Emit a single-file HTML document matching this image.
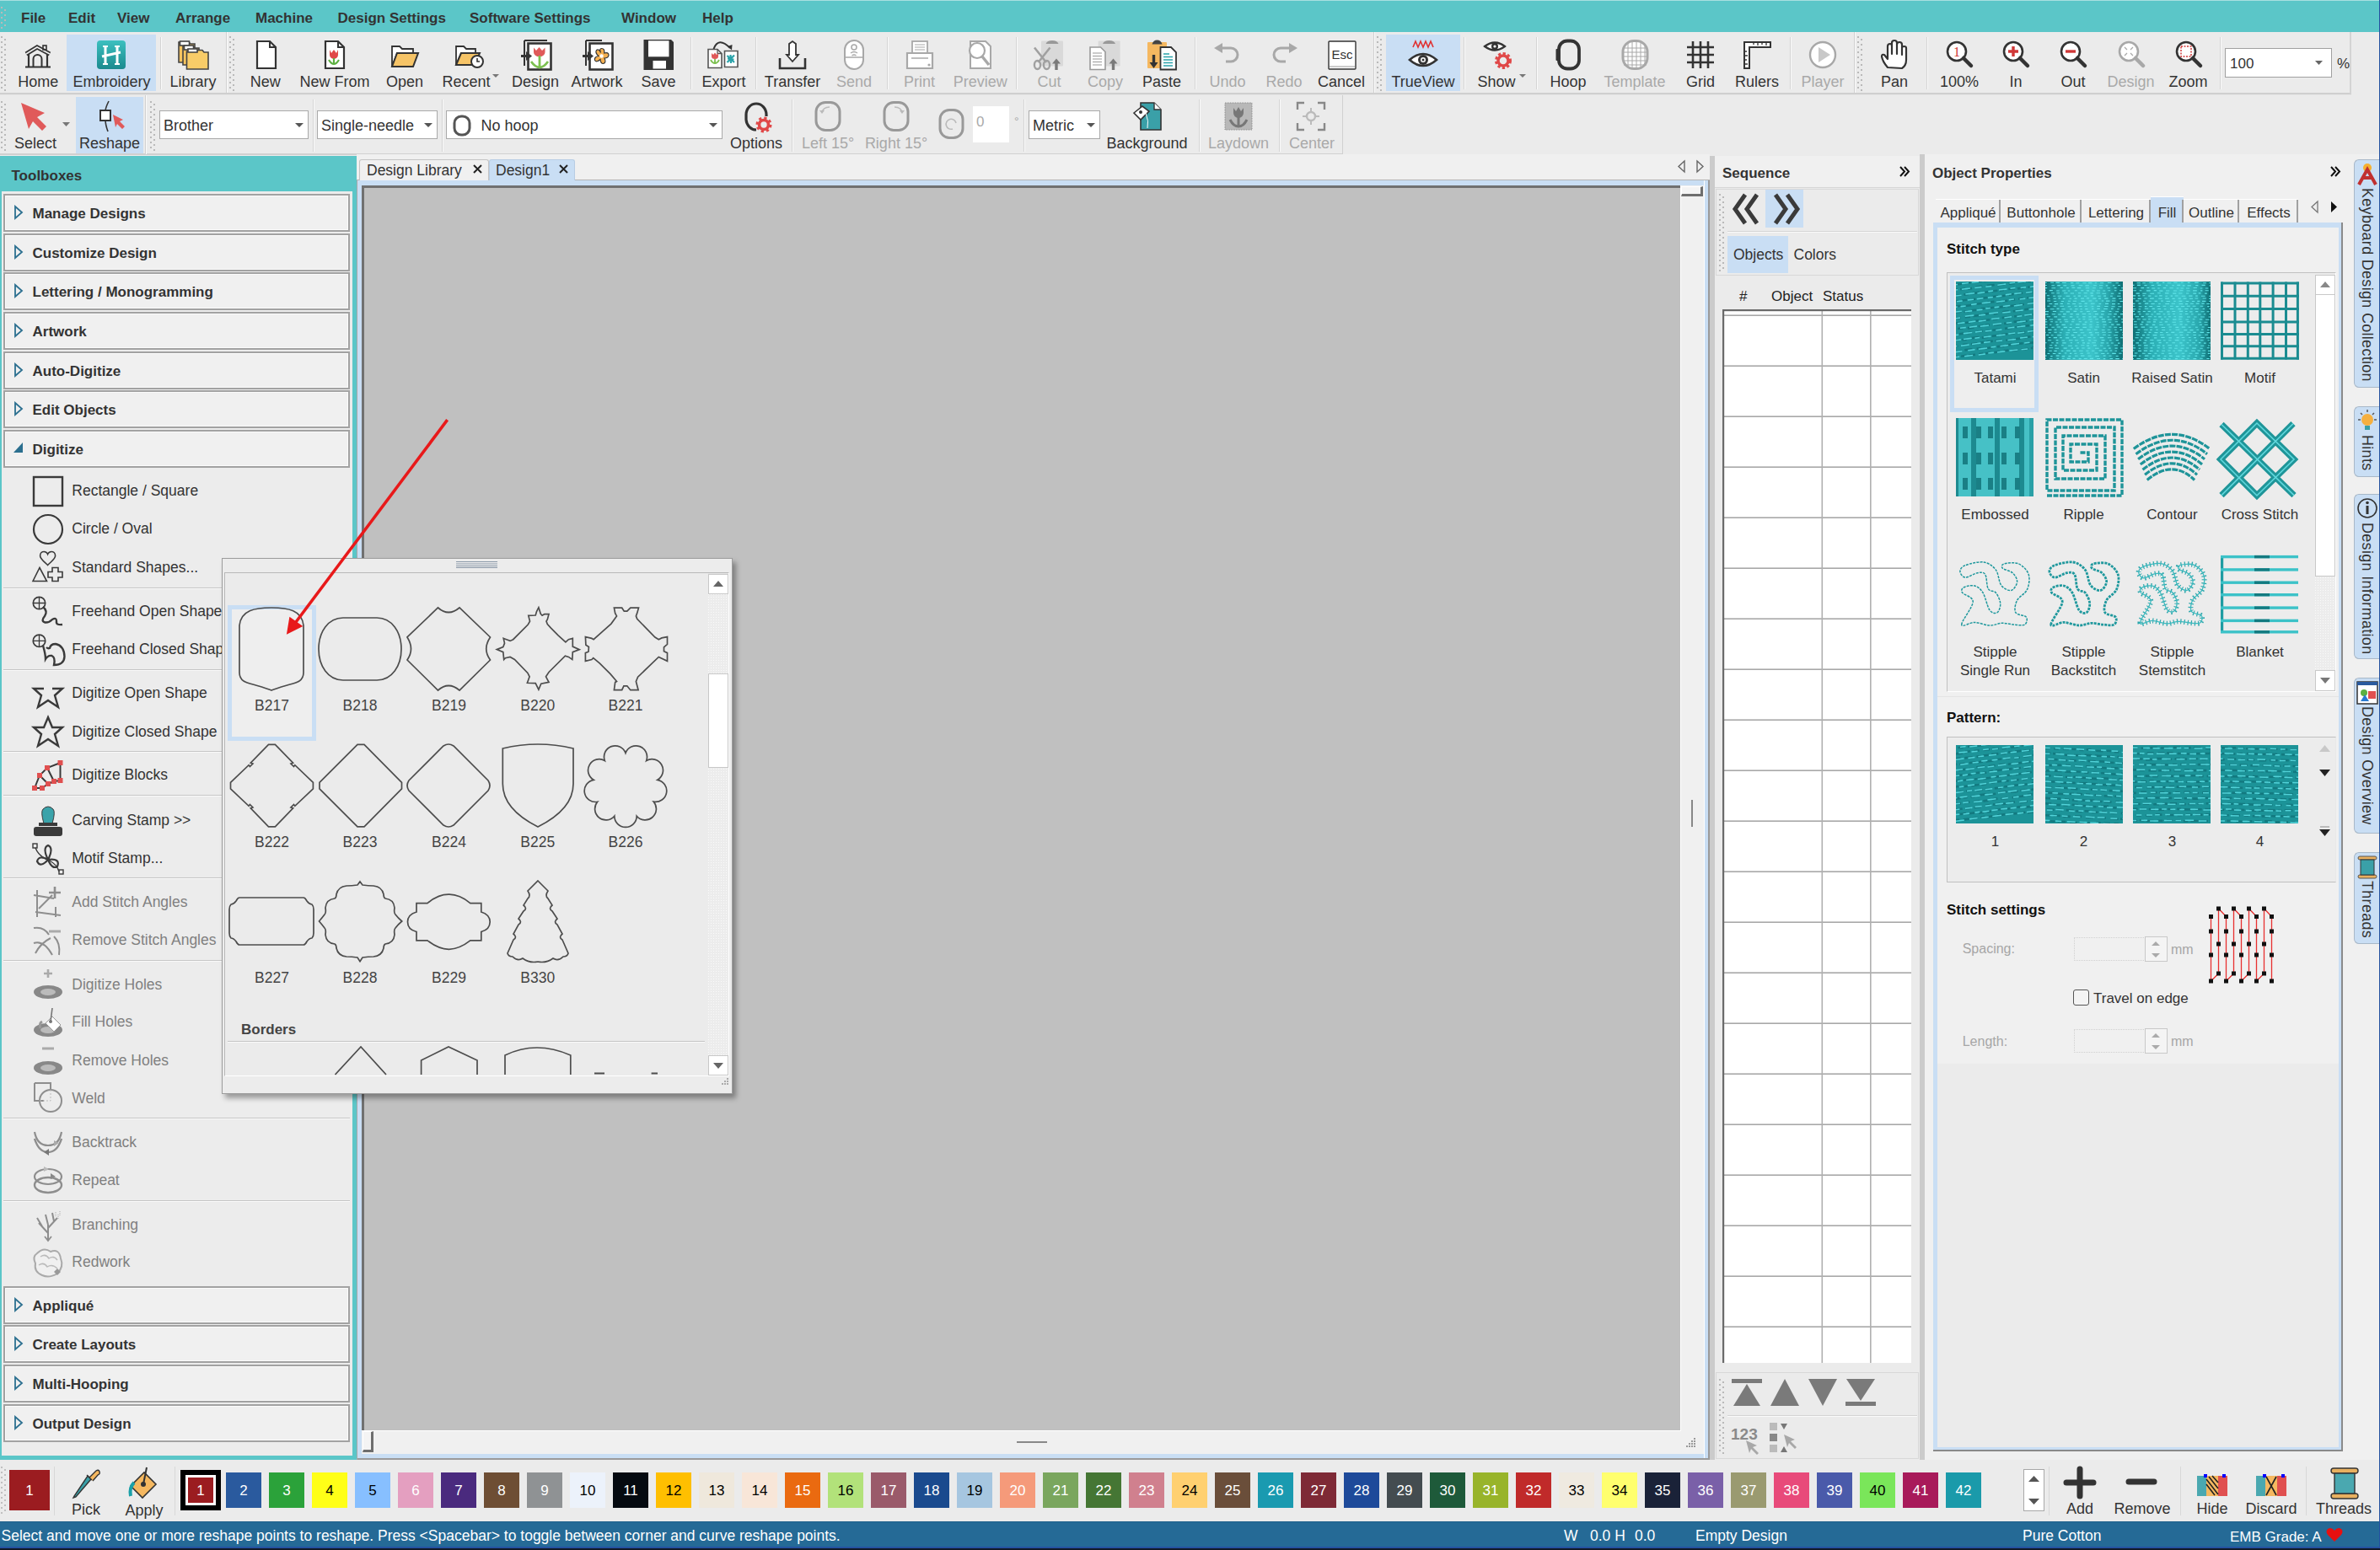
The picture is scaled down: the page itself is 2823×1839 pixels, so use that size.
<!DOCTYPE html>
<html><head><meta charset="utf-8"><style>
html,body{margin:0;padding:0;}
body{width:2823px;height:1839px;overflow:hidden;position:relative;background:#ebebeb;font-family:"Liberation Sans", sans-serif;}
body div{position:absolute;box-sizing:border-box;}
svg{overflow:visible}
</style></head><body>
<div style="left:0px;top:0px;width:2823px;height:38px;background:#5bc6c8;"></div><div style="left:0px;top:0px;width:2823px;height:1px;background:#a8e0e0;"></div><svg style="position:absolute;left:0px;top:8px;" width="8" height="26" viewBox="0 0 8 26"><rect x="1" y="0" width="2" height="2" fill="#b9b9b9"/><rect x="5" y="3" width="2" height="2" fill="#b9b9b9"/><rect x="1" y="6" width="2" height="2" fill="#b9b9b9"/><rect x="5" y="9" width="2" height="2" fill="#b9b9b9"/><rect x="1" y="12" width="2" height="2" fill="#b9b9b9"/><rect x="5" y="15" width="2" height="2" fill="#b9b9b9"/><rect x="1" y="18" width="2" height="2" fill="#b9b9b9"/><rect x="5" y="21" width="2" height="2" fill="#b9b9b9"/><rect x="1" y="24" width="2" height="2" fill="#b9b9b9"/></svg><div style="left:25px;top:12.5px;font-size:17px;line-height:17px;color:#333;font-weight:700;white-space:nowrap;">File</div><div style="left:81px;top:12.5px;font-size:17px;line-height:17px;color:#333;font-weight:700;white-space:nowrap;">Edit</div><div style="left:139px;top:12.5px;font-size:17px;line-height:17px;color:#333;font-weight:700;white-space:nowrap;">View</div><div style="left:208px;top:12.5px;font-size:17px;line-height:17px;color:#333;font-weight:700;white-space:nowrap;">Arrange</div><div style="left:303px;top:12.5px;font-size:17px;line-height:17px;color:#333;font-weight:700;white-space:nowrap;">Machine</div><div style="left:400.5px;top:12.5px;font-size:17px;line-height:17px;color:#333;font-weight:700;white-space:nowrap;">Design Settings</div><div style="left:557px;top:12.5px;font-size:17px;line-height:17px;color:#333;font-weight:700;white-space:nowrap;">Software Settings</div><div style="left:737px;top:12.5px;font-size:17px;line-height:17px;color:#333;font-weight:700;white-space:nowrap;">Window</div><div style="left:833px;top:12.5px;font-size:17px;line-height:17px;color:#333;font-weight:700;white-space:nowrap;">Help</div><div style="left:0px;top:38px;width:2823px;height:72px;background:#ebebeb;"></div><div style="left:0px;top:110px;width:2789px;height:3px;background:#cfcfcf;border-bottom:1px solid #e4e4e4;"></div><div style="left:2787px;top:38px;width:2px;height:73px;background:#d4d4d4;"></div><svg style="position:absolute;left:0px;top:43px;" width="8" height="64" viewBox="0 0 8 64"><rect x="1" y="0" width="2" height="2" fill="#b9b9b9"/><rect x="5" y="3" width="2" height="2" fill="#b9b9b9"/><rect x="1" y="6" width="2" height="2" fill="#b9b9b9"/><rect x="5" y="9" width="2" height="2" fill="#b9b9b9"/><rect x="1" y="12" width="2" height="2" fill="#b9b9b9"/><rect x="5" y="15" width="2" height="2" fill="#b9b9b9"/><rect x="1" y="18" width="2" height="2" fill="#b9b9b9"/><rect x="5" y="21" width="2" height="2" fill="#b9b9b9"/><rect x="1" y="24" width="2" height="2" fill="#b9b9b9"/><rect x="5" y="27" width="2" height="2" fill="#b9b9b9"/><rect x="1" y="30" width="2" height="2" fill="#b9b9b9"/><rect x="5" y="33" width="2" height="2" fill="#b9b9b9"/><rect x="1" y="36" width="2" height="2" fill="#b9b9b9"/><rect x="5" y="39" width="2" height="2" fill="#b9b9b9"/><rect x="1" y="42" width="2" height="2" fill="#b9b9b9"/><rect x="5" y="45" width="2" height="2" fill="#b9b9b9"/><rect x="1" y="48" width="2" height="2" fill="#b9b9b9"/><rect x="5" y="51" width="2" height="2" fill="#b9b9b9"/><rect x="1" y="54" width="2" height="2" fill="#b9b9b9"/><rect x="5" y="57" width="2" height="2" fill="#b9b9b9"/><rect x="1" y="60" width="2" height="2" fill="#b9b9b9"/><rect x="5" y="63" width="2" height="2" fill="#b9b9b9"/></svg><div style="left:79px;top:41px;width:106px;height:67px;background:#c9def4;"></div><div style="left:1644px;top:41px;width:88px;height:67px;background:#c9def4;"></div><svg style="position:absolute;left:27px;top:47px;" width="36" height="36" viewBox="0 0 36 36"><path d="M4 17 L17 9 L32 17" fill="none" stroke="#333" stroke-width="5"/><path d="M4 17 L17 9 L32 17" fill="none" stroke="#eee" stroke-width="1.6"/><rect x="24" y="7" width="4" height="5" fill="none" stroke="#333" stroke-width="1.6"/><path d="M7 17 V32 M29 17 V32 M3 32.5 H33" stroke="#333" stroke-width="2.2"/><path d="M12.5 32 V23 A5 5 0 0 1 22.5 23 V32" fill="none" stroke="#333" stroke-width="2"/></svg><div style="left:-14.7px;top:88.1px;width:120px;text-align:center;font-size:18px;line-height:18px;color:#333;font-weight:400;white-space:nowrap;">Home</div><svg style="position:absolute;left:114px;top:47px;" width="36" height="36" viewBox="0 0 36 36"><defs><linearGradient id="eg" x1="0" y1="0" x2="0" y2="1"><stop offset="0" stop-color="#3cc0bf"/><stop offset="1" stop-color="#1b8a8e"/></linearGradient></defs><rect x="1" y="1" width="34" height="34" rx="4" fill="url(#eg)"/><path d="M11 7 V30 M25 7 V30 M7 20 L29 15" stroke="#fff" stroke-width="3"/><path d="M8 8 H14 M22 8 H28 M8 29 H14 M22 29 H28" stroke="#fff" stroke-width="2"/></svg><div style="left:72.5px;top:88.1px;width:120px;text-align:center;font-size:18px;line-height:18px;color:#333;font-weight:400;white-space:nowrap;">Embroidery</div><svg style="position:absolute;left:211px;top:47px;" width="36" height="36" viewBox="0 0 36 36"><g stroke="#444" stroke-width="1.6"><path d="M1 3 H13 L15 5 H20 V27 H1 Z" fill="#f5c460"/><rect x="2.5" y="2" width="11" height="5" fill="#fff"/><path d="M6 8 H18 L20 10 H25 V30 H6 Z" fill="#f5c460"/><rect x="7.5" y="7" width="11" height="5" fill="#fff"/><path d="M10.5 14 H22 L24 12.5 H29 L31 15 H36 V35 H10.5 Z" fill="#f8cc68"/><rect x="12" y="11" width="11" height="4" fill="#fff"/></g></svg><div style="left:169.0px;top:88.1px;width:120px;text-align:center;font-size:18px;line-height:18px;color:#333;font-weight:400;white-space:nowrap;">Library</div><svg style="position:absolute;left:297px;top:47px;" width="36" height="36" viewBox="0 0 36 36"><path d="M8 2 H23 L30 9 V34 H8 Z" fill="#fff" stroke="#333" stroke-width="2.2"/><path d="M23 2 V9 H30" fill="none" stroke="#333" stroke-width="2"/></svg><div style="left:254.7px;top:88.1px;width:120px;text-align:center;font-size:18px;line-height:18px;color:#333;font-weight:400;white-space:nowrap;">New</div><svg style="position:absolute;left:379px;top:47px;" width="36" height="36" viewBox="0 0 36 36"><path d="M7 2 H22 L29 9 V34 H7 Z" fill="#fff" stroke="#333" stroke-width="2.2"/><path d="M22 2 V9 H29" fill="none" stroke="#333" stroke-width="2"/><path d="M12 12 L14 16 L17 12 L20 16 L22 12 V18 A5 5 0 0 1 12 18 Z" fill="#e04848"/><path d="M17 22 V30 M11 24 Q14 29 17 29 M23 24 Q20 29 17 29" stroke="#5cb040" stroke-width="2.2" fill="none"/></svg><div style="left:337.0px;top:88.1px;width:120px;text-align:center;font-size:18px;line-height:18px;color:#333;font-weight:400;white-space:nowrap;">New From</div><svg style="position:absolute;left:462px;top:47px;" width="36" height="36" viewBox="0 0 36 36"><path d="M3 8 H12 L15 11 H28 V16 H9 L3 32 Z" fill="#fff" stroke="#333" stroke-width="1.8"/><path d="M3 32 L9 16 H34 L28 32 Z" fill="#f6c467" stroke="#333" stroke-width="2"/></svg><div style="left:420.0px;top:88.1px;width:120px;text-align:center;font-size:18px;line-height:18px;color:#333;font-weight:400;white-space:nowrap;">Open</div><svg style="position:absolute;left:539px;top:47px;" width="36" height="36" viewBox="0 0 36 36"><path d="M2 8 H11 L14 11 H25 V16 H8 L2 30 Z" fill="#fff" stroke="#333" stroke-width="1.8"/><path d="M2 30 L8 16 H30 L24 30 Z" fill="#f6c467" stroke="#333" stroke-width="2"/><circle cx="27" cy="26" r="7" fill="#fff" stroke="#333" stroke-width="2"/><path d="M27 22 V26 H30" stroke="#333" stroke-width="1.6" fill="none"/></svg><div style="left:493.0px;top:88.1px;width:120px;text-align:center;font-size:18px;line-height:18px;color:#333;font-weight:400;white-space:nowrap;">Recent</div><svg style="position:absolute;left:617px;top:47px;" width="36" height="36" viewBox="0 0 36 36"><path d="M5 1 H32 M5 1 V31" stroke="#333" stroke-width="2" fill="none"/><rect x="9.5" y="4.5" width="27" height="31" fill="#fff" stroke="#333" stroke-width="2.6"/><path d="M16 9.5 L19 13 L22.5 9 L26 13 L29.5 9.5 V15 A6.5 5 0 0 1 16 15 Z" fill="#e05a5a"/><path d="M23 19 V33 M13 26 Q18 33 23 33 M33 26 Q28 33 23 33" stroke="#7cc050" stroke-width="2.8" fill="none"/><path d="M1 19.5 H9" stroke="#333" stroke-width="3"/><path d="M7 14 L14 19.5 L7 25 Z" fill="#333"/></svg><div style="left:575.0px;top:88.1px;width:120px;text-align:center;font-size:18px;line-height:18px;color:#333;font-weight:400;white-space:nowrap;">Design</div><svg style="position:absolute;left:690px;top:47px;" width="36" height="36" viewBox="0 0 36 36"><path d="M5 1 H24 M5 1 V31" stroke="#333" stroke-width="2" fill="none"/><rect x="9.5" y="4.5" width="27" height="31" fill="#fff" stroke="#333" stroke-width="2.6"/><g transform="translate(23.5 19.5)"><path d="M0 -9 Q4 -9 3.2 -3.5 Q8.5 -5 8.5 -1 Q8 2.5 3.5 2.5 Q6 8 2 9 Q-1 9 -1.5 4 Q-6 8 -8 5 Q-9 1 -3.5 0 Q-8 -4 -6 -7 Q-3 -9 -1 -4 Q-3 -9 0 -9 Z" fill="#f5b050" stroke="#333" stroke-width="1.2"/><circle r="2.2" fill="#fff"/></g><path d="M1 19.5 H9" stroke="#333" stroke-width="3"/><path d="M7 14 L14 19.5 L7 25 Z" fill="#333"/></svg><div style="left:648.0px;top:88.1px;width:120px;text-align:center;font-size:18px;line-height:18px;color:#333;font-weight:400;white-space:nowrap;">Artwork</div><svg style="position:absolute;left:763px;top:47px;" width="36" height="36" viewBox="0 0 36 36"><path d="M0.5 0 H33 L36 3 V36 H0.5 Z" fill="#333"/><rect x="6" y="1.3" width="24.5" height="19" fill="#fff"/><rect x="11.5" y="25" width="15.5" height="9.5" fill="#fff"/></svg><div style="left:721.0px;top:88.1px;width:120px;text-align:center;font-size:18px;line-height:18px;color:#333;font-weight:400;white-space:nowrap;">Save</div><svg style="position:absolute;left:840px;top:47px;" width="36" height="36" viewBox="0 0 36 36"><path d="M0 11.5 H11 L16 16.5 V33.5 H0 Z" fill="#fff" stroke="#555" stroke-width="1.6"/><path d="M11 11.5 V16.5 H16" fill="none" stroke="#555" stroke-width="1.3"/><path d="M19.5 13.5 H35 V32.5 H19.5 Z" fill="#fff" stroke="#555" stroke-width="1.6"/><path d="M4 16 L6 18 L8 15.5 L10 18 L12 16 V20 A4 3 0 0 1 4 20 Z" fill="#e05a5a"/><path d="M8 23 V28 M3 24 Q5 28 8 28 M13 24 Q11 28 8 28" stroke="#7cc050" stroke-width="1.8" fill="none"/><path d="M22.5 19 L31 27 M31 18.5 L22.5 27 M23 22.5 L30.5 23.5 M26.5 18 L27 28" stroke="#2aa3aa" stroke-width="2.2"/><path d="M6.5 11 Q12 -4 26 10" fill="none" stroke="#333" stroke-width="2"/><path d="M23 8 L28 12.5 L28.5 6 Z" fill="#333"/></svg><div style="left:798.5px;top:88.1px;width:120px;text-align:center;font-size:18px;line-height:18px;color:#333;font-weight:400;white-space:nowrap;">Export</div><svg style="position:absolute;left:922px;top:47px;" width="36" height="36" viewBox="0 0 36 36"><path d="M18 2 V22" stroke="#333" stroke-width="2" fill="none"/><path d="M14 5 L18 2 L22 5 V18 H25 L18 26 L11 18 H14 Z" fill="#fff" stroke="#333" stroke-width="1.8"/><path d="M3 22 V34 H33 V22" fill="none" stroke="#333" stroke-width="2.6"/></svg><div style="left:880.0px;top:88.1px;width:120px;text-align:center;font-size:18px;line-height:18px;color:#333;font-weight:400;white-space:nowrap;">Transfer</div><svg style="position:absolute;left:995px;top:47px;" width="36" height="36" viewBox="0 0 36 36"><path d="M7 12 A11 11 0 0 1 29 12 V24 A11 11 0 0 1 7 24 Z" fill="#fff" stroke="#a8a8a8" stroke-width="2"/><circle cx="18" cy="9" r="3" fill="none" stroke="#a8a8a8" stroke-width="1.5"/><path d="M8 21 H28" stroke="#a8a8a8" stroke-width="1.5"/><path d="M14 16 Q18 13 22 16 M15.5 19 Q18 17 20.5 19" fill="none" stroke="#a8a8a8" stroke-width="1.3"/></svg><div style="left:953.0px;top:88.1px;width:120px;text-align:center;font-size:18px;line-height:18px;color:#a9a9a9;font-weight:400;white-space:nowrap;">Send</div><svg style="position:absolute;left:1073px;top:47px;" width="36" height="36" viewBox="0 0 36 36"><rect x="9" y="2" width="18" height="14" fill="#fff" stroke="#a8a8a8" stroke-width="1.8"/><path d="M12 6 H24 M12 9 H24 M12 12 H24" stroke="#a8a8a8" stroke-width="1.2"/><path d="M3 16 H33 V34 H3 Z" fill="#fff" stroke="#a8a8a8" stroke-width="2.2"/><path d="M8 22 H28" stroke="#a8a8a8" stroke-width="1.5"/><circle cx="29" cy="30" r="1.6" fill="#a8a8a8"/></svg><div style="left:1030.6px;top:88.1px;width:120px;text-align:center;font-size:18px;line-height:18px;color:#a9a9a9;font-weight:400;white-space:nowrap;">Print</div><svg style="position:absolute;left:1145px;top:47px;" width="36" height="36" viewBox="0 0 36 36"><path d="M6 2 H24 L30 8 V34 H6 Z" fill="#fff" stroke="#a8a8a8" stroke-width="2"/><circle cx="14" cy="13" r="9" fill="#fff" stroke="#a8a8a8" stroke-width="2.2"/><path d="M20 20 L28 30" stroke="#a8a8a8" stroke-width="3.5"/></svg><div style="left:1102.7px;top:88.1px;width:120px;text-align:center;font-size:18px;line-height:18px;color:#a9a9a9;font-weight:400;white-space:nowrap;">Preview</div><svg style="position:absolute;left:1226px;top:47px;" width="36" height="36" viewBox="0 0 36 36"><rect x="9" y="1.5" width="26" height="30" rx="1" fill="#d9d9d9"/><path d="M14.5 5 Q16 1 22 1 Q28 1 29.5 5 Z" fill="#999"/><path d="M1 9.5 L15 27 M19.5 9.5 L5.5 27" stroke="#a0a0a0" stroke-width="2.6"/><ellipse cx="4.5" cy="30" rx="3.6" ry="5" fill="none" stroke="#a0a0a0" stroke-width="2.4"/><ellipse cx="15.5" cy="30" rx="3.6" ry="5" fill="none" stroke="#a0a0a0" stroke-width="2.4"/><path d="M27 36 V27" stroke="#7a7a7a" stroke-width="3.4"/><path d="M22 28.5 L27 22.5 L32 28.5 Z" fill="#7a7a7a"/></svg><div style="left:1184.5px;top:88.1px;width:120px;text-align:center;font-size:18px;line-height:18px;color:#a9a9a9;font-weight:400;white-space:nowrap;">Cut</div><svg style="position:absolute;left:1293px;top:47px;" width="36" height="36" viewBox="0 0 36 36"><rect x="9.6" y="1.5" width="26" height="30" rx="1" fill="#d9d9d9"/><path d="M15 5 Q16.5 1 22.5 1 Q28.5 1 30 5 Z" fill="#999"/><path d="M0 9 H12.5 L18 14.5 V35.5 H0 Z" fill="#fff" stroke="#999" stroke-width="1.6"/><path d="M3 16 H14 M3 19.5 H14 M3 23 H14 M3 26.5 H14 M3 30 H14" stroke="#999" stroke-width="1.2"/><path d="M27.5 36 V27" stroke="#7a7a7a" stroke-width="3.4"/><path d="M22.5 28.5 L27.5 22.5 L32.5 28.5 Z" fill="#7a7a7a"/></svg><div style="left:1251.0px;top:88.1px;width:120px;text-align:center;font-size:18px;line-height:18px;color:#a9a9a9;font-weight:400;white-space:nowrap;">Copy</div><svg style="position:absolute;left:1360px;top:47px;" width="36" height="36" viewBox="0 0 36 36"><rect x="1" y="3" width="23" height="31" rx="1" fill="#f5b860"/><path d="M6.5 5.5 Q8 0.5 12.5 0.5 Q17 0.5 18.5 5.5 Z" fill="#444"/><path d="M16.5 9 H29 L35 15 V35.5 H16.5 Z" fill="#fff" stroke="#333" stroke-width="1.8"/><path d="M20 17 H27 M20 20.5 H31 M20 24 H31 M20 27.5 H31 M20 31 H31" stroke="#2aa3aa" stroke-width="1.4"/><path d="M8.5 18 V28" stroke="#333" stroke-width="3.4"/><path d="M3.5 27 L8.5 34 L13.5 27 Z" fill="#333"/></svg><div style="left:1318.0px;top:88.1px;width:120px;text-align:center;font-size:18px;line-height:18px;color:#333;font-weight:400;white-space:nowrap;">Paste</div><svg style="position:absolute;left:1438px;top:47px;" width="36" height="36" viewBox="0 0 36 36"><path d="M10 10 H22 A8 8 0 0 1 22 26 H16" fill="none" stroke="#a8a8a8" stroke-width="3"/><path d="M2 10 L12 4 V16 Z" fill="#a8a8a8"/></svg><div style="left:1396.0px;top:88.1px;width:120px;text-align:center;font-size:18px;line-height:18px;color:#a9a9a9;font-weight:400;white-space:nowrap;">Undo</div><svg style="position:absolute;left:1505px;top:47px;" width="36" height="36" viewBox="0 0 36 36"><path d="M26 10 H14 A8 8 0 0 0 14 26 H20" fill="none" stroke="#a8a8a8" stroke-width="3"/><path d="M34 10 L24 4 V16 Z" fill="#a8a8a8"/></svg><div style="left:1463.0px;top:88.1px;width:120px;text-align:center;font-size:18px;line-height:18px;color:#a9a9a9;font-weight:400;white-space:nowrap;">Redo</div><svg style="position:absolute;left:1573px;top:47px;" width="36" height="36" viewBox="0 0 36 36"><rect x="3" y="2" width="32" height="33" rx="1" fill="#fff" stroke="#333" stroke-width="1.4"/><path d="M4 32 H34" stroke="#999" stroke-width="1"/><text x="19" y="23" font-size="15" text-anchor="middle" fill="#333" font-family="Liberation Sans">Esc</text></svg><div style="left:1531.0px;top:88.1px;width:120px;text-align:center;font-size:18px;line-height:18px;color:#333;font-weight:400;white-space:nowrap;">Cancel</div><svg style="position:absolute;left:1670px;top:47px;" width="36" height="36" viewBox="0 0 36 36"><path d="M6 9 L9 2 L12 9 L15 2 L18 9 L21 2 L24 9 L27 2 L30 9" fill="none" stroke="#e03030" stroke-width="1.6"/><path d="M2 24 Q18 10 34 24 Q18 38 2 24 Z" fill="#fff" stroke="#333" stroke-width="2.6"/><circle cx="18" cy="24" r="6" fill="#333"/><circle cx="18" cy="24" r="3" fill="#fff"/><circle cx="18" cy="24" r="1.5" fill="#333"/></svg><div style="left:1628.0px;top:88.1px;width:120px;text-align:center;font-size:18px;line-height:18px;color:#333;font-weight:400;white-space:nowrap;">TrueView</div><svg style="position:absolute;left:1759px;top:47px;" width="36" height="36" viewBox="0 0 36 36"><path d="M2 8 Q14 -1 26 8 Q14 17 2 8 Z" fill="#fff" stroke="#333" stroke-width="2.2"/><circle cx="14" cy="8" r="4" fill="#333"/><circle cx="14" cy="8" r="1.6" fill="#fff"/><circle cx="24" cy="25" r="8" fill="none" stroke="#e04848" stroke-width="4" stroke-dasharray="3 2.3"/><circle cx="24" cy="25" r="6" fill="none" stroke="#e04848" stroke-width="3.5"/></svg><div style="left:1715.0px;top:88.1px;width:120px;text-align:center;font-size:18px;line-height:18px;color:#333;font-weight:400;white-space:nowrap;">Show</div><svg style="position:absolute;left:1842px;top:47px;" width="36" height="36" viewBox="0 0 36 36"><rect x="7" y="1.5" width="24" height="33" rx="10" fill="none" stroke="#333" stroke-width="3.8"/><rect x="3.5" y="11" width="5" height="14" rx="1" fill="#333"/></svg><div style="left:1800.0px;top:88.1px;width:120px;text-align:center;font-size:18px;line-height:18px;color:#333;font-weight:400;white-space:nowrap;">Hoop</div><svg style="position:absolute;left:1921px;top:47px;" width="36" height="36" viewBox="0 0 36 36"><rect x="4" y="1.5" width="29" height="33" rx="13" fill="#fff" stroke="#a8a8a8" stroke-width="3"/><path d="M10 4 V33 M15 3 V34 M20 3 V34 M25 3 V34 M30 6 V30 M5 10 H32 M4 15 H33 M4 20 H33 M4 25 H33 M5 30 H32" stroke="#a8a8a8" stroke-width="1"/></svg><div style="left:1879.0px;top:88.1px;width:120px;text-align:center;font-size:18px;line-height:18px;color:#a9a9a9;font-weight:400;white-space:nowrap;">Template</div><svg style="position:absolute;left:1999px;top:47px;" width="36" height="36" viewBox="0 0 36 36"><path d="M9 2 V34 M18 2 V34 M27 2 V34 M2 9 H34 M2 18 H34 M2 27 H34" stroke="#333" stroke-width="2.6"/></svg><div style="left:1957.0px;top:88.1px;width:120px;text-align:center;font-size:18px;line-height:18px;color:#333;font-weight:400;white-space:nowrap;">Grid</div><svg style="position:absolute;left:2066px;top:47px;" width="36" height="36" viewBox="0 0 36 36"><path d="M3 3 H34 V9 H9 V34 H3 Z" fill="#fff" stroke="#333" stroke-width="2"/><path d="M14 3 V6 M19 3 V7 M24 3 V6 M29 3 V7 M3 14 H6 M3 19 H7 M3 24 H6 M3 29 H7" stroke="#333" stroke-width="1.3"/></svg><div style="left:2024.0px;top:88.1px;width:120px;text-align:center;font-size:18px;line-height:18px;color:#333;font-weight:400;white-space:nowrap;">Rulers</div><svg style="position:absolute;left:2144px;top:47px;" width="36" height="36" viewBox="0 0 36 36"><circle cx="18" cy="18" r="15" fill="#fff" stroke="#a8a8a8" stroke-width="2.4"/><path d="M13 9 L27 18 L13 27 Z" fill="#c8c8c8"/></svg><div style="left:2102.0px;top:88.1px;width:120px;text-align:center;font-size:18px;line-height:18px;color:#a9a9a9;font-weight:400;white-space:nowrap;">Player</div><svg style="position:absolute;left:2229px;top:47px;" width="36" height="36" viewBox="0 0 36 36"><path d="M10 33 Q4 26 3 20 Q3 17 6 18 L10 23 V8 Q10 5 13 5 Q15 5 15 8 V17 V4 Q15 1 18 1 Q21 1 21 4 V17 V6 Q21 3 24 3 Q27 3 27 6 V18 V10 Q27 8 29.5 8 Q32 8 32 10 V24 Q32 31 27 34 Z" fill="#fff" stroke="#333" stroke-width="2.2" stroke-linejoin="round"/></svg><div style="left:2187.0px;top:88.1px;width:120px;text-align:center;font-size:18px;line-height:18px;color:#333;font-weight:400;white-space:nowrap;">Pan</div><svg style="position:absolute;left:2306px;top:47px;" width="36" height="36" viewBox="0 0 36 36"><circle cx="15" cy="14" r="11" fill="#fff" stroke="#333" stroke-width="2.6"/><path d="M23 22 L32 31" stroke="#333" stroke-width="4.5" stroke-linecap="round"/><text x="15" y="20" font-size="16" text-anchor="middle" fill="#d03838" font-family="Liberation Serif">1</text></svg><div style="left:2264.0px;top:88.1px;width:120px;text-align:center;font-size:18px;line-height:18px;color:#333;font-weight:400;white-space:nowrap;">100%</div><svg style="position:absolute;left:2373px;top:47px;" width="36" height="36" viewBox="0 0 36 36"><circle cx="15" cy="14" r="11" fill="#fff" stroke="#333" stroke-width="2.6"/><path d="M23 22 L32 31" stroke="#333" stroke-width="4.5" stroke-linecap="round"/><path d="M15 8 V20 M9 14 H21" stroke="#d03838" stroke-width="3.4"/></svg><div style="left:2331.0px;top:88.1px;width:120px;text-align:center;font-size:18px;line-height:18px;color:#333;font-weight:400;white-space:nowrap;">In</div><svg style="position:absolute;left:2441px;top:47px;" width="36" height="36" viewBox="0 0 36 36"><circle cx="15" cy="14" r="11" fill="#fff" stroke="#333" stroke-width="2.6"/><path d="M23 22 L32 31" stroke="#333" stroke-width="4.5" stroke-linecap="round"/><path d="M9 14 H21" stroke="#d03838" stroke-width="3.4"/></svg><div style="left:2399.0px;top:88.1px;width:120px;text-align:center;font-size:18px;line-height:18px;color:#333;font-weight:400;white-space:nowrap;">Out</div><svg style="position:absolute;left:2510px;top:47px;" width="36" height="36" viewBox="0 0 36 36"><circle cx="15" cy="14" r="11" fill="#fff" stroke="#a8a8a8" stroke-width="2.6"/><path d="M23 22 L32 31" stroke="#a8a8a8" stroke-width="4.5" stroke-linecap="round"/><path d="M10 9 L13 12 M20 9 L17 12 M10 19 L13 16 M20 19 L17 16" stroke="#a8a8a8" stroke-width="1.2"/></svg><div style="left:2467.6px;top:88.1px;width:120px;text-align:center;font-size:18px;line-height:18px;color:#a9a9a9;font-weight:400;white-space:nowrap;">Design</div><svg style="position:absolute;left:2578px;top:47px;" width="36" height="36" viewBox="0 0 36 36"><circle cx="15" cy="14" r="11" fill="#fff" stroke="#333" stroke-width="2.6"/><path d="M23 22 L32 31" stroke="#333" stroke-width="4.5" stroke-linecap="round"/><rect x="9" y="8" width="12" height="12" fill="none" stroke="#d03838" stroke-width="1.5" stroke-dasharray="2 1.5"/></svg><div style="left:2535.6px;top:88.1px;width:120px;text-align:center;font-size:18px;line-height:18px;color:#333;font-weight:400;white-space:nowrap;">Zoom</div><svg style="position:absolute;left:584px;top:88px;" width="8" height="5" viewBox="0 0 8 5"><path d="M0 0 H8 L4 4 Z" fill="#777"/></svg><svg style="position:absolute;left:1802px;top:88px;" width="8" height="5" viewBox="0 0 8 5"><path d="M0 0 H8 L4 4 Z" fill="#777"/></svg><div style="left:190px;top:44px;width:1px;height:62px;background:#d4d4d4;"></div><div style="left:191px;top:44px;width:1px;height:62px;background:#fafafa;"></div><div style="left:819px;top:44px;width:1px;height:62px;background:#d4d4d4;"></div><div style="left:820px;top:44px;width:1px;height:62px;background:#fafafa;"></div><div style="left:896px;top:44px;width:1px;height:62px;background:#d4d4d4;"></div><div style="left:897px;top:44px;width:1px;height:62px;background:#fafafa;"></div><div style="left:1052px;top:44px;width:1px;height:62px;background:#d4d4d4;"></div><div style="left:1053px;top:44px;width:1px;height:62px;background:#fafafa;"></div><div style="left:1205px;top:44px;width:1px;height:62px;background:#d4d4d4;"></div><div style="left:1206px;top:44px;width:1px;height:62px;background:#fafafa;"></div><div style="left:1417px;top:44px;width:1px;height:62px;background:#d4d4d4;"></div><div style="left:1418px;top:44px;width:1px;height:62px;background:#fafafa;"></div><div style="left:1736px;top:44px;width:1px;height:62px;background:#d4d4d4;"></div><div style="left:1737px;top:44px;width:1px;height:62px;background:#fafafa;"></div><div style="left:1822px;top:44px;width:1px;height:62px;background:#d4d4d4;"></div><div style="left:1823px;top:44px;width:1px;height:62px;background:#fafafa;"></div><div style="left:2123px;top:44px;width:1px;height:62px;background:#d4d4d4;"></div><div style="left:2124px;top:44px;width:1px;height:62px;background:#fafafa;"></div><div style="left:2285px;top:44px;width:1px;height:62px;background:#d4d4d4;"></div><div style="left:2286px;top:44px;width:1px;height:62px;background:#fafafa;"></div><div style="left:2633px;top:44px;width:1px;height:62px;background:#d4d4d4;"></div><div style="left:2634px;top:44px;width:1px;height:62px;background:#fafafa;"></div><div style="left:268px;top:38px;width:1px;height:72px;background:#d0d0d0;"></div><div style="left:269px;top:38px;width:1px;height:72px;background:#fafafa;"></div><svg style="position:absolute;left:271px;top:43px;" width="8" height="64" viewBox="0 0 8 64"><rect x="1" y="0" width="2" height="2" fill="#b9b9b9"/><rect x="5" y="3" width="2" height="2" fill="#b9b9b9"/><rect x="1" y="6" width="2" height="2" fill="#b9b9b9"/><rect x="5" y="9" width="2" height="2" fill="#b9b9b9"/><rect x="1" y="12" width="2" height="2" fill="#b9b9b9"/><rect x="5" y="15" width="2" height="2" fill="#b9b9b9"/><rect x="1" y="18" width="2" height="2" fill="#b9b9b9"/><rect x="5" y="21" width="2" height="2" fill="#b9b9b9"/><rect x="1" y="24" width="2" height="2" fill="#b9b9b9"/><rect x="5" y="27" width="2" height="2" fill="#b9b9b9"/><rect x="1" y="30" width="2" height="2" fill="#b9b9b9"/><rect x="5" y="33" width="2" height="2" fill="#b9b9b9"/><rect x="1" y="36" width="2" height="2" fill="#b9b9b9"/><rect x="5" y="39" width="2" height="2" fill="#b9b9b9"/><rect x="1" y="42" width="2" height="2" fill="#b9b9b9"/><rect x="5" y="45" width="2" height="2" fill="#b9b9b9"/><rect x="1" y="48" width="2" height="2" fill="#b9b9b9"/><rect x="5" y="51" width="2" height="2" fill="#b9b9b9"/><rect x="1" y="54" width="2" height="2" fill="#b9b9b9"/><rect x="5" y="57" width="2" height="2" fill="#b9b9b9"/><rect x="1" y="60" width="2" height="2" fill="#b9b9b9"/><rect x="5" y="63" width="2" height="2" fill="#b9b9b9"/></svg><div style="left:1629px;top:38px;width:1px;height:72px;background:#d0d0d0;"></div><div style="left:1630px;top:38px;width:1px;height:72px;background:#fafafa;"></div><svg style="position:absolute;left:1632px;top:43px;" width="8" height="64" viewBox="0 0 8 64"><rect x="1" y="0" width="2" height="2" fill="#b9b9b9"/><rect x="5" y="3" width="2" height="2" fill="#b9b9b9"/><rect x="1" y="6" width="2" height="2" fill="#b9b9b9"/><rect x="5" y="9" width="2" height="2" fill="#b9b9b9"/><rect x="1" y="12" width="2" height="2" fill="#b9b9b9"/><rect x="5" y="15" width="2" height="2" fill="#b9b9b9"/><rect x="1" y="18" width="2" height="2" fill="#b9b9b9"/><rect x="5" y="21" width="2" height="2" fill="#b9b9b9"/><rect x="1" y="24" width="2" height="2" fill="#b9b9b9"/><rect x="5" y="27" width="2" height="2" fill="#b9b9b9"/><rect x="1" y="30" width="2" height="2" fill="#b9b9b9"/><rect x="5" y="33" width="2" height="2" fill="#b9b9b9"/><rect x="1" y="36" width="2" height="2" fill="#b9b9b9"/><rect x="5" y="39" width="2" height="2" fill="#b9b9b9"/><rect x="1" y="42" width="2" height="2" fill="#b9b9b9"/><rect x="5" y="45" width="2" height="2" fill="#b9b9b9"/><rect x="1" y="48" width="2" height="2" fill="#b9b9b9"/><rect x="5" y="51" width="2" height="2" fill="#b9b9b9"/><rect x="1" y="54" width="2" height="2" fill="#b9b9b9"/><rect x="5" y="57" width="2" height="2" fill="#b9b9b9"/><rect x="1" y="60" width="2" height="2" fill="#b9b9b9"/><rect x="5" y="63" width="2" height="2" fill="#b9b9b9"/></svg><div style="left:2199px;top:38px;width:1px;height:72px;background:#d0d0d0;"></div><div style="left:2200px;top:38px;width:1px;height:72px;background:#fafafa;"></div><svg style="position:absolute;left:2202px;top:43px;" width="8" height="64" viewBox="0 0 8 64"><rect x="1" y="0" width="2" height="2" fill="#b9b9b9"/><rect x="5" y="3" width="2" height="2" fill="#b9b9b9"/><rect x="1" y="6" width="2" height="2" fill="#b9b9b9"/><rect x="5" y="9" width="2" height="2" fill="#b9b9b9"/><rect x="1" y="12" width="2" height="2" fill="#b9b9b9"/><rect x="5" y="15" width="2" height="2" fill="#b9b9b9"/><rect x="1" y="18" width="2" height="2" fill="#b9b9b9"/><rect x="5" y="21" width="2" height="2" fill="#b9b9b9"/><rect x="1" y="24" width="2" height="2" fill="#b9b9b9"/><rect x="5" y="27" width="2" height="2" fill="#b9b9b9"/><rect x="1" y="30" width="2" height="2" fill="#b9b9b9"/><rect x="5" y="33" width="2" height="2" fill="#b9b9b9"/><rect x="1" y="36" width="2" height="2" fill="#b9b9b9"/><rect x="5" y="39" width="2" height="2" fill="#b9b9b9"/><rect x="1" y="42" width="2" height="2" fill="#b9b9b9"/><rect x="5" y="45" width="2" height="2" fill="#b9b9b9"/><rect x="1" y="48" width="2" height="2" fill="#b9b9b9"/><rect x="5" y="51" width="2" height="2" fill="#b9b9b9"/><rect x="1" y="54" width="2" height="2" fill="#b9b9b9"/><rect x="5" y="57" width="2" height="2" fill="#b9b9b9"/><rect x="1" y="60" width="2" height="2" fill="#b9b9b9"/><rect x="5" y="63" width="2" height="2" fill="#b9b9b9"/></svg><div style="left:2639px;top:57px;width:127px;height:35px;background:#fff;border:1px solid #a0a0a0;"></div><div style="left:2645px;top:67.0px;font-size:17px;line-height:17px;color:#333;font-weight:400;white-space:nowrap;">100</div><svg style="position:absolute;left:2746px;top:72px;" width="9" height="5" viewBox="0 0 9 5"><path d="M0 0 H9 L4.5 5 Z" fill="#666"/></svg><div style="left:2772px;top:67.0px;font-size:17px;line-height:17px;color:#333;font-weight:400;white-space:nowrap;">%</div><div style="left:0px;top:113px;width:1593px;height:70px;background:#ebebeb;"></div><div style="left:0px;top:182px;width:1593px;height:2px;background:#d0d0d0;"></div><div style="left:1592px;top:113px;width:1px;height:70px;background:#d0d0d0;"></div><svg style="position:absolute;left:0px;top:120px;" width="8" height="60" viewBox="0 0 8 60"><rect x="1" y="0" width="2" height="2" fill="#b9b9b9"/><rect x="5" y="3" width="2" height="2" fill="#b9b9b9"/><rect x="1" y="6" width="2" height="2" fill="#b9b9b9"/><rect x="5" y="9" width="2" height="2" fill="#b9b9b9"/><rect x="1" y="12" width="2" height="2" fill="#b9b9b9"/><rect x="5" y="15" width="2" height="2" fill="#b9b9b9"/><rect x="1" y="18" width="2" height="2" fill="#b9b9b9"/><rect x="5" y="21" width="2" height="2" fill="#b9b9b9"/><rect x="1" y="24" width="2" height="2" fill="#b9b9b9"/><rect x="5" y="27" width="2" height="2" fill="#b9b9b9"/><rect x="1" y="30" width="2" height="2" fill="#b9b9b9"/><rect x="5" y="33" width="2" height="2" fill="#b9b9b9"/><rect x="1" y="36" width="2" height="2" fill="#b9b9b9"/><rect x="5" y="39" width="2" height="2" fill="#b9b9b9"/><rect x="1" y="42" width="2" height="2" fill="#b9b9b9"/><rect x="5" y="45" width="2" height="2" fill="#b9b9b9"/><rect x="1" y="48" width="2" height="2" fill="#b9b9b9"/><rect x="5" y="51" width="2" height="2" fill="#b9b9b9"/><rect x="1" y="54" width="2" height="2" fill="#b9b9b9"/><rect x="5" y="57" width="2" height="2" fill="#b9b9b9"/></svg><div style="left:90px;top:115px;width:80px;height:67px;background:#c9def4;"></div><svg style="position:absolute;left:23px;top:120px;" width="36" height="36" viewBox="0 0 36 36"><path d="M2 2 L30 14 L21 19 L32 30 L27 35 L16 24 L11 33 Z" fill="#e05a5a"/></svg><svg style="position:absolute;left:74px;top:145px;" width="9" height="5" viewBox="0 0 9 5"><path d="M0 0 H9 L4.5 5 Z" fill="#777"/></svg><div style="left:-8.0px;top:161.1px;width:100px;text-align:center;font-size:18px;line-height:18px;color:#333;font-weight:400;white-space:nowrap;">Select</div><svg style="position:absolute;left:112px;top:120px;" width="36" height="36" viewBox="0 0 36 36"><path d="M17 0 Q13 8 13 12 M13 22 Q13 28 16 36" fill="none" stroke="#333" stroke-width="1.6"/><rect x="7" y="11" width="12" height="12" fill="#fff" stroke="#333" stroke-width="2"/><path d="M22 16 L34 22 L30 24 L36 30 L33 33 L27 27 L25 31 Z" fill="#e05a5a"/></svg><div style="left:80.0px;top:161.1px;width:100px;text-align:center;font-size:18px;line-height:18px;color:#333;font-weight:400;white-space:nowrap;">Reshape</div><div style="left:172px;top:113px;width:1px;height:70px;background:#d0d0d0;"></div><div style="left:173px;top:113px;width:1px;height:70px;background:#fafafa;"></div><svg style="position:absolute;left:177px;top:120px;" width="8" height="60" viewBox="0 0 8 60"><rect x="1" y="0" width="2" height="2" fill="#b9b9b9"/><rect x="5" y="3" width="2" height="2" fill="#b9b9b9"/><rect x="1" y="6" width="2" height="2" fill="#b9b9b9"/><rect x="5" y="9" width="2" height="2" fill="#b9b9b9"/><rect x="1" y="12" width="2" height="2" fill="#b9b9b9"/><rect x="5" y="15" width="2" height="2" fill="#b9b9b9"/><rect x="1" y="18" width="2" height="2" fill="#b9b9b9"/><rect x="5" y="21" width="2" height="2" fill="#b9b9b9"/><rect x="1" y="24" width="2" height="2" fill="#b9b9b9"/><rect x="5" y="27" width="2" height="2" fill="#b9b9b9"/><rect x="1" y="30" width="2" height="2" fill="#b9b9b9"/><rect x="5" y="33" width="2" height="2" fill="#b9b9b9"/><rect x="1" y="36" width="2" height="2" fill="#b9b9b9"/><rect x="5" y="39" width="2" height="2" fill="#b9b9b9"/><rect x="1" y="42" width="2" height="2" fill="#b9b9b9"/><rect x="5" y="45" width="2" height="2" fill="#b9b9b9"/><rect x="1" y="48" width="2" height="2" fill="#b9b9b9"/><rect x="5" y="51" width="2" height="2" fill="#b9b9b9"/><rect x="1" y="54" width="2" height="2" fill="#b9b9b9"/><rect x="5" y="57" width="2" height="2" fill="#b9b9b9"/></svg><div style="left:189px;top:131px;width:177px;height:34px;background:#fff;border:1px solid #a9a9a9;"></div><div style="left:194px;top:140.1px;font-size:18px;line-height:18px;color:#333;font-weight:400;white-space:nowrap;">Brother</div><svg style="position:absolute;left:350px;top:146px;" width="10" height="5" viewBox="0 0 10 5"><path d="M0 0 H10 L5 5 Z" fill="#555"/></svg><div style="left:371px;top:118px;width:1px;height:62px;background:#d4d4d4;"></div><div style="left:372px;top:118px;width:1px;height:62px;background:#fafafa;"></div><div style="left:376px;top:131px;width:143px;height:34px;background:#fff;border:1px solid #a9a9a9;"></div><div style="left:381px;top:140.1px;font-size:18px;line-height:18px;color:#333;font-weight:400;white-space:nowrap;">Single-needle</div><svg style="position:absolute;left:503px;top:146px;" width="10" height="5" viewBox="0 0 10 5"><path d="M0 0 H10 L5 5 Z" fill="#555"/></svg><div style="left:524px;top:118px;width:1px;height:62px;background:#d4d4d4;"></div><div style="left:525px;top:118px;width:1px;height:62px;background:#fafafa;"></div><div style="left:529px;top:131px;width:328px;height:34px;background:#fff;border:1px solid #a9a9a9;"></div><div style="left:570.5px;top:140.1px;font-size:18px;line-height:18px;color:#333;font-weight:400;white-space:nowrap;">No hoop</div><svg style="position:absolute;left:841px;top:146px;" width="10" height="5" viewBox="0 0 10 5"><path d="M0 0 H10 L5 5 Z" fill="#555"/></svg><svg style="position:absolute;left:537px;top:136px;" width="22" height="26" viewBox="0 0 22 26"><rect x="2" y="2" width="18" height="22" rx="8" fill="none" stroke="#555" stroke-width="3"/></svg><svg style="position:absolute;left:879px;top:120px;" width="36" height="36" viewBox="0 0 36 36"><path d="M18 3 A12 13 0 0 0 6 16 V22 A12 13 0 0 0 18 34" fill="none" stroke="#333" stroke-width="3.2"/><path d="M18 3 A12 13 0 0 1 30 16 V18" fill="none" stroke="#333" stroke-width="3.2"/><circle cx="27" cy="28" r="7.5" fill="none" stroke="#e04848" stroke-width="4" stroke-dasharray="3 2.9"/><circle cx="27" cy="28" r="5.5" fill="none" stroke="#e04848" stroke-width="3.6"/></svg><div style="left:847.0px;top:161.1px;width:100px;text-align:center;font-size:18px;line-height:18px;color:#333;font-weight:400;white-space:nowrap;">Options</div><div style="left:939px;top:118px;width:1px;height:62px;background:#d4d4d4;"></div><div style="left:940px;top:118px;width:1px;height:62px;background:#fafafa;"></div><svg style="position:absolute;left:964px;top:120px;" width="36" height="36" viewBox="0 0 36 36"><rect x="4" y="1.5" width="28" height="33" rx="11" fill="none" stroke="#999" stroke-width="3"/><path d="M20 7 Q12 7 11 14" fill="none" stroke="#bbb" stroke-width="1.6"/><path d="M8 11 L11 15 L14 11" fill="#bbb"/></svg><div style="left:932.0px;top:161.1px;width:100px;text-align:center;font-size:18px;line-height:18px;color:#a9a9a9;font-weight:400;white-space:nowrap;">Left 15°</div><svg style="position:absolute;left:1045px;top:120px;" width="36" height="36" viewBox="0 0 36 36"><rect x="4" y="1.5" width="28" height="33" rx="11" fill="none" stroke="#999" stroke-width="3"/><path d="M16 7 Q24 7 25 14" fill="none" stroke="#bbb" stroke-width="1.6"/><path d="M22 11 L25 15 L28 11" fill="#bbb"/></svg><div style="left:1013.0px;top:161.1px;width:100px;text-align:center;font-size:18px;line-height:18px;color:#a9a9a9;font-weight:400;white-space:nowrap;">Right 15°</div><svg style="position:absolute;left:1113px;top:129px;" width="32" height="36" viewBox="0 0 32 36"><rect x="2" y="1.5" width="27" height="33" rx="11" fill="none" stroke="#999" stroke-width="3"/><path d="M21 17 A6 6 0 1 0 17 24" fill="none" stroke="#bbb" stroke-width="1.6"/></svg><div style="left:1154px;top:126px;width:43px;height:43px;background:#fff;"></div><div style="left:1158px;top:135.5px;font-size:17px;line-height:17px;color:#aaa;font-weight:400;white-space:nowrap;">0</div><div style="left:1203px;top:136.8px;font-size:14px;line-height:14px;color:#aaa;font-weight:400;white-space:nowrap;">°</div><div style="left:1214px;top:118px;width:1px;height:62px;background:#d4d4d4;"></div><div style="left:1215px;top:118px;width:1px;height:62px;background:#fafafa;"></div><div style="left:1220px;top:131px;width:85px;height:34px;background:#fff;border:1px solid #a9a9a9;"></div><div style="left:1225px;top:140.1px;font-size:18px;line-height:18px;color:#333;font-weight:400;white-space:nowrap;">Metric</div><svg style="position:absolute;left:1289px;top:146px;" width="10" height="5" viewBox="0 0 10 5"><path d="M0 0 H10 L5 5 Z" fill="#555"/></svg><svg style="position:absolute;left:1343px;top:120px;" width="36" height="36" viewBox="0 0 36 36"><path d="M10 2 H26 L34 10 V34 H10 Z" fill="#3aa0a8" stroke="#333" stroke-width="1.6"/><path d="M26 2 V10 H34" fill="#fff" stroke="#333" stroke-width="1.4"/><path d="M2 14 L12 6 L20 12 L10 22 Z" fill="#fff" stroke="#333" stroke-width="1.6"/><circle cx="10" cy="13" r="2" fill="#333"/><path d="M16 14 Q20 24 18 32" stroke="#fff" stroke-width="1" fill="none"/></svg><div style="left:1295.6px;top:161.1px;width:130px;text-align:center;font-size:18px;line-height:18px;color:#333;font-weight:400;white-space:nowrap;">Background</div><div style="left:1422px;top:118px;width:1px;height:62px;background:#d4d4d4;"></div><div style="left:1423px;top:118px;width:1px;height:62px;background:#fafafa;"></div><svg style="position:absolute;left:1451px;top:120px;" width="36" height="36" viewBox="0 0 36 36"><rect x="2" y="2" width="32" height="32" fill="#b8b8b8"/><path d="M2 2 H34 V34 H2 Z" fill="none" stroke="#888" stroke-width="1" stroke-dasharray="1 1"/><path d="M12 8 L15 12 L18 7 L21 12 L24 8 V14 A6 6 0 0 1 12 14 Z" fill="#777"/><path d="M18 19 V30 M8 22 Q12 30 18 30 M28 22 Q24 30 18 30" stroke="#777" stroke-width="3" fill="none"/></svg><div style="left:1419.0px;top:161.1px;width:100px;text-align:center;font-size:18px;line-height:18px;color:#a9a9a9;font-weight:400;white-space:nowrap;">Laydown</div><div style="left:1517px;top:118px;width:1px;height:62px;background:#d4d4d4;"></div><div style="left:1518px;top:118px;width:1px;height:62px;background:#fafafa;"></div><svg style="position:absolute;left:1537px;top:120px;" width="36" height="36" viewBox="0 0 36 36"><path d="M2 10 V2 H10 M26 2 H34 V10 M34 26 V34 H26 M10 34 H2 V26" fill="none" stroke="#888" stroke-width="2.4"/><circle cx="18" cy="18" r="5" fill="none" stroke="#bbb" stroke-width="2.4"/><path d="M18 8 V13 M18 23 V28 M8 18 H13 M23 18 H28" stroke="#bbb" stroke-width="2"/></svg><div style="left:1506.0px;top:161.1px;width:100px;text-align:center;font-size:18px;line-height:18px;color:#a9a9a9;font-weight:400;white-space:nowrap;">Center</div><div style="left:0px;top:185px;width:423px;height:1548px;background:#5bc6c8;"></div><div style="left:2px;top:227px;width:416px;height:1500px;background:#ececec;"></div><div style="left:13.5px;top:199.5px;font-size:17px;line-height:17px;color:#333;font-weight:700;white-space:nowrap;">Toolboxes</div><div style="left:4px;top:230px;width:411px;height:45px;background:#f0f0f0;border:2px solid #a2a2a2;box-shadow:inset 0 0 0 1px #fbfbfb;"></div><svg style="position:absolute;left:16px;top:243px;" width="12" height="18" viewBox="0 0 12 18"><path d="M2 2 L10 9 L2 16 Z" fill="none" stroke="#2b6f8f" stroke-width="1.8"/></svg><div style="left:38.5px;top:245.0px;font-size:17px;line-height:17px;color:#333;font-weight:700;white-space:nowrap;">Manage Designs</div><div style="left:4px;top:277px;width:411px;height:45px;background:#f0f0f0;border:2px solid #a2a2a2;box-shadow:inset 0 0 0 1px #fbfbfb;"></div><svg style="position:absolute;left:16px;top:290px;" width="12" height="18" viewBox="0 0 12 18"><path d="M2 2 L10 9 L2 16 Z" fill="none" stroke="#2b6f8f" stroke-width="1.8"/></svg><div style="left:38.5px;top:292.0px;font-size:17px;line-height:17px;color:#333;font-weight:700;white-space:nowrap;">Customize Design</div><div style="left:4px;top:323px;width:411px;height:45px;background:#f0f0f0;border:2px solid #a2a2a2;box-shadow:inset 0 0 0 1px #fbfbfb;"></div><svg style="position:absolute;left:16px;top:336px;" width="12" height="18" viewBox="0 0 12 18"><path d="M2 2 L10 9 L2 16 Z" fill="none" stroke="#2b6f8f" stroke-width="1.8"/></svg><div style="left:38.5px;top:338.0px;font-size:17px;line-height:17px;color:#333;font-weight:700;white-space:nowrap;">Lettering / Monogramming</div><div style="left:4px;top:370px;width:411px;height:45px;background:#f0f0f0;border:2px solid #a2a2a2;box-shadow:inset 0 0 0 1px #fbfbfb;"></div><svg style="position:absolute;left:16px;top:383px;" width="12" height="18" viewBox="0 0 12 18"><path d="M2 2 L10 9 L2 16 Z" fill="none" stroke="#2b6f8f" stroke-width="1.8"/></svg><div style="left:38.5px;top:385.0px;font-size:17px;line-height:17px;color:#333;font-weight:700;white-space:nowrap;">Artwork</div><div style="left:4px;top:417px;width:411px;height:45px;background:#f0f0f0;border:2px solid #a2a2a2;box-shadow:inset 0 0 0 1px #fbfbfb;"></div><svg style="position:absolute;left:16px;top:430px;" width="12" height="18" viewBox="0 0 12 18"><path d="M2 2 L10 9 L2 16 Z" fill="none" stroke="#2b6f8f" stroke-width="1.8"/></svg><div style="left:38.5px;top:432.0px;font-size:17px;line-height:17px;color:#333;font-weight:700;white-space:nowrap;">Auto-Digitize</div><div style="left:4px;top:463px;width:411px;height:45px;background:#f0f0f0;border:2px solid #a2a2a2;box-shadow:inset 0 0 0 1px #fbfbfb;"></div><svg style="position:absolute;left:16px;top:476px;" width="12" height="18" viewBox="0 0 12 18"><path d="M2 2 L10 9 L2 16 Z" fill="none" stroke="#2b6f8f" stroke-width="1.8"/></svg><div style="left:38.5px;top:478.0px;font-size:17px;line-height:17px;color:#333;font-weight:700;white-space:nowrap;">Edit Objects</div><div style="left:4px;top:510px;width:411px;height:45px;background:#f0f0f0;border:2px solid #a2a2a2;box-shadow:inset 0 0 0 1px #fbfbfb;"></div><svg style="position:absolute;left:15px;top:524px;" width="13" height="15" viewBox="0 0 13 15"><path d="M12 1 V13 H1 Z" fill="#2b6f8f"/></svg><div style="left:38.5px;top:525.0px;font-size:17px;line-height:17px;color:#333;font-weight:700;white-space:nowrap;">Digitize</div><svg style="position:absolute;left:38px;top:564px;opacity:1;" width="38" height="38" viewBox="0 0 38 38"><rect x="2" y="2" width="34" height="34" fill="none" stroke="#3a3a3a" stroke-width="2.4"/></svg><div style="left:85.3px;top:574.3px;font-size:17.5px;line-height:17.5px;color:#333;font-weight:400;white-space:nowrap;">Rectangle / Square</div><svg style="position:absolute;left:38px;top:609px;opacity:1;" width="38" height="38" viewBox="0 0 38 38"><circle cx="19" cy="19" r="17" fill="none" stroke="#3a3a3a" stroke-width="2.2"/></svg><div style="left:85.3px;top:619.3px;font-size:17.5px;line-height:17.5px;color:#333;font-weight:400;white-space:nowrap;">Circle / Oval</div><svg style="position:absolute;left:38px;top:654px;opacity:1;" width="38" height="38" viewBox="0 0 38 38"><path d="M18.6 16.5 C14 12 9.6 9 9.6 5.5 C9.6 2 12 0.5 14.2 0.5 C16.5 0.5 18 2 18.6 3.5 C19.2 2 20.7 0.5 23 0.5 C25.2 0.5 27.6 2 27.6 5.5 C27.6 9 23 12 18.6 16.5 Z" fill="none" stroke="#3a3a3a" stroke-width="1.6"/><path d="M1 35.5 L9 19.5 L17.5 35.5 Z" fill="none" stroke="#3a3a3a" stroke-width="1.6"/><path d="M24 19.5 H31 V24.5 H36 V31 H31 V35.5 H24 V31 H19 V24.5 H24 Z" fill="none" stroke="#3a3a3a" stroke-width="1.6"/></svg><div style="left:85.3px;top:664.8px;font-size:17.5px;line-height:17.5px;color:#333;font-weight:400;white-space:nowrap;">Standard Shapes...</div><svg style="position:absolute;left:38px;top:707px;opacity:1;" width="38" height="38" viewBox="0 0 38 38"><circle cx="8.5" cy="8.5" r="7.2" fill="none" stroke="#3a3a3a" stroke-width="1.7"/><path d="M8.5 1.3 V15.7 M1.3 8.5 H15.7" stroke="#3a3a3a" stroke-width="1.3"/><path d="M13 13 Q19 18 15 24 Q10 30 15.5 31.5 Q20 32 24 28 Q29 25 29 30 Q28 35 36 34" fill="none" stroke="#3a3a3a" stroke-width="2.4"/></svg><div style="left:85.3px;top:717.3px;font-size:17.5px;line-height:17.5px;color:#333;font-weight:400;white-space:nowrap;">Freehand Open Shape</div><svg style="position:absolute;left:38px;top:752px;opacity:1;" width="38" height="38" viewBox="0 0 38 38"><circle cx="8.5" cy="8.3" r="7.2" fill="none" stroke="#3a3a3a" stroke-width="1.7"/><path d="M8.5 1.1 V15.5 M1.3 8.3 H15.7" stroke="#3a3a3a" stroke-width="1.3"/><path d="M13 14 Q16 24 16 30 Q19 25 23.5 26 Q28 28 26 37 Q38 37 38.5 27 Q38 14 28 12 Q22 12 21 17 Q19 18 17 16" fill="none" stroke="#3a3a3a" stroke-width="2.4"/></svg><div style="left:85.3px;top:762.3px;font-size:17.5px;line-height:17.5px;color:#333;font-weight:400;white-space:nowrap;">Freehand Closed Shape</div><svg style="position:absolute;left:38px;top:804px;opacity:1;" width="38" height="38" viewBox="0 0 38 38"><path d="M14 13 H2 L11 21 L7 35 L19 27 L31 35 L27 21 L36 13 H24" fill="none" stroke="#3a3a3a" stroke-width="2.4" stroke-linejoin="miter"/></svg><div style="left:85.3px;top:814.3px;font-size:17.5px;line-height:17.5px;color:#333;font-weight:400;white-space:nowrap;">Digitize Open Shape</div><svg style="position:absolute;left:38px;top:849px;opacity:1;" width="38" height="38" viewBox="0 0 38 38"><path d="M19 2 L24 14 L36 14 L27 22 L31 36 L19 28 L7 36 L11 22 L2 14 L14 14 Z" fill="none" stroke="#3a3a3a" stroke-width="2.4"/></svg><div style="left:85.3px;top:859.7px;font-size:17.5px;line-height:17.5px;color:#333;font-weight:400;white-space:nowrap;">Digitize Closed Shape</div><svg style="position:absolute;left:38px;top:901px;opacity:1;" width="38" height="38" viewBox="0 0 38 38"><path d="M3 34 L9 19 L18 10 L33.5 4 V25 L26 26 L19 29 L12 34 Z M9 19 L19 29 M18 10 L26 26" fill="none" stroke="#3a3a3a" stroke-width="2"/><rect x="0" y="31" width="6" height="6" fill="#e05050"/><rect x="9" y="31" width="6" height="6" fill="#e05050"/><rect x="16" y="26" width="6" height="6" fill="#e05050"/><rect x="23" y="23" width="6" height="6" fill="#e05050"/><rect x="30.5" y="22" width="6" height="6" fill="#e05050"/><rect x="30.5" y="1" width="6" height="6" fill="#e05050"/><rect x="15" y="7" width="6" height="6" fill="#e05050"/><rect x="6" y="16" width="6" height="6" fill="#e05050"/></svg><div style="left:85.3px;top:911.3px;font-size:17.5px;line-height:17.5px;color:#333;font-weight:400;white-space:nowrap;">Digitize Blocks</div><svg style="position:absolute;left:38px;top:955px;opacity:1;" width="38" height="38" viewBox="0 0 38 38"><path d="M14 22 Q10 8 13 5 Q19 -1 25 5 Q28 8 24 22 Z" fill="#3aa3aa" stroke="#3a3a3a" stroke-width="1"/><rect x="8" y="21" width="22" height="4" fill="#3a3a3a"/><rect x="2" y="26" width="34" height="11" rx="3" fill="#3a3a3a"/></svg><div style="left:85.3px;top:965.0px;font-size:17.5px;line-height:17.5px;color:#333;font-weight:400;white-space:nowrap;">Carving Stamp &gt;&gt;</div><svg style="position:absolute;left:38px;top:1000px;opacity:1;" width="38" height="38" viewBox="0 0 38 38"><rect x="1" y="1" width="5" height="5" fill="none" stroke="#3a3a3a" stroke-width="1.4"/><rect x="32" y="32" width="5" height="5" fill="none" stroke="#3a3a3a" stroke-width="1.4"/><path d="M4 6 Q8 16 19 20 Q30 26 32 34" fill="none" stroke="#3a3a3a" stroke-width="1.4"/><path d="M19 20 Q12 6 19 3 Q26 6 19 20 Q8 14 6 22 Q10 30 19 20 Q24 32 30 28 Q34 18 19 20" fill="none" stroke="#3a3a3a" stroke-width="2.2"/></svg><div style="left:85.3px;top:1010.3px;font-size:17.5px;line-height:17.5px;color:#333;font-weight:400;white-space:nowrap;">Motif Stamp...</div><svg style="position:absolute;left:38px;top:1052px;opacity:1;" width="38" height="38" viewBox="0 0 38 38"><path d="M6 4 V36 M2 10 L26 14 M4 30 L34 34 M28 24 V36 M8 26 Q16 18 24 10" fill="none" stroke="#8e8e8e" stroke-width="2"/><path d="M27 0 V14 M20 7 H34" stroke="#8e8e8e" stroke-width="2.6"/></svg><div style="left:85.3px;top:1062.3px;font-size:17.5px;line-height:17.5px;color:#808080;font-weight:400;white-space:nowrap;">Add Stitch Angles</div><svg style="position:absolute;left:38px;top:1097px;opacity:1;" width="38" height="38" viewBox="0 0 38 38"><path d="M2 4 Q14 2 20 12 M2 22 Q14 18 24 36 M4 34 Q10 22 22 16 M26 14 Q34 22 32 36" fill="none" stroke="#8e8e8e" stroke-width="2"/><path d="M20 8 H34" stroke="#aaa" stroke-width="3"/></svg><div style="left:85.3px;top:1107.3px;font-size:17.5px;line-height:17.5px;color:#808080;font-weight:400;white-space:nowrap;">Remove Stitch Angles</div><svg style="position:absolute;left:38px;top:1150px;opacity:1;" width="38" height="38" viewBox="0 0 38 38"><path d="M19 0 V10 M14 5 H24" stroke="#aaa" stroke-width="2.6"/><ellipse cx="19" cy="27" rx="17" ry="8" fill="#888"/><ellipse cx="19" cy="27" rx="9" ry="4" fill="#bbb"/></svg><div style="left:85.3px;top:1159.8px;font-size:17.5px;line-height:17.5px;color:#808080;font-weight:400;white-space:nowrap;">Digitize Holes</div><svg style="position:absolute;left:38px;top:1194px;opacity:1;" width="38" height="38" viewBox="0 0 38 38"><ellipse cx="19" cy="28" rx="17" ry="8" fill="#888"/><ellipse cx="19" cy="28" rx="9" ry="4" fill="#bbb"/><path d="M24 12 L34 22 L26 30 L16 20 Z" fill="#fff" stroke="#999" stroke-width="1"/><path d="M24 2 L22 18" stroke="#777" stroke-width="1.6"/><circle cx="22" cy="18" r="2" fill="#777"/><path d="M12 18 Q8 20 10 26" stroke="#999" stroke-width="3" fill="none"/></svg><div style="left:85.3px;top:1204.3px;font-size:17.5px;line-height:17.5px;color:#808080;font-weight:400;white-space:nowrap;">Fill Holes</div><svg style="position:absolute;left:38px;top:1240px;opacity:1;" width="38" height="38" viewBox="0 0 38 38"><path d="M12 4 H26" stroke="#aaa" stroke-width="3"/><ellipse cx="19" cy="27" rx="17" ry="8" fill="#888"/><ellipse cx="19" cy="27" rx="9" ry="4" fill="#bbb"/></svg><div style="left:85.3px;top:1250.0px;font-size:17.5px;line-height:17.5px;color:#808080;font-weight:400;white-space:nowrap;">Remove Holes</div><svg style="position:absolute;left:38px;top:1284px;opacity:1;" width="38" height="38" viewBox="0 0 38 38"><path d="M3 1 V22 H14" fill="none" stroke="#8e8e8e" stroke-width="2"/><path d="M3 1 H22 V10" fill="none" stroke="#8e8e8e" stroke-width="2"/><circle cx="22" cy="22" r="13" fill="none" stroke="#8e8e8e" stroke-width="2"/><path d="M9 22 H22 V9" fill="none" stroke="#bbb" stroke-width="1" stroke-dasharray="2 2"/></svg><div style="left:85.3px;top:1294.7px;font-size:17.5px;line-height:17.5px;color:#808080;font-weight:400;white-space:nowrap;">Weld</div><svg style="position:absolute;left:38px;top:1337px;opacity:1;" width="38" height="38" viewBox="0 0 38 38"><path d="M3 6 Q6 22 19 22 Q32 22 35 6" fill="none" stroke="#8e8e8e" stroke-width="2.2"/><path d="M3 14 Q8 30 19 30 Q30 30 35 14" fill="none" stroke="#8e8e8e" stroke-width="2.4"/><path d="M20 26 L14 30 L20 34 Z" fill="#777"/><path d="M26 16 L32 19 L26 23 Z" fill="#aaa"/></svg><div style="left:85.3px;top:1347.1px;font-size:17.5px;line-height:17.5px;color:#808080;font-weight:400;white-space:nowrap;">Backtrack</div><svg style="position:absolute;left:38px;top:1382px;opacity:1;" width="38" height="38" viewBox="0 0 38 38"><ellipse cx="19" cy="14" rx="16" ry="9" fill="none" stroke="#8e8e8e" stroke-width="2.2"/><ellipse cx="19" cy="24" rx="16" ry="9" fill="none" stroke="#8e8e8e" stroke-width="2.4"/><path d="M22 10 L28 14 L22 17 Z" fill="#888"/><path d="M14 2 L20 5 L14 8 Z" fill="#bbb"/></svg><div style="left:85.3px;top:1392.1px;font-size:17.5px;line-height:17.5px;color:#808080;font-weight:400;white-space:nowrap;">Repeat</div><svg style="position:absolute;left:38px;top:1435px;opacity:1;" width="38" height="38" viewBox="0 0 38 38"><path d="M19 36 V18 M19 28 L8 16 M19 22 L30 10 M12 20 L6 10 M26 14 L24 4 M19 18 L16 6" fill="none" stroke="#8e8e8e" stroke-width="2"/><path d="M15 32 L19 37 L23 32" fill="none" stroke="#8e8e8e" stroke-width="1.8"/><path d="M28 3 V8 M31 6 V11 M33 2 V7" stroke="#aaa" stroke-width="1" stroke-dasharray="1 1"/></svg><div style="left:85.3px;top:1445.3px;font-size:17.5px;line-height:17.5px;color:#808080;font-weight:400;white-space:nowrap;">Branching</div><svg style="position:absolute;left:38px;top:1479px;opacity:1;" width="38" height="38" viewBox="0 0 38 38"><path d="M6 8 Q14 0 22 6 Q32 2 34 14 Q38 24 30 32 Q20 38 12 34 Q2 30 4 20 Q0 12 6 8 Z" fill="#f0f0f0" stroke="#aaa" stroke-width="2"/><path d="M10 12 Q16 8 20 14 Q26 10 30 16 M8 22 Q14 18 18 24 Q24 20 30 26" fill="none" stroke="#bbb" stroke-width="1.5"/><path d="M30 26 L34 30 L30 34 L26 30 Z" fill="#999"/></svg><div style="left:85.3px;top:1489.3px;font-size:17.5px;line-height:17.5px;color:#808080;font-weight:400;white-space:nowrap;">Redwork</div><div style="left:4px;top:697px;width:411px;height:1px;background:#c6c6c6;"></div><div style="left:4px;top:698px;width:411px;height:1px;background:#fafafa;"></div><div style="left:4px;top:794px;width:411px;height:1px;background:#c6c6c6;"></div><div style="left:4px;top:795px;width:411px;height:1px;background:#fafafa;"></div><div style="left:4px;top:891px;width:411px;height:1px;background:#c6c6c6;"></div><div style="left:4px;top:892px;width:411px;height:1px;background:#fafafa;"></div><div style="left:4px;top:943px;width:411px;height:1px;background:#c6c6c6;"></div><div style="left:4px;top:944px;width:411px;height:1px;background:#fafafa;"></div><div style="left:4px;top:1041px;width:411px;height:1px;background:#c6c6c6;"></div><div style="left:4px;top:1042px;width:411px;height:1px;background:#fafafa;"></div><div style="left:4px;top:1139px;width:411px;height:1px;background:#c6c6c6;"></div><div style="left:4px;top:1140px;width:411px;height:1px;background:#fafafa;"></div><div style="left:4px;top:1326px;width:411px;height:1px;background:#c6c6c6;"></div><div style="left:4px;top:1327px;width:411px;height:1px;background:#fafafa;"></div><div style="left:4px;top:1424px;width:411px;height:1px;background:#c6c6c6;"></div><div style="left:4px;top:1425px;width:411px;height:1px;background:#fafafa;"></div><div style="left:4px;top:1526px;width:411px;height:45px;background:#f0f0f0;border:2px solid #a2a2a2;box-shadow:inset 0 0 0 1px #fbfbfb;"></div><svg style="position:absolute;left:16px;top:1539px;" width="12" height="18" viewBox="0 0 12 18"><path d="M2 2 L10 9 L2 16 Z" fill="none" stroke="#2b6f8f" stroke-width="1.8"/></svg><div style="left:38.5px;top:1541.0px;font-size:17px;line-height:17px;color:#333;font-weight:700;white-space:nowrap;">Appliqué</div><div style="left:4px;top:1572px;width:411px;height:45px;background:#f0f0f0;border:2px solid #a2a2a2;box-shadow:inset 0 0 0 1px #fbfbfb;"></div><svg style="position:absolute;left:16px;top:1585px;" width="12" height="18" viewBox="0 0 12 18"><path d="M2 2 L10 9 L2 16 Z" fill="none" stroke="#2b6f8f" stroke-width="1.8"/></svg><div style="left:38.5px;top:1587.0px;font-size:17px;line-height:17px;color:#333;font-weight:700;white-space:nowrap;">Create Layouts</div><div style="left:4px;top:1619px;width:411px;height:45px;background:#f0f0f0;border:2px solid #a2a2a2;box-shadow:inset 0 0 0 1px #fbfbfb;"></div><svg style="position:absolute;left:16px;top:1632px;" width="12" height="18" viewBox="0 0 12 18"><path d="M2 2 L10 9 L2 16 Z" fill="none" stroke="#2b6f8f" stroke-width="1.8"/></svg><div style="left:38.5px;top:1634.0px;font-size:17px;line-height:17px;color:#333;font-weight:700;white-space:nowrap;">Multi-Hooping</div><div style="left:4px;top:1666px;width:411px;height:45px;background:#f0f0f0;border:2px solid #a2a2a2;box-shadow:inset 0 0 0 1px #fbfbfb;"></div><svg style="position:absolute;left:16px;top:1679px;" width="12" height="18" viewBox="0 0 12 18"><path d="M2 2 L10 9 L2 16 Z" fill="none" stroke="#2b6f8f" stroke-width="1.8"/></svg><div style="left:38.5px;top:1681.0px;font-size:17px;line-height:17px;color:#333;font-weight:700;white-space:nowrap;">Output Design</div><div style="left:423px;top:183px;width:1605px;height:32px;background:#f0f0f0;"></div><div style="left:423px;top:213px;width:1605px;height:1px;background:#b4b4b4;"></div><div style="left:426px;top:189px;width:154px;height:25px;background:#f0f0f0;border:1px solid #c4c4c4;border-bottom:none;border-radius:3px 3px 0 0;"></div><div style="left:435px;top:194.3px;font-size:17.5px;line-height:17.5px;color:#333;font-weight:400;white-space:nowrap;">Design Library</div><svg style="position:absolute;left:561px;top:195px;" width="11" height="11" viewBox="0 0 11 11"><path d="M1 1 L10 10 M10 1 L1 10" stroke="#222" stroke-width="2"/></svg><div style="left:580px;top:189px;width:102px;height:26px;background:#c9def4;border:1px solid #b8cde4;border-bottom:none;border-radius:3px 3px 0 0;"></div><div style="left:588px;top:194.3px;font-size:17.5px;line-height:17.5px;color:#333;font-weight:400;white-space:nowrap;">Design1</div><svg style="position:absolute;left:663px;top:195px;" width="11" height="11" viewBox="0 0 11 11"><path d="M1 1 L10 10 M10 1 L1 10" stroke="#222" stroke-width="2"/></svg><svg style="position:absolute;left:1990px;top:190px;" width="9" height="15" viewBox="0 0 9 15"><path d="M8 1 L1 7.5 L8 14 Z" fill="none" stroke="#666" stroke-width="1.4"/></svg><svg style="position:absolute;left:2012px;top:190px;" width="9" height="15" viewBox="0 0 9 15"><path d="M1 1 L8 7.5 L1 14 Z" fill="none" stroke="#666" stroke-width="1.4"/></svg><div style="left:423px;top:214px;width:1px;height:1518px;background:#a8a8a8;"></div><div style="left:424px;top:214px;width:1603px;height:1517px;background:#c9def4;"></div><div style="left:429px;top:220px;width:1593px;height:1505px;background:#f0f0f0;"></div><div style="left:429px;top:220px;width:1565px;height:1478px;background:#c0c0c0;border-top:3px solid #707070;border-left:3px solid #707070;"></div><div style="left:1993px;top:220px;width:1px;height:1478px;background:#fff;"></div><div style="left:429px;top:1697px;width:1565px;height:1px;background:#fff;"></div><div style="left:2021px;top:214px;width:1px;height:1517px;background:#fff;"></div><div style="left:2026px;top:214px;width:2px;height:1518px;background:#9a9a9a;"></div><div style="left:424px;top:1730px;width:1604px;height:2px;background:#9a9a9a;"></div><div style="left:1994px;top:221px;width:26px;height:12px;background:#f4f4f4;border:1px solid #fff;border-right:3px solid #6e6e6e;border-bottom:3px solid #6e6e6e;"></div><div style="left:430px;top:1698px;width:13px;height:25px;background:#f4f4f4;border:1px solid #fff;border-right:3px solid #6e6e6e;border-bottom:3px solid #6e6e6e;"></div><div style="left:2006px;top:949px;width:2px;height:32px;background:#888;"></div><div style="left:1206px;top:1710px;width:36px;height:2px;background:#888;"></div><svg style="position:absolute;left:2000px;top:1706px;" width="12" height="12" viewBox="0 0 12 12"><rect x="9" y="0" width="2" height="2" fill="#999"/><rect x="6" y="3" width="2" height="2" fill="#999"/><rect x="9" y="3" width="2" height="2" fill="#999"/><rect x="3" y="6" width="2" height="2" fill="#999"/><rect x="6" y="6" width="2" height="2" fill="#999"/><rect x="9" y="6" width="2" height="2" fill="#999"/><rect x="0" y="9" width="2" height="2" fill="#999"/><rect x="3" y="9" width="2" height="2" fill="#999"/><rect x="6" y="9" width="2" height="2" fill="#999"/><rect x="9" y="9" width="2" height="2" fill="#999"/></svg><div style="left:2028px;top:185px;width:6px;height:1547px;background:#cbcbcb;"></div><div style="left:263px;top:662px;width:606px;height:636px;background:#ececec;border:1px solid #9c9c9c;box-shadow:4px 5px 6px rgba(0,0,0,0.35);"></div><svg style="position:absolute;left:541px;top:666px;" width="49" height="8" viewBox="0 0 49 8"><rect x="0" y="0" width="49" height="1" fill="#8a98a8"/><rect x="0" y="2.5" width="49" height="1" fill="#8a98a8"/><rect x="0" y="5" width="49" height="1" fill="#8a98a8"/><rect x="0" y="7" width="49" height="1" fill="#8a98a8"/></svg><div style="left:266px;top:679px;width:599px;height:598px;background:#ebebeb;border-top:1px solid #b8b8b8;border-left:1px solid #b8b8b8;border-bottom:1px solid #fff;border-right:1px solid #fff;"></div><div style="left:840px;top:680px;width:24px;height:596px;background:#e6e6e6;"></div><svg style="position:absolute;left:840px;top:705px;" width="24" height="547" viewBox="0 0 24 547"><defs><pattern id="dp" width="3" height="3" patternUnits="userSpaceOnUse"><rect width="3" height="3" fill="#ececec"/><rect width="1" height="1" fill="#fafafa"/></pattern></defs><rect width="24" height="547" fill="url(#dp)"/></svg><div style="left:840px;top:681px;width:24px;height:24px;background:#fff;border:1px solid #c8c8c8;"></div><svg style="position:absolute;left:846px;top:689px;" width="12" height="7" viewBox="0 0 12 7"><path d="M0 7 L6 0 L12 7 Z" fill="#666"/></svg><div style="left:840px;top:799px;width:24px;height:112px;background:#fff;border:1px solid #c8c8c8;"></div><div style="left:840px;top:1252px;width:24px;height:24px;background:#fff;border:1px solid #c8c8c8;"></div><svg style="position:absolute;left:846px;top:1261px;" width="12" height="7" viewBox="0 0 12 7"><path d="M0 0 L6 7 L12 0 Z" fill="#666"/></svg><div style="left:270px;top:718px;width:105px;height:161px;border:5px solid #c9def4;background:#eeeeee;"></div><svg style="position:absolute;left:272px;top:720px;" width="100" height="100" viewBox="0 0 100 100"><path d="M12 22 C14 4 30 1 50 1 C70 1 86 4 88 22 V78 C88 88 80 90 72 92 C62 95 55 97 50 99 C45 97 38 95 28 92 C20 90 12 88 12 78 Z" fill="none" stroke="#4d4d4d" stroke-width="1.7" stroke-linejoin="miter"/></svg><div style="left:272.5px;top:829.3px;width:100px;text-align:center;font-size:17.5px;line-height:17.5px;color:#444;font-weight:400;white-space:nowrap;">B217</div><svg style="position:absolute;left:377px;top:720px;" width="100" height="100" viewBox="0 0 100 100"><path d="M30 13 H70 C88 13 99 30 99 50 C99 70 88 87 70 87 H30 C12 87 1 70 1 50 C1 30 12 13 30 13 Z" fill="none" stroke="#4d4d4d" stroke-width="1.7" stroke-linejoin="miter"/></svg><div style="left:377.0px;top:829.3px;width:100px;text-align:center;font-size:17.5px;line-height:17.5px;color:#444;font-weight:400;white-space:nowrap;">B218</div><svg style="position:absolute;left:482px;top:720px;" width="100" height="100" viewBox="0 0 100 100"><path d="M37.5 1 Q50 12 63 1 L99.5 36 Q90 50 99.5 63 L63 99 Q50 88 37.5 99 L1 63 Q10 50 1 36 Z" fill="none" stroke="#4d4d4d" stroke-width="1.7" stroke-linejoin="miter"/></svg><div style="left:482.5px;top:829.3px;width:100px;text-align:center;font-size:17.5px;line-height:17.5px;color:#444;font-weight:400;white-space:nowrap;">B219</div><svg style="position:absolute;left:588px;top:720px;" width="100" height="100" viewBox="0 0 100 100"><path d="M50.9 0.7 L53.3 8.2 L55.1 10.2 L57.7 8.7 L63 8.7 L61.3 14.9 L60 17.1 L61.3 20.6 L65.7 25.4 L74.1 33.8 L82.9 41.8 L86.4 38.7 L91.3 37.4 L91.3 47.1 L99.2 50.6 L91.3 53.7 L90.8 62.5 L86.4 59.4 L82.4 58.1 L63 77.5 L59.5 82.8 L63 89.4 L53.8 91.2 L50.9 98.2 L47.2 90.7 L37.4 90.3 L40.1 82.8 L37.9 78.4 L22.4 62.5 L17.1 59.4 L11.4 60.7 L9.7 62.5 L8.8 53.7 L1.3 50.6 L8.8 47.5 L10.5 43.1 L9.2 37.4 L11.4 38.2 L17.1 40.4 L20.7 38.7 L38.3 21 L40.5 17.1 L38.8 10.4 L47.2 10 L48.5 5.6 Z" fill="none" stroke="#4d4d4d" stroke-width="1.7" stroke-linejoin="miter"/></svg><div style="left:587.7px;top:829.3px;width:100px;text-align:center;font-size:17.5px;line-height:17.5px;color:#444;font-weight:400;white-space:nowrap;">B220</div><svg style="position:absolute;left:692px;top:720px;" width="100" height="100" viewBox="0 0 100 100"><path d="M36.4 1.2 L45.7 1.2 L48.3 5.1 L51.8 5.1 L55.8 1.2 L65.5 1.2 L63.7 7.4 L62.4 10.9 L63.7 14.4 L84.9 36 L89.3 38.7 L92.9 36.9 L99.5 35.6 L99.5 44.4 L95.5 47.9 L95.5 52.8 L99.5 54.6 L99.5 64.3 L89.3 59.4 L64.6 83.2 L62.4 88.5 L65.1 98.7 L55.8 98.7 L51.8 93.8 L47.9 93.8 L45.7 98.7 L36.4 98.7 L37.7 89.4 L39.5 88.5 L32 79.7 L19.2 66.9 L11.7 60.7 L9.9 62.5 L2.4 64.3 L2.4 54.6 L6 53.2 L6.4 47.5 L2.9 45.3 L2.4 35.6 L9.9 37.4 L12.1 38.7 L21.4 30.3 L32.9 20.1 L39.5 10.9 L37.7 7.8 Z" fill="none" stroke="#4d4d4d" stroke-width="1.7" stroke-linejoin="miter"/></svg><div style="left:692.0px;top:829.3px;width:100px;text-align:center;font-size:17.5px;line-height:17.5px;color:#444;font-weight:400;white-space:nowrap;">B221</div><svg style="position:absolute;left:272px;top:882px;" width="100" height="100" viewBox="0 0 100 100"><path d="M46.5 1.4 H54.4 L75.6 23.1 L73 24 L76.5 27.5 L77.8 25.7 L99.4 46.4 V53.9 L77.8 74.3 L76.5 72.5 L73 76 L75.6 76.9 L54.4 98.9 H46.5 L25.3 76.9 L27.9 76 L24.4 72.5 L23.1 74.3 L1.5 53.9 V46.4 L23.1 25.7 L24.4 27.5 L27.9 24 L25.3 23.1 Z" fill="none" stroke="#4d4d4d" stroke-width="1.7" stroke-linejoin="miter"/></svg><div style="left:272.5px;top:990.8px;width:100px;text-align:center;font-size:17.5px;line-height:17.5px;color:#444;font-weight:400;white-space:nowrap;">B222</div><svg style="position:absolute;left:377px;top:882px;" width="100" height="100" viewBox="0 0 100 100"><path d="M47 1.4 H55 L99.5 46.4 V53.9 L55 98.9 H47 L2 53.9 V46.4 Z" fill="none" stroke="#4d4d4d" stroke-width="1.7" stroke-linejoin="miter"/></svg><div style="left:377.0px;top:990.8px;width:100px;text-align:center;font-size:17.5px;line-height:17.5px;color:#444;font-weight:400;white-space:nowrap;">B223</div><svg style="position:absolute;left:482px;top:882px;" width="100" height="100" viewBox="0 0 100 100"><path d="M44 3 Q50 -1 56 3 L97 44 Q101 50 97 56 L56 97 Q50 101 44 97 L3 56 Q-1 50 3 44 Z" fill="none" stroke="#4d4d4d" stroke-width="1.7" stroke-linejoin="miter"/></svg><div style="left:482.5px;top:990.8px;width:100px;text-align:center;font-size:17.5px;line-height:17.5px;color:#444;font-weight:400;white-space:nowrap;">B224</div><svg style="position:absolute;left:588px;top:882px;" width="100" height="100" viewBox="0 0 100 100"><path d="M8.3 6 Q50 -4 92 6 V48 Q92 78 50 99 Q8.3 78 8.3 48 Z" fill="none" stroke="#4d4d4d" stroke-width="1.7" stroke-linejoin="miter"/></svg><div style="left:587.7px;top:990.8px;width:100px;text-align:center;font-size:17.5px;line-height:17.5px;color:#444;font-weight:400;white-space:nowrap;">B225</div><svg style="position:absolute;left:692px;top:882px;" width="100" height="100" viewBox="0 0 100 100"><path d="M50.0 11.5 A9.8 9.8 0 0 1 74.7 20.5 A9.8 9.8 0 0 1 87.9 43.3 A9.8 9.8 0 0 1 83.3 69.2 A9.8 9.8 0 0 1 63.2 86.2 A9.8 9.8 0 0 1 36.8 86.2 A9.8 9.8 0 0 1 16.7 69.3 A9.8 9.8 0 0 1 12.1 43.3 A9.8 9.8 0 0 1 25.3 20.5 A9.8 9.8 0 0 1 50.0 11.5 Z" fill="none" stroke="#4d4d4d" stroke-width="1.7" stroke-linejoin="miter"/></svg><div style="left:692.0px;top:990.8px;width:100px;text-align:center;font-size:17.5px;line-height:17.5px;color:#444;font-weight:400;white-space:nowrap;">B226</div><svg style="position:absolute;left:272px;top:1043px;" width="100" height="100" viewBox="0 0 100 100"><path d="M12 22 H88 Q90 22 92 26 Q95 30 98 30 Q100 32 100 36 V64 Q100 68 98 70 Q95 70 92 74 Q90 78 88 78 H12 Q10 78 8 74 Q5 70 2 70 Q0 68 0 64 V36 Q0 32 2 30 Q5 30 8 26 Q10 22 12 22 Z" fill="none" stroke="#4d4d4d" stroke-width="1.7" stroke-linejoin="miter"/></svg><div style="left:272.5px;top:1152.3px;width:100px;text-align:center;font-size:17.5px;line-height:17.5px;color:#444;font-weight:400;white-space:nowrap;">B227</div><svg style="position:absolute;left:377px;top:1043px;" width="100" height="100" viewBox="0 0 100 100"><path d="M50 3 L53 7 Q60 8 66 8 Q76 9 78 18 Q78 22 80 23 Q90 24 91 34 Q90 40 92 42 Q95 46 99.7 50 Q95 54 92 58 Q90 60 91 66 Q90 76 80 77 Q78 78 78 82 Q76 91 66 92 Q60 92 53 93 L50 97.6 L47 93 Q40 92 34 92 Q24 91 22 82 Q22 78 20 77 Q10 76 9 66 Q10 60 8 58 Q5 54 1.5 50 Q5 46 8 42 Q10 40 9 34 Q10 24 20 23 Q22 22 22 18 Q24 9 34 8 Q40 8 47 7 Z" fill="none" stroke="#4d4d4d" stroke-width="1.7" stroke-linejoin="miter"/></svg><div style="left:377.0px;top:1152.3px;width:100px;text-align:center;font-size:17.5px;line-height:17.5px;color:#444;font-weight:400;white-space:nowrap;">B228</div><svg style="position:absolute;left:482px;top:1043px;" width="100" height="100" viewBox="0 0 100 100"><path d="M12 28.6 H25 Q38 18 50.5 18.2 Q63 18 75.8 28.6 H88.8 V39 Q99 42 99.2 50.8 Q99 60 88.8 62.5 V72.9 H75.8 Q63 83 50.5 83.3 Q38 83 25 72.9 H12 V62.5 Q1.5 60 1.5 50.8 Q1.5 42 12 39 Z" fill="none" stroke="#4d4d4d" stroke-width="1.7" stroke-linejoin="miter"/></svg><div style="left:482.5px;top:1152.3px;width:100px;text-align:center;font-size:17.5px;line-height:17.5px;color:#444;font-weight:400;white-space:nowrap;">B229</div><svg style="position:absolute;left:588px;top:1043px;" width="100" height="100" viewBox="0 0 100 100"><path d="M50 2 L62 14 Q58 20 62 23 L67 31 Q62 35 67 38 L73 47 Q68 51 73 54 L79 65 Q74 69 79 72 L86 88 Q85 92 80 92 Q74 98 68 94 Q60 100 50 98 Q40 100 32 94 Q26 98 20 92 Q15 92 14 88 L21 72 Q26 69 21 65 L27 54 Q32 51 27 47 L33 38 Q38 35 33 31 L38 23 Q42 20 38 14 Z" fill="none" stroke="#4d4d4d" stroke-width="1.7" stroke-linejoin="miter"/></svg><div style="left:587.7px;top:1152.3px;width:100px;text-align:center;font-size:17.5px;line-height:17.5px;color:#444;font-weight:400;white-space:nowrap;">B330</div><div style="left:286px;top:1212.5px;font-size:17px;line-height:17px;color:#444;font-weight:700;white-space:nowrap;">Borders</div><div style="left:270px;top:1235px;width:566px;height:1px;background:#c4c4c4;"></div><div style="left:270px;top:1236px;width:566px;height:1px;background:#fafafa;"></div><svg style="position:absolute;left:266px;top:1238px;clip-path:inset(0 0 0 0);overflow:hidden;" width="574" height="38" viewBox="0 0 574 38"><path d="M131.5 37 L162 4 L192 37" fill="none" stroke="#4d4d4d" stroke-width="1.7"/><path d="M233.6 37 V20 L266 4 L300 20 V37" fill="none" stroke="#4d4d4d" stroke-width="1.7"/><path d="M333 37 V14 Q370 -4 410.8 14 V37" fill="none" stroke="#4d4d4d" stroke-width="1.7"/><path d="M439 35.5 H451 M506.6 35.5 H514" stroke="#4d4d4d" stroke-width="2"/></svg><svg style="position:absolute;left:853px;top:1279px;" width="12" height="12" viewBox="0 0 12 12"><rect x="9" y="0" width="2" height="2" fill="#aaa"/><rect x="6" y="3" width="2" height="2" fill="#aaa"/><rect x="9" y="3" width="2" height="2" fill="#aaa"/><rect x="3" y="6" width="2" height="2" fill="#aaa"/><rect x="6" y="6" width="2" height="2" fill="#aaa"/><rect x="9" y="6" width="2" height="2" fill="#aaa"/></svg><svg style="position:absolute;left:0px;top:0px;pointer-events:none;" width="2823" height="1839" viewBox="0 0 2823 1839"><path d="M530.6 498.2 L351 738" stroke="#e8191a" stroke-width="3.6"/><path d="M343.4 731.7 L359.3 743.1 L339.9 752.8 Z" fill="#e8191a"/></svg><div style="left:2034px;top:183px;width:243px;height:1549px;background:#ebebeb;"></div><div style="left:2034px;top:185px;width:243px;height:37px;background:#f0f0f0;"></div><div style="left:2043px;top:196.5px;font-size:17px;line-height:17px;color:#333;font-weight:700;white-space:nowrap;">Sequence</div><svg style="position:absolute;left:2253px;top:197px;" width="13" height="13" viewBox="0 0 13 13"><path d="M1 1 L6 6.5 L1 12 M6 1 L11 6.5 L6 12" fill="none" stroke="#111" stroke-width="2"/></svg><div style="left:2034px;top:222px;width:243px;height:1px;background:#d6d6d6;"></div><div style="left:2035px;top:224px;width:241px;height:103px;background:#ebebeb;border:1px solid #d8d8d8;"></div><svg style="position:absolute;left:2038px;top:230px;" width="8" height="92" viewBox="0 0 8 92"><rect x="1" y="0" width="2" height="2" fill="#b9b9b9"/><rect x="5" y="3" width="2" height="2" fill="#b9b9b9"/><rect x="1" y="6" width="2" height="2" fill="#b9b9b9"/><rect x="5" y="9" width="2" height="2" fill="#b9b9b9"/><rect x="1" y="12" width="2" height="2" fill="#b9b9b9"/><rect x="5" y="15" width="2" height="2" fill="#b9b9b9"/><rect x="1" y="18" width="2" height="2" fill="#b9b9b9"/><rect x="5" y="21" width="2" height="2" fill="#b9b9b9"/><rect x="1" y="24" width="2" height="2" fill="#b9b9b9"/><rect x="5" y="27" width="2" height="2" fill="#b9b9b9"/><rect x="1" y="30" width="2" height="2" fill="#b9b9b9"/><rect x="5" y="33" width="2" height="2" fill="#b9b9b9"/><rect x="1" y="36" width="2" height="2" fill="#b9b9b9"/><rect x="5" y="39" width="2" height="2" fill="#b9b9b9"/><rect x="1" y="42" width="2" height="2" fill="#b9b9b9"/><rect x="5" y="45" width="2" height="2" fill="#b9b9b9"/><rect x="1" y="48" width="2" height="2" fill="#b9b9b9"/><rect x="5" y="51" width="2" height="2" fill="#b9b9b9"/><rect x="1" y="54" width="2" height="2" fill="#b9b9b9"/><rect x="5" y="57" width="2" height="2" fill="#b9b9b9"/><rect x="1" y="60" width="2" height="2" fill="#b9b9b9"/><rect x="5" y="63" width="2" height="2" fill="#b9b9b9"/><rect x="1" y="66" width="2" height="2" fill="#b9b9b9"/><rect x="5" y="69" width="2" height="2" fill="#b9b9b9"/><rect x="1" y="72" width="2" height="2" fill="#b9b9b9"/><rect x="5" y="75" width="2" height="2" fill="#b9b9b9"/><rect x="1" y="78" width="2" height="2" fill="#b9b9b9"/><rect x="5" y="81" width="2" height="2" fill="#b9b9b9"/><rect x="1" y="84" width="2" height="2" fill="#b9b9b9"/><rect x="5" y="87" width="2" height="2" fill="#b9b9b9"/><rect x="1" y="90" width="2" height="2" fill="#b9b9b9"/></svg><svg style="position:absolute;left:2054px;top:230px;" width="36" height="36" viewBox="0 0 36 36"><path d="M16 1 L4 18 L16 35 M30 1 L18 18 L30 35" fill="none" stroke="#3a3a3a" stroke-width="5"/></svg><div style="left:2094px;top:225px;width:45px;height:45px;background:#c9def4;"></div><svg style="position:absolute;left:2100px;top:230px;" width="36" height="36" viewBox="0 0 36 36"><path d="M6 1 L18 18 L6 35 M20 1 L32 18 L20 35" fill="none" stroke="#3a3a3a" stroke-width="5"/></svg><div style="left:2049px;top:274px;width:225px;height:1px;background:#d4d4d4;"></div><div style="left:2049px;top:275px;width:225px;height:1px;background:#fafafa;"></div><div style="left:2049px;top:280px;width:72px;height:44px;background:#c9def4;"></div><div style="left:2056px;top:294.3px;font-size:17.5px;line-height:17.5px;color:#333;font-weight:400;white-space:nowrap;">Objects</div><div style="left:2127.5px;top:294.3px;font-size:17.5px;line-height:17.5px;color:#333;font-weight:400;white-space:nowrap;">Colors</div><div style="left:2063px;top:342.5px;font-size:17px;line-height:17px;color:#222;font-weight:400;white-space:nowrap;">#</div><div style="left:2101px;top:342.5px;font-size:17px;line-height:17px;color:#222;font-weight:400;white-space:nowrap;">Object</div><div style="left:2162px;top:342.5px;font-size:17px;line-height:17px;color:#222;font-weight:400;white-space:nowrap;">Status</div><div style="left:2043px;top:367px;width:224px;height:1250px;background:#fff;"></div><svg style="position:absolute;left:2043px;top:367px;" width="224" height="1250" viewBox="0 0 224 1250"><rect x="0" y="6.4" width="224" height="1.6" fill="#a8a8a8"/><rect x="0" y="66.4" width="224" height="1.6" fill="#a8a8a8"/><rect x="0" y="126.4" width="224" height="1.6" fill="#a8a8a8"/><rect x="0" y="186.4" width="224" height="1.6" fill="#a8a8a8"/><rect x="0" y="246.4" width="224" height="1.6" fill="#a8a8a8"/><rect x="0" y="306.4" width="224" height="1.6" fill="#a8a8a8"/><rect x="0" y="366.4" width="224" height="1.6" fill="#a8a8a8"/><rect x="0" y="426.4" width="224" height="1.6" fill="#a8a8a8"/><rect x="0" y="486.4" width="224" height="1.6" fill="#a8a8a8"/><rect x="0" y="546.4" width="224" height="1.6" fill="#a8a8a8"/><rect x="0" y="606.4" width="224" height="1.6" fill="#a8a8a8"/><rect x="0" y="666.4" width="224" height="1.6" fill="#a8a8a8"/><rect x="0" y="726.4" width="224" height="1.6" fill="#a8a8a8"/><rect x="0" y="786.4" width="224" height="1.6" fill="#a8a8a8"/><rect x="0" y="846.4" width="224" height="1.6" fill="#a8a8a8"/><rect x="0" y="906.4" width="224" height="1.6" fill="#a8a8a8"/><rect x="0" y="966.4" width="224" height="1.6" fill="#a8a8a8"/><rect x="0" y="1026.4" width="224" height="1.6" fill="#a8a8a8"/><rect x="0" y="1086.4" width="224" height="1.6" fill="#a8a8a8"/><rect x="0" y="1146.4" width="224" height="1.6" fill="#a8a8a8"/><rect x="0" y="1206.4" width="224" height="1.6" fill="#a8a8a8"/><rect x="117.5" y="0" width="1.6" height="1250" fill="#b0b0b0"/><rect x="175" y="0" width="1.6" height="1250" fill="#b0b0b0"/><rect x="0" y="0" width="224" height="2.2" fill="#6a6a6a"/><rect x="0" y="0" width="2.2" height="1250" fill="#6a6a6a"/></svg><div style="left:2035px;top:1628px;width:241px;height:103px;background:#ebebeb;border:1px solid #d8d8d8;"></div><svg style="position:absolute;left:2038px;top:1636px;" width="8" height="88" viewBox="0 0 8 88"><rect x="1" y="0" width="2" height="2" fill="#b9b9b9"/><rect x="5" y="3" width="2" height="2" fill="#b9b9b9"/><rect x="1" y="6" width="2" height="2" fill="#b9b9b9"/><rect x="5" y="9" width="2" height="2" fill="#b9b9b9"/><rect x="1" y="12" width="2" height="2" fill="#b9b9b9"/><rect x="5" y="15" width="2" height="2" fill="#b9b9b9"/><rect x="1" y="18" width="2" height="2" fill="#b9b9b9"/><rect x="5" y="21" width="2" height="2" fill="#b9b9b9"/><rect x="1" y="24" width="2" height="2" fill="#b9b9b9"/><rect x="5" y="27" width="2" height="2" fill="#b9b9b9"/><rect x="1" y="30" width="2" height="2" fill="#b9b9b9"/><rect x="5" y="33" width="2" height="2" fill="#b9b9b9"/><rect x="1" y="36" width="2" height="2" fill="#b9b9b9"/><rect x="5" y="39" width="2" height="2" fill="#b9b9b9"/><rect x="1" y="42" width="2" height="2" fill="#b9b9b9"/><rect x="5" y="45" width="2" height="2" fill="#b9b9b9"/><rect x="1" y="48" width="2" height="2" fill="#b9b9b9"/><rect x="5" y="51" width="2" height="2" fill="#b9b9b9"/><rect x="1" y="54" width="2" height="2" fill="#b9b9b9"/><rect x="5" y="57" width="2" height="2" fill="#b9b9b9"/><rect x="1" y="60" width="2" height="2" fill="#b9b9b9"/><rect x="5" y="63" width="2" height="2" fill="#b9b9b9"/><rect x="1" y="66" width="2" height="2" fill="#b9b9b9"/><rect x="5" y="69" width="2" height="2" fill="#b9b9b9"/><rect x="1" y="72" width="2" height="2" fill="#b9b9b9"/><rect x="5" y="75" width="2" height="2" fill="#b9b9b9"/><rect x="1" y="78" width="2" height="2" fill="#b9b9b9"/><rect x="5" y="81" width="2" height="2" fill="#b9b9b9"/><rect x="1" y="84" width="2" height="2" fill="#b9b9b9"/><rect x="5" y="87" width="2" height="2" fill="#b9b9b9"/></svg><svg style="position:absolute;left:2054px;top:1636px;" width="36" height="32" viewBox="0 0 36 32"><rect x="0" y="0" width="36" height="5" fill="#7a7a7a"/><path d="M18 6 L34 32 H2 Z" fill="#7a7a7a"/></svg><svg style="position:absolute;left:2099px;top:1636px;" width="36" height="32" viewBox="0 0 36 32"><path d="M18 0 L35 32 H1 Z" fill="#7a7a7a"/></svg><svg style="position:absolute;left:2144px;top:1636px;" width="36" height="32" viewBox="0 0 36 32"><path d="M1 0 H35 L18 32 Z" fill="#7a7a7a"/></svg><svg style="position:absolute;left:2189px;top:1636px;" width="36" height="32" viewBox="0 0 36 32"><path d="M1 0 H35 L18 26 Z" fill="#7a7a7a"/><rect x="0" y="27" width="36" height="5" fill="#7a7a7a"/></svg><div style="left:2049px;top:1679px;width:225px;height:1px;background:#d4d4d4;"></div><div style="left:2049px;top:1680px;width:225px;height:1px;background:#fafafa;"></div><div style="left:2053px;top:1691.6px;font-size:19px;line-height:19px;color:#8a8a8a;font-weight:700;white-space:nowrap;">123</div><svg style="position:absolute;left:2070px;top:1708px;" width="18" height="18" viewBox="0 0 18 18"><path d="M1 1 L14 7 L9 9 L16 16 L14 18 L7 11 L5 16 Z" fill="#a8a8a8"/></svg><svg style="position:absolute;left:2099px;top:1688px;" width="36" height="38" viewBox="0 0 36 38"><rect x="0" y="0" width="9" height="9" fill="#bbb"/><rect x="0" y="13" width="9" height="9" fill="#888"/><rect x="0" y="26" width="9" height="9" fill="#bbb"/><path d="M13 1 H21 L17 8 Z M13 35 H21 L17 28 Z" fill="#777"/><path d="M17 14 L30 20 L25 22 L32 29 L30 31 L23 24 L21 29 Z" fill="#a8a8a8"/></svg><div style="left:2277px;top:183px;width:6px;height:1549px;background:#cbcbcb;"></div><div style="left:2283px;top:183px;width:540px;height:1549px;background:#f0f0f0;"></div><div style="left:2292px;top:196.5px;font-size:17px;line-height:17px;color:#333;font-weight:700;white-space:nowrap;">Object Properties</div><svg style="position:absolute;left:2764px;top:197px;" width="13" height="13" viewBox="0 0 13 13"><path d="M1 1 L6 6.5 L1 12 M6 1 L11 6.5 L6 12" fill="none" stroke="#111" stroke-width="2"/></svg><div style="left:2296px;top:236px;width:77px;height:29px;background:#f0f0f0;border-top:1px solid #fff;"></div><div style="left:2371px;top:237px;width:2px;height:28px;background:#a0a0a0;"></div><div style="left:2274.5px;top:243.5px;width:120px;text-align:center;font-size:17px;line-height:17px;color:#333;font-weight:400;white-space:nowrap;">Appliqué</div><div style="left:2373px;top:236px;width:96px;height:29px;background:#f0f0f0;border-top:1px solid #fff;"></div><div style="left:2467px;top:237px;width:2px;height:28px;background:#a0a0a0;"></div><div style="left:2361.0px;top:243.5px;width:120px;text-align:center;font-size:17px;line-height:17px;color:#333;font-weight:400;white-space:nowrap;">Buttonhole</div><div style="left:2469px;top:236px;width:82px;height:29px;background:#f0f0f0;border-top:1px solid #fff;"></div><div style="left:2549px;top:237px;width:2px;height:28px;background:#a0a0a0;"></div><div style="left:2450.0px;top:243.5px;width:120px;text-align:center;font-size:17px;line-height:17px;color:#333;font-weight:400;white-space:nowrap;">Lettering</div><div style="left:2551px;top:233px;width:39px;height:33px;background:#c9def4;border-top:1px solid #fff;"></div><div style="left:2588px;top:237px;width:2px;height:28px;background:#a0a0a0;"></div><div style="left:2510.5px;top:243.5px;width:120px;text-align:center;font-size:17px;line-height:17px;color:#333;font-weight:400;white-space:nowrap;">Fill</div><div style="left:2590px;top:236px;width:66px;height:29px;background:#f0f0f0;border-top:1px solid #fff;"></div><div style="left:2654px;top:237px;width:2px;height:28px;background:#a0a0a0;"></div><div style="left:2563.0px;top:243.5px;width:120px;text-align:center;font-size:17px;line-height:17px;color:#333;font-weight:400;white-space:nowrap;">Outline</div><div style="left:2656px;top:236px;width:70px;height:29px;background:#f0f0f0;border-top:1px solid #fff;"></div><div style="left:2724px;top:237px;width:2px;height:28px;background:#a0a0a0;"></div><div style="left:2631.0px;top:243.5px;width:120px;text-align:center;font-size:17px;line-height:17px;color:#333;font-weight:400;white-space:nowrap;">Effects</div><svg style="position:absolute;left:2741px;top:238px;" width="9" height="15" viewBox="0 0 9 15"><path d="M8 1 L1 7.5 L8 14 Z" fill="none" stroke="#777" stroke-width="1.3"/></svg><svg style="position:absolute;left:2764px;top:238px;" width="9" height="15" viewBox="0 0 9 15"><path d="M1 1 L8 7.5 L1 14 Z" fill="#111"/></svg><div style="left:2293px;top:264px;width:486px;height:1458px;background:#c9def4;border-right:2px solid #8a8a8a;border-bottom:2px solid #8a8a8a;"></div><div style="left:2298px;top:270px;width:476px;height:1447px;background:#ebebeb;"></div><div style="left:2298px;top:270px;width:476px;height:992px;background:#f0f0f0;"></div><div style="left:2309px;top:286.5px;font-size:17px;line-height:17px;color:#111;font-weight:700;white-space:nowrap;">Stitch type</div><div style="left:2309px;top:323px;width:462px;height:498px;background:#ececec;border:1px solid #c0c0c0;border-right-color:#fff;border-bottom-color:#fff;"></div><div style="left:2313px;top:327px;width:105px;height:162px;border:5px solid #c9def4;background:#eeeeee;"></div><svg style="position:absolute;left:2320px;top:334px;" width="92" height="93" viewBox="0 0 92 93"><defs><clipPath id="c1"><rect width="92" height="93"/></clipPath></defs><g clip-path="url(#c1)"><rect width="92" height="93" fill="#1c9398"/><path d="M-1.6 3.8 L7.3 2.8 M10.5 2.0 L17.6 1.1 M22.1 0.2 L30.7 -0.9 M33.2 -0.7 L42.0 -1.8 M46.9 -2.4 L51.7 -2.9 M56.4 -2.9 L62.3 -3.6 M67.6 -5.4 L72.5 -5.9 M76.6 -6.0 L86.0 -7.1 M89.0 -7.9 L95.9 -8.7 M-5.3 10.3 L1.9 9.4 M5.1 9.3 L10.9 8.6 M14.2 8.7 L19.1 8.1 M23.3 6.8 L31.2 5.8 M36.8 5.1 L45.7 4.0 M49.2 4.3 L57.4 3.3 M62.8 2.8 L69.7 2.0 M74.2 1.2 L80.5 0.4 M85.7 -0.3 L94.5 -1.4 M-0.4 17.0 L5.6 16.3 M9.3 15.6 L14.9 14.9 M19.6 14.1 L27.6 13.1 M31.4 13.2 L38.6 12.3 M42.7 11.5 L49.4 10.7 M51.9 10.6 L56.9 10.0 M62.4 9.0 L70.1 8.1 M73.0 8.4 L80.2 7.6 M85.1 6.8 L92.5 5.9 M-6.2 24.1 L3.2 23.0 M7.1 22.5 L13.2 21.7 M18.6 21.4 L23.5 20.8 M28.5 20.1 L37.5 19.0 M42.5 18.2 L49.8 17.3 M53.6 17.3 L58.6 16.7 M62.9 15.7 L68.6 15.0 M72.6 14.4 L79.1 13.6 M83.2 13.4 L91.0 12.5 M-0.3 29.5 L5.6 28.8 M9.8 29.1 L18.8 28.0 M23.7 26.8 L32.4 25.7 M37.5 24.9 L45.6 23.9 M48.0 24.4 L52.9 23.9 M56.1 23.3 L61.4 22.7 M64.9 21.7 L70.0 21.1 M74.1 20.7 L79.7 20.1 M84.4 19.5 L91.4 18.7 M-0.3 36.5 L6.4 35.7 M9.4 35.9 L14.7 35.3 M18.7 34.4 L24.5 33.7 M29.5 32.4 L34.4 31.8 M37.3 31.7 L45.6 30.7 M50.2 30.6 L58.3 29.6 M61.4 29.5 L70.9 28.4 M74.9 27.7 L80.8 27.0 M84.5 26.2 L92.0 25.3 M-0.7 43.8 L5.5 43.1 M10.7 42.3 L17.0 41.6 M20.4 41.0 L29.7 39.9 M33.4 38.6 L39.4 37.9 M44.7 38.2 L49.6 37.6 M55.1 36.2 L62.7 35.3 M67.8 35.3 L77.3 34.1 M81.3 33.2 L87.9 32.4 M91.0 32.2 L99.0 31.2 M-1.3 49.7 L6.7 48.8 M10.7 49.0 L17.1 48.2 M22.4 46.8 L27.3 46.2 M30.7 46.5 L40.3 45.3 M43.7 44.8 L49.6 44.1 M54.6 43.1 L63.9 42.0 M69.1 41.5 L77.2 40.5 M82.8 40.2 L88.7 39.4 M91.4 39.3 L97.0 38.7 M-9.1 58.0 L-1.4 57.0 M2.1 56.0 L8.6 55.2 M13.8 55.4 L21.5 54.4 M26.7 53.3 L32.1 52.7 M34.9 51.8 L39.9 51.2 M45.0 51.5 L53.6 50.4 M57.1 49.9 L64.9 49.0 M68.5 47.9 L76.0 47.0 M78.7 47.5 L84.8 46.8 M89.0 45.7 L98.2 44.6 M-9.4 63.7 L-0.7 62.6 M3.9 62.2 L9.1 61.6 M14.3 61.1 L19.3 60.5 M24.9 59.7 L31.7 58.8 M34.7 59.2 L40.6 58.5 M43.3 57.8 L52.5 56.7 M58.0 55.9 L67.2 54.8 M70.4 54.2 L77.5 53.3 M82.0 52.7 L87.0 52.1 M-3.5 70.1 L4.1 69.2 M7.5 69.3 L12.6 68.7 M18.1 67.1 L27.6 66.0 M30.7 66.6 L38.4 65.7 M42.6 64.8 L50.7 63.9 M53.9 63.1 L61.3 62.2 M64.5 61.7 L69.7 61.1 M75.2 60.9 L82.2 60.1 M86.6 59.2 L96.0 58.1 M-3.9 77.3 L2.4 76.5 M7.7 75.3 L13.9 74.5 M18.0 74.3 L25.6 73.4 M28.8 72.6 L33.7 72.0 M36.3 71.5 L43.8 70.6 M46.4 70.6 L54.3 69.6 M59.2 69.7 L66.4 68.9 M69.3 68.4 L76.5 67.6 M79.1 66.5 L88.5 65.4 M-11.8 84.2 L-3.1 83.2 M-0.3 83.6 L6.9 82.7 M10.3 81.4 L19.4 80.3 M24.7 79.9 L29.6 79.3 M34.9 79.3 L43.6 78.3 M48.7 77.4 L57.1 76.4 M60.0 75.4 L66.9 74.6 M71.6 74.1 L79.6 73.2 M82.2 73.5 L91.6 72.4 M-6.5 90.4 L2.4 89.3 M6.1 88.7 L12.5 87.9 M15.0 87.8 L22.9 86.8 M27.1 86.3 L32.2 85.6 M35.0 85.2 L40.4 84.5 M45.5 84.1 L52.2 83.3 M56.6 82.3 L62.5 81.6 M66.6 81.9 L73.8 81.0 M77.6 80.6 L85.7 79.7 M88.8 79.0 L96.0 78.1" stroke="#137a80" stroke-width="2.6" fill="none"/><path d="M-6.3 4.6 L2.1 3.6 M7.0 2.6 L15.1 1.6 M18.8 1.2 L27.0 0.2 M33.2 -0.9 L39.1 -1.6 M42.4 -1.5 L52.2 -2.7 M55.4 -2.8 L66.1 -4.1 M71.7 -5.7 L80.4 -6.7 M83.5 -7.2 L91.7 -8.2 M-3.4 10.3 L2.2 9.7 M6.9 9.2 L16.9 8.0 M22.4 7.5 L30.5 6.5 M35.4 6.3 L42.3 5.5 M49.3 4.3 L59.2 3.1 M63.5 2.1 L70.1 1.3 M73.4 1.0 L82.9 -0.1 M89.3 -0.2 L96.8 -1.1 M-0.0 17.1 L6.5 16.3 M11.4 15.1 L22.1 13.8 M25.4 13.9 L34.2 12.8 M38.3 11.8 L44.1 11.1 M51.0 10.0 L60.5 8.9 M64.5 8.3 L70.4 7.6 M76.6 7.5 L83.0 6.7 M87.8 6.4 L94.2 5.6 M-9.0 24.2 L-3.0 23.5 M0.9 23.7 L7.7 22.9 M13.9 22.0 L21.0 21.2 M24.8 20.7 L32.4 19.8 M37.9 19.3 L43.9 18.6 M47.7 17.9 L54.5 17.0 M58.8 15.7 L65.8 14.8 M69.2 14.6 L77.7 13.6 M83.1 13.2 L90.5 12.3 M-6.8 31.1 L1.7 30.1 M5.5 29.7 L11.7 29.0 M18.0 27.4 L24.7 26.6 M30.7 25.8 L41.1 24.6 M47.9 24.3 L58.1 23.0 M62.8 21.8 L68.8 21.1 M75.6 21.1 L82.3 20.3 M86.3 19.6 L96.2 18.5 M-2.5 36.3 L6.8 35.2 M10.7 35.7 L19.2 34.7 M24.6 34.1 L31.5 33.3 M35.4 32.0 L40.8 31.4 M45.6 30.7 L51.4 30.0 M55.8 29.4 L64.3 28.4 M68.8 28.9 L79.0 27.6 M84.6 26.5 L93.7 25.4 M-0.5 43.7 L5.0 43.1 M10.8 41.3 L21.4 40.0 M27.0 40.2 L35.0 39.3 M39.2 38.0 L50.0 36.7 M55.2 37.0 L64.6 35.9 M70.5 35.1 L79.7 34.0 M86.4 33.0 L93.7 32.2 M-12.2 51.6 L-4.5 50.7 M1.9 49.7 L10.4 48.7 M14.9 48.2 L23.5 47.1 M26.8 47.2 L35.7 46.1 M42.2 44.6 L51.5 43.5 M57.4 42.9 L66.0 41.8 M72.3 41.4 L78.2 40.7 M81.3 40.0 L90.0 39.0 M-9.8 57.8 L-1.7 56.8 M5.0 55.3 L11.8 54.5 M16.0 54.2 L25.0 53.1 M28.7 53.2 L39.0 52.0 M43.8 51.0 L54.0 49.8 M59.7 49.2 L66.1 48.4 M72.3 48.2 L82.7 47.0 M87.2 45.8 L95.8 44.8 M-7.0 64.4 L3.0 63.2 M8.8 61.8 L19.3 60.5 M23.0 60.1 L30.9 59.1 M34.7 59.1 L42.3 58.2 M47.3 57.8 L54.4 57.0 M61.4 55.2 L69.2 54.3 M72.3 53.9 L82.4 52.7 M88.3 52.3 L96.8 51.3 M-0.3 69.7 L5.9 69.0 M9.0 68.4 L18.8 67.2 M22.4 67.2 L28.1 66.5 M32.8 66.0 L41.6 64.9 M47.9 64.2 L58.5 63.0 M62.3 61.9 L70.2 60.9 M73.3 61.2 L81.2 60.3 M84.9 59.4 L91.8 58.5 M-7.3 77.6 L1.4 76.5 M6.0 76.2 L15.7 75.0 M19.0 74.4 L29.5 73.1 M33.0 72.6 L40.8 71.6 M47.5 70.8 L54.9 69.9 M61.4 69.6 L71.1 68.4 M76.0 66.9 L84.9 65.9 M90.8 65.7 L100.6 64.5 M-3.0 84.0 L7.3 82.7 M14.2 81.7 L22.5 80.7 M26.8 80.3 L37.1 79.0 M41.5 78.0 L47.3 77.3 M52.5 76.7 L62.1 75.6 M65.2 74.7 L75.0 73.5 M81.2 73.1 L87.5 72.3 M-2.0 89.9 L4.2 89.2 M10.1 88.7 L20.1 87.5 M26.8 87.0 L34.9 86.0 M38.3 85.1 L44.8 84.3 M49.0 84.0 L58.3 82.8 M63.4 82.1 L73.4 80.9 M77.6 80.8 L85.1 79.9 M91.7 79.1 L98.2 78.3" stroke="#52d3d9" stroke-width="1.5" fill="none"/></g></svg><div style="left:2314.5px;top:439.9px;width:104px;text-align:center;font-size:17px;line-height:17px;color:#333;font-weight:400;white-space:nowrap;">Tatami</div><svg style="position:absolute;left:2426px;top:334px;" width="92" height="93" viewBox="0 0 92 93"><defs><linearGradient id="sg3" x1="0" x2="1"><stop offset="0" stop-color="#0f6f74"/><stop offset="0.25" stop-color="#2cb0b6"/><stop offset="0.6" stop-color="#3cc4ca"/><stop offset="0.8" stop-color="#2aa8ae"/><stop offset="1" stop-color="#0f6f74"/></linearGradient><clipPath id="c3"><rect width="92" height="93"/></clipPath></defs><g clip-path="url(#c3)"><rect width="92" height="93" fill="url(#sg3)"/><path d="M-1.9 1.5 L1.8 1.5 M6.1 1.3 L10.0 1.3 M12.5 1.4 L16.9 1.4 M20.0 1.5 L24.8 1.5 M29.9 1.6 L33.4 1.6 M36.3 1.8 L40.3 1.8 M44.3 1.7 L48.5 1.7 M51.1 1.6 L55.3 1.6 M58.7 1.8 L61.2 1.8 M65.1 1.8 L69.2 1.8 M73.9 1.5 L78.5 1.5 M83.5 1.8 L86.9 1.8 M-0.8 4.5 L1.9 4.5 M7.4 4.7 L10.9 4.7 M14.2 4.6 L17.9 4.6 M21.4 4.7 L25.2 4.7 M30.5 4.9 L34.5 4.9 M39.7 4.8 L44.4 4.8 M47.4 4.9 L51.8 4.9 M57.1 4.8 L60.9 4.8 M64.0 4.7 L68.4 4.7 M71.7 4.9 L74.2 4.9 M79.8 4.8 L82.4 4.8 M86.1 4.5 L88.9 4.5 M-7.0 7.8 L-4.5 7.8 M-1.9 7.6 L2.2 7.6 M7.4 7.8 L12.2 7.8 M17.8 7.5 L20.9 7.5 M25.2 7.6 L27.7 7.6 M31.4 7.5 L35.3 7.5 M37.8 7.6 L42.3 7.6 M47.8 7.7 L52.3 7.7 M56.2 7.8 L59.8 7.8 M64.1 7.8 L67.9 7.8 M73.3 7.7 L76.9 7.7 M81.6 7.6 L84.6 7.6 M90.1 7.8 L93.8 7.8 M-3.3 10.6 L0.5 10.6 M4.8 10.6 L8.8 10.6 M13.2 11.0 L16.7 11.0 M20.2 11.0 L24.3 11.0 M26.8 11.0 L29.3 11.0 M34.8 10.8 L37.8 10.8 M42.1 10.8 L45.3 10.8 M48.7 10.9 L52.0 10.9 M55.3 11.0 L58.6 11.0 M61.1 11.0 L64.9 11.0 M68.3 11.0 L71.2 11.0 M74.4 10.8 L77.2 10.8 M81.9 10.7 L84.5 10.7 M88.0 10.8 L92.4 10.8 M-1.4 14.0 L1.9 14.0 M7.1 13.8 L10.6 13.8 M13.4 13.8 L17.0 13.8 M22.0 13.8 L26.4 13.8 M29.7 14.0 L34.0 14.0 M39.0 13.7 L42.3 13.7 M45.6 13.8 L49.9 13.8 M53.4 13.9 L56.8 13.9 M60.5 13.7 L65.1 13.7 M67.5 14.2 L72.2 14.2 M77.8 14.2 L81.2 14.2 M86.6 14.1 L89.5 14.1 M-5.3 16.9 L-1.7 16.9 M1.8 16.8 L4.8 16.8 M9.1 17.2 L12.2 17.2 M14.7 17.2 L19.3 17.2 M24.6 17.3 L29.2 17.3 M33.4 17.2 L35.9 17.2 M38.8 17.1 L41.9 17.1 M46.0 17.3 L49.4 17.3 M53.8 16.9 L57.0 16.9 M62.1 17.2 L65.7 17.2 M69.2 17.1 L72.1 17.1 M77.1 17.2 L79.9 17.2 M85.2 17.2 L89.6 17.2 M-5.0 19.9 L-0.6 19.9 M2.7 20.2 L5.8 20.2 M9.5 20.3 L13.0 20.3 M15.4 19.9 L18.0 19.9 M20.8 20.4 L23.3 20.4 M28.5 20.2 L31.1 20.2 M34.5 20.1 L37.7 20.1 M42.1 20.1 L45.9 20.1 M48.9 19.9 L52.1 19.9 M56.3 20.1 L60.4 20.1 M63.1 20.1 L65.9 20.1 M70.2 20.1 L74.5 20.1 M79.5 20.1 L83.4 20.1 M87.0 20.3 L90.6 20.3 M-5.6 23.1 L-2.0 23.1 M2.1 23.0 L6.1 23.0 M9.9 23.5 L13.3 23.5 M18.7 23.5 L22.0 23.5 M26.9 23.2 L30.0 23.2 M32.8 23.3 L37.1 23.3 M42.4 23.4 L46.7 23.4 M51.4 23.0 L55.2 23.0 M59.4 23.0 L61.9 23.0 M66.7 23.0 L69.2 23.0 M72.0 23.1 L76.5 23.1 M78.9 23.0 L83.4 23.0 M88.5 23.5 L92.5 23.5 M-4.6 26.1 L-0.3 26.1 M4.5 26.5 L8.2 26.5 M10.9 26.6 L15.1 26.6 M17.7 26.4 L20.9 26.4 M25.9 26.2 L28.9 26.2 M32.1 26.5 L36.0 26.5 M39.6 26.3 L42.9 26.3 M46.5 26.1 L49.9 26.1 M53.9 26.3 L58.6 26.3 M63.4 26.5 L66.2 26.5 M71.0 26.4 L75.0 26.4 M79.0 26.6 L82.9 26.6 M85.8 26.5 L88.4 26.5 M-4.1 29.6 L-0.7 29.6 M2.3 29.3 L5.4 29.3 M9.6 29.3 L12.8 29.3 M17.4 29.3 L22.1 29.3 M26.7 29.7 L30.1 29.7 M34.4 29.3 L37.5 29.3 M39.9 29.4 L43.5 29.4 M46.4 29.3 L49.7 29.3 M54.6 29.7 L57.3 29.7 M61.3 29.4 L65.1 29.4 M70.2 29.5 L74.5 29.5 M78.5 29.7 L82.6 29.7 M86.3 29.7 L90.4 29.7 M-1.8 32.7 L1.1 32.7 M5.7 32.8 L10.4 32.8 M13.6 32.4 L16.4 32.4 M19.4 32.8 L23.5 32.8 M28.8 32.8 L31.8 32.8 M35.2 32.7 L38.6 32.7 M41.3 32.8 L43.9 32.8 M47.2 32.6 L50.5 32.6 M55.1 32.5 L57.5 32.5 M61.3 32.4 L64.8 32.4 M69.1 32.5 L73.8 32.5 M78.0 32.4 L80.6 32.4 M85.2 32.8 L87.8 32.8 M-0.8 35.6 L3.9 35.6 M8.8 35.5 L13.0 35.5 M17.5 35.8 L21.5 35.8 M24.8 35.9 L29.0 35.9 M33.5 35.4 L37.2 35.4 M41.2 35.8 L44.4 35.8 M49.0 35.5 L52.8 35.5 M57.2 35.5 L61.1 35.5 M66.4 35.4 L70.4 35.4 M75.7 35.5 L78.5 35.5 M83.2 35.7 L87.0 35.7 M91.5 35.5 L95.0 35.5 M-0.5 38.9 L3.6 38.9 M7.7 38.7 L11.9 38.7 M15.1 39.0 L18.5 39.0 M21.0 38.6 L24.6 38.6 M29.5 38.6 L32.7 38.6 M36.4 38.9 L40.1 38.9 M43.6 38.5 L48.1 38.5 M51.3 38.5 L54.0 38.5 M58.9 38.6 L63.0 38.6 M66.0 38.9 L69.4 38.9 M74.4 38.8 L78.6 38.8 M81.5 38.6 L84.8 38.6 M88.9 38.6 L92.7 38.6 M-6.3 42.0 L-3.8 42.0 M1.5 41.8 L6.1 41.8 M10.3 41.9 L14.1 41.9 M19.6 41.7 L23.7 41.7 M28.8 41.9 L32.4 41.9 M37.1 42.0 L39.5 42.0 M44.1 41.9 L47.6 41.9 M51.5 41.9 L54.4 41.9 M56.9 41.9 L60.5 41.9 M64.3 42.1 L68.1 42.1 M73.3 42.0 L76.1 42.0 M80.4 41.8 L83.0 41.8 M86.1 41.9 L88.7 41.9 M-2.6 45.1 L1.9 45.1 M4.7 45.0 L9.2 45.0 M14.6 45.1 L18.7 45.1 M22.2 45.2 L26.5 45.2 M31.7 45.1 L35.1 45.1 M39.1 44.7 L41.7 44.7 M44.4 44.7 L47.3 44.7 M51.3 45.0 L55.3 45.0 M59.1 44.8 L63.0 44.8 M66.9 44.9 L71.1 44.9 M74.1 45.1 L78.7 45.1 M82.3 45.0 L85.5 45.0 M89.9 44.7 L92.8 44.7 M-6.3 48.0 L-3.5 48.0 M-0.5 47.9 L2.4 47.9 M6.1 47.8 L8.9 47.8 M11.7 48.0 L14.5 48.0 M17.0 48.0 L19.5 48.0 M23.2 47.8 L27.3 47.8 M31.0 47.8 L34.3 47.8 M39.8 47.8 L42.8 47.8 M46.7 48.1 L49.5 48.1 M53.0 47.8 L55.7 47.8 M60.4 48.2 L63.5 48.2 M67.4 47.9 L72.0 47.9 M75.2 48.2 L78.2 48.2 M82.6 47.8 L85.9 47.8 M90.5 48.1 L95.2 48.1 M-0.2 51.0 L2.4 51.0 M4.9 51.2 L7.4 51.2 M12.7 51.4 L15.6 51.4 M19.5 51.4 L23.8 51.4 M29.2 51.0 L31.7 51.0 M36.1 50.9 L40.7 50.9 M44.1 50.9 L48.5 50.9 M52.2 51.3 L55.4 51.3 M60.7 51.3 L63.6 51.3 M68.3 51.2 L72.7 51.2 M78.1 51.1 L81.3 51.1 M84.5 51.1 L88.7 51.1 M-1.4 54.3 L2.8 54.3 M7.4 54.2 L10.8 54.2 M13.7 54.0 L17.8 54.0 M21.7 54.4 L25.9 54.4 M28.6 54.5 L31.6 54.5 M36.0 54.5 L40.5 54.5 M44.4 54.4 L48.9 54.4 M52.4 54.0 L55.7 54.0 M59.4 54.0 L64.1 54.0 M68.3 54.0 L70.9 54.0 M75.4 54.0 L78.4 54.0 M81.3 54.3 L85.2 54.3 M87.7 54.5 L90.6 54.5 M-4.5 57.5 L-1.1 57.5 M3.2 57.4 L7.5 57.4 M10.5 57.1 L13.4 57.1 M18.4 57.1 L21.1 57.1 M26.6 57.6 L29.4 57.6 M32.1 57.2 L35.6 57.2 M40.7 57.4 L44.6 57.4 M49.4 57.3 L53.9 57.3 M58.2 57.1 L61.7 57.1 M66.8 57.5 L70.6 57.5 M73.7 57.3 L77.3 57.3 M82.1 57.3 L84.7 57.3 M88.6 57.4 L91.2 57.4 M-3.4 60.5 L0.6 60.5 M3.7 60.7 L6.9 60.7 M10.4 60.2 L13.8 60.2 M16.9 60.7 L19.7 60.7 M24.4 60.7 L28.9 60.7 M33.3 60.5 L37.9 60.5 M41.7 60.7 L46.3 60.7 M51.8 60.6 L55.3 60.6 M59.0 60.7 L63.8 60.7 M67.2 60.3 L71.8 60.3 M74.5 60.3 L78.6 60.3 M82.7 60.2 L86.6 60.2 M91.4 60.4 L94.5 60.4 M-5.9 63.4 L-1.7 63.4 M1.0 63.5 L4.1 63.5 M6.8 63.7 L9.5 63.7 M14.2 63.8 L18.9 63.8 M24.1 63.3 L27.4 63.3 M30.8 63.6 L34.3 63.6 M38.4 63.8 L41.7 63.8 M45.0 63.8 L48.5 63.8 M53.5 63.4 L56.6 63.4 M61.6 63.3 L64.0 63.3 M68.1 63.3 L71.8 63.3 M74.4 63.7 L77.3 63.7 M81.2 63.7 L85.9 63.7 M91.4 63.4 L93.9 63.4 M-3.5 66.4 L-0.2 66.4 M3.9 66.5 L6.5 66.5 M9.7 66.6 L14.0 66.6 M17.3 66.6 L19.8 66.6 M24.2 66.9 L28.2 66.9 M33.2 66.4 L36.2 66.4 M41.0 66.7 L45.3 66.7 M50.4 66.5 L54.1 66.5 M57.0 66.7 L59.5 66.7 M64.7 66.6 L69.3 66.6 M73.9 66.8 L78.5 66.8 M82.8 66.7 L86.2 66.7 M89.1 66.8 L92.0 66.8 M-4.4 69.7 L-1.0 69.7 M2.9 69.7 L7.2 69.7 M12.7 69.6 L15.4 69.6 M19.5 70.0 L22.9 70.0 M27.9 69.8 L32.6 69.8 M35.1 69.8 L38.8 69.8 M42.8 69.9 L45.9 69.9 M51.2 69.9 L53.8 69.9 M57.4 70.0 L61.1 70.0 M66.5 69.6 L70.5 69.6 M75.8 69.7 L78.7 69.7 M83.7 69.6 L86.9 69.6 M-7.6 72.8 L-4.4 72.8 M-1.1 72.7 L1.6 72.7 M7.2 72.7 L9.8 72.7 M12.8 72.9 L15.4 72.9 M20.2 72.9 L24.6 72.9 M29.6 72.7 L32.0 72.7 M37.5 72.7 L40.0 72.7 M44.0 72.9 L47.0 72.9 M49.6 73.1 L52.6 73.1 M55.4 72.7 L60.0 72.7 M65.6 72.9 L69.6 72.9 M72.4 73.0 L75.0 73.0 M77.9 73.0 L80.8 73.0 M86.0 73.1 L88.5 73.1 M-3.1 75.9 L-0.4 75.9 M5.2 75.7 L8.2 75.7 M11.1 75.9 L13.8 75.9 M19.1 75.8 L21.7 75.8 M27.1 76.2 L31.9 76.2 M35.1 76.2 L38.3 76.2 M42.3 75.8 L46.4 75.8 M48.9 76.1 L52.1 76.1 M57.0 75.9 L60.8 75.9 M64.9 76.0 L68.3 76.0 M73.4 76.0 L76.3 76.0 M81.7 75.8 L86.1 75.8 M91.6 75.8 L96.0 75.8 M-1.6 79.3 L0.9 79.3 M4.6 78.8 L9.1 78.8 M11.6 79.2 L16.0 79.2 M21.6 79.1 L25.7 79.1 M30.5 79.1 L33.1 79.1 M36.9 79.1 L39.7 79.1 M43.1 79.0 L46.7 79.0 M50.2 79.1 L53.4 79.1 M59.0 79.3 L63.6 79.3 M68.7 79.3 L71.8 79.3 M75.0 79.1 L77.7 79.1 M82.5 79.1 L85.7 79.1 M89.0 79.0 L93.7 79.0 M-4.3 82.4 L0.2 82.4 M4.3 82.2 L7.8 82.2 M10.4 82.4 L13.8 82.4 M18.7 82.4 L21.3 82.4 M24.9 82.1 L29.7 82.1 M32.7 82.4 L36.5 82.4 M40.2 82.3 L44.7 82.3 M48.3 82.2 L51.4 82.2 M55.1 82.2 L58.4 82.2 M63.6 81.9 L67.4 81.9 M70.5 82.2 L73.8 82.2 M76.6 82.0 L79.2 82.0 M82.5 82.2 L85.0 82.2 M90.3 82.3 L94.0 82.3 M-6.7 85.2 L-2.1 85.2 M2.5 85.5 L5.2 85.5 M8.8 85.5 L12.3 85.5 M15.6 85.4 L18.5 85.4 M22.8 85.0 L25.4 85.0 M28.9 85.4 L31.3 85.4 M34.3 85.2 L37.4 85.2 M41.4 85.3 L44.9 85.3 M49.4 85.0 L52.8 85.0 M58.4 85.0 L62.4 85.0 M66.2 85.5 L70.4 85.5 M73.1 85.2 L75.5 85.2 M79.2 85.4 L83.8 85.4 M87.2 85.3 L90.6 85.3 M-1.6 88.1 L1.7 88.1 M6.2 88.6 L8.6 88.6 M12.7 88.1 L16.5 88.1 M19.6 88.6 L23.2 88.6 M27.3 88.6 L30.4 88.6 M34.9 88.2 L38.6 88.2 M41.9 88.1 L46.5 88.1 M50.6 88.3 L54.5 88.3 M59.3 88.6 L63.9 88.6 M68.7 88.1 L71.6 88.1 M75.3 88.2 L78.5 88.2 M83.7 88.5 L86.6 88.5 M92.0 88.6 L94.7 88.6 M-1.7 91.2 L1.2 91.2 M5.1 91.7 L8.5 91.7 M13.5 91.4 L16.1 91.4 M19.7 91.3 L22.5 91.3 M25.8 91.4 L29.9 91.4 M32.6 91.4 L35.5 91.4 M39.7 91.6 L42.7 91.6 M45.8 91.5 L49.8 91.5 M52.8 91.4 L57.0 91.4 M61.1 91.5 L65.0 91.5 M68.8 91.6 L71.3 91.6 M76.5 91.5 L80.0 91.5 M83.3 91.6 L87.9 91.6 M91.0 91.7 L95.3 91.7" stroke="#5fe3e8" stroke-width="1.1" fill="none"/></g></svg><div style="left:2419.5px;top:439.9px;width:104px;text-align:center;font-size:17px;line-height:17px;color:#333;font-weight:400;white-space:nowrap;">Satin</div><svg style="position:absolute;left:2530px;top:334px;" width="92" height="93" viewBox="0 0 92 93"><defs><linearGradient id="sg5" x1="0" x2="1"><stop offset="0" stop-color="#0f6f74"/><stop offset="0.25" stop-color="#2cb0b6"/><stop offset="0.6" stop-color="#3cc4ca"/><stop offset="0.85" stop-color="#2aa8ae"/><stop offset="1" stop-color="#0f6f74"/></linearGradient><clipPath id="c5"><rect width="92" height="93"/></clipPath></defs><g clip-path="url(#c5)"><rect width="92" height="93" fill="url(#sg5)"/><path d="M-5.0 1.7 L-0.8 1.7 M4.6 1.8 L8.8 1.8 M11.3 1.8 L14.8 1.8 M19.3 1.3 L23.8 1.3 M27.7 1.6 L30.7 1.6 M35.0 1.4 L37.4 1.4 M40.7 1.7 L45.3 1.7 M48.2 1.3 L52.5 1.3 M56.9 1.3 L59.6 1.3 M64.8 1.4 L67.7 1.4 M73.2 1.4 L77.7 1.4 M83.2 1.7 L86.9 1.7 M90.0 1.7 L94.6 1.7 M-7.1 4.6 L-4.0 4.6 M-1.1 4.4 L1.6 4.4 M5.0 4.4 L8.9 4.4 M13.4 4.5 L16.6 4.5 M21.7 4.5 L25.2 4.5 M29.2 4.4 L33.2 4.4 M38.8 4.8 L41.2 4.8 M46.3 4.8 L48.8 4.8 M52.3 4.4 L56.1 4.4 M58.7 4.9 L61.5 4.9 M64.5 4.9 L68.8 4.9 M74.2 4.6 L77.4 4.6 M81.5 4.4 L85.7 4.4 M90.5 4.9 L94.8 4.9 M-7.6 7.7 L-4.9 7.7 M-0.6 7.7 L4.0 7.7 M9.4 7.6 L13.1 7.6 M16.5 7.5 L19.3 7.5 M22.2 8.0 L26.2 8.0 M29.2 8.0 L31.7 8.0 M35.8 7.6 L39.2 7.6 M43.5 7.7 L47.8 7.7 M51.6 8.0 L54.1 8.0 M56.6 8.0 L60.2 8.0 M63.0 8.0 L67.2 8.0 M71.6 7.5 L75.9 7.5 M79.7 8.0 L82.4 8.0 M85.8 8.0 L89.3 8.0 M-7.8 10.8 L-4.3 10.8 M0.4 10.7 L4.0 10.7 M7.7 10.8 L10.4 10.8 M16.0 10.9 L20.7 10.9 M24.7 10.6 L27.9 10.6 M31.2 11.1 L35.4 11.1 M39.0 11.0 L43.3 11.0 M47.9 11.0 L51.9 11.0 M55.5 10.7 L59.5 10.7 M63.5 11.0 L67.7 11.0 M71.1 10.9 L75.8 10.9 M80.0 10.9 L82.4 10.9 M85.6 10.8 L89.7 10.8 M-5.2 13.9 L-0.9 13.9 M3.6 14.1 L7.8 14.1 M11.3 14.2 L15.7 14.2 M20.3 14.2 L25.1 14.2 M29.1 13.7 L32.8 13.7 M37.9 13.9 L42.5 13.9 M47.1 14.1 L51.3 14.1 M54.2 14.0 L58.5 14.0 M63.0 14.0 L66.4 14.0 M71.3 14.1 L75.2 14.1 M77.7 13.9 L80.5 13.9 M85.0 14.1 L87.9 14.1 M-0.3 16.9 L3.2 16.9 M5.8 16.9 L8.5 16.9 M11.5 16.8 L14.3 16.8 M18.2 17.1 L21.5 17.1 M25.8 17.3 L28.8 17.3 M31.2 16.9 L34.6 16.9 M38.3 17.2 L41.0 17.2 M44.6 17.1 L47.0 17.1 M49.7 17.0 L53.5 17.0 M57.7 17.2 L62.4 17.2 M66.2 17.1 L70.5 17.1 M74.1 17.1 L76.8 17.1 M81.0 17.3 L85.7 17.3 M90.1 17.3 L93.3 17.3 M-0.9 20.2 L2.9 20.2 M5.7 20.4 L9.7 20.4 M13.3 20.0 L16.7 20.0 M20.0 20.1 L24.8 20.1 M30.2 20.2 L34.8 20.2 M38.1 20.1 L42.8 20.1 M46.5 20.4 L49.7 20.4 M53.7 20.1 L56.8 20.1 M59.6 20.1 L63.5 20.1 M66.8 20.3 L71.1 20.3 M73.5 20.0 L77.2 20.0 M82.6 20.0 L86.9 20.0 M90.1 20.4 L92.9 20.4 M-4.9 23.3 L-1.3 23.3 M3.0 23.0 L7.2 23.0 M12.0 23.3 L15.1 23.3 M18.6 23.3 L21.7 23.3 M25.6 23.4 L28.9 23.4 M33.2 23.1 L35.7 23.1 M39.5 23.5 L44.1 23.5 M48.3 23.4 L50.7 23.4 M54.5 23.4 L58.3 23.4 M62.7 23.5 L66.2 23.5 M69.9 23.5 L73.2 23.5 M76.2 23.4 L79.3 23.4 M82.0 23.4 L86.4 23.4 M90.2 23.4 L93.2 23.4 M-1.1 26.4 L2.4 26.4 M6.4 26.1 L9.6 26.1 M13.9 26.1 L18.2 26.1 M21.4 26.5 L25.7 26.5 M30.2 26.5 L32.7 26.5 M38.2 26.5 L43.0 26.5 M45.6 26.2 L50.0 26.2 M54.5 26.5 L59.2 26.5 M62.0 26.6 L65.1 26.6 M68.0 26.3 L71.8 26.3 M74.8 26.1 L78.6 26.1 M81.4 26.1 L84.7 26.1 M87.3 26.5 L91.1 26.5 M-1.1 29.3 L2.4 29.3 M6.7 29.7 L10.3 29.7 M13.9 29.6 L16.4 29.6 M19.3 29.5 L23.2 29.5 M28.5 29.5 L32.2 29.5 M35.5 29.3 L39.2 29.3 M44.0 29.2 L47.6 29.2 M50.8 29.6 L54.1 29.6 M57.1 29.5 L61.2 29.5 M63.8 29.2 L67.8 29.2 M70.6 29.3 L74.5 29.3 M79.7 29.3 L83.2 29.3 M88.2 29.6 L90.6 29.6 M-1.2 32.7 L3.5 32.7 M6.6 32.8 L9.3 32.8 M13.8 32.3 L18.2 32.3 M22.6 32.4 L25.8 32.4 M29.3 32.5 L33.2 32.5 M36.8 32.7 L39.5 32.7 M44.0 32.5 L48.3 32.5 M53.4 32.6 L57.1 32.6 M61.3 32.5 L65.5 32.5 M68.2 32.4 L70.7 32.4 M73.2 32.5 L77.8 32.5 M82.6 32.5 L85.0 32.5 M90.2 32.5 L94.1 32.5 M-0.8 35.4 L2.0 35.4 M5.6 35.9 L8.9 35.9 M11.8 35.5 L14.8 35.5 M17.7 35.5 L20.8 35.5 M24.7 35.9 L27.2 35.9 M30.8 35.8 L35.5 35.8 M40.0 35.9 L43.5 35.9 M46.3 35.5 L50.3 35.5 M54.9 35.4 L59.0 35.4 M62.1 35.5 L64.5 35.5 M67.2 35.9 L70.5 35.9 M74.1 35.6 L77.3 35.6 M80.6 35.8 L84.7 35.8 M87.6 35.8 L90.6 35.8 M-5.2 39.0 L-1.7 39.0 M0.7 38.9 L3.2 38.9 M6.9 38.8 L9.5 38.8 M15.0 38.7 L18.7 38.7 M21.4 39.0 L23.9 39.0 M27.9 38.5 L32.6 38.5 M35.7 38.7 L38.3 38.7 M40.8 38.7 L43.9 38.7 M47.2 38.5 L49.8 38.5 M55.3 38.8 L58.1 38.8 M61.8 38.5 L65.5 38.5 M68.9 38.8 L71.5 38.8 M76.9 39.0 L80.7 39.0 M83.8 38.8 L86.2 38.8 M90.2 38.7 L94.0 38.7 M-5.8 41.7 L-1.2 41.7 M2.6 41.7 L7.0 41.7 M9.8 41.6 L12.9 41.6 M17.8 41.7 L22.2 41.7 M25.0 41.7 L27.6 41.7 M30.2 41.9 L33.7 41.9 M36.9 42.0 L39.4 42.0 M42.0 41.7 L44.8 41.7 M48.4 41.8 L51.1 41.8 M54.5 41.9 L58.7 41.9 M64.0 42.0 L67.9 42.0 M72.2 42.0 L75.6 42.0 M80.1 42.0 L84.8 42.0 M89.5 42.0 L92.5 42.0 M-1.0 44.8 L1.5 44.8 M4.8 44.8 L8.8 44.8 M11.4 45.0 L15.6 45.0 M18.1 44.7 L20.6 44.7 M24.2 45.2 L28.6 45.2 M33.0 44.9 L35.9 44.9 M39.5 44.7 L42.7 44.7 M47.0 45.1 L51.4 45.1 M54.1 44.8 L57.7 44.8 M62.4 45.2 L65.9 45.2 M70.8 44.8 L73.5 44.8 M78.8 44.9 L82.3 44.9 M86.1 45.2 L90.4 45.2 M-7.8 47.8 L-3.9 47.8 M1.1 47.8 L4.5 47.8 M10.0 48.1 L12.5 48.1 M16.4 48.0 L21.0 48.0 M24.0 47.9 L27.1 47.9 M31.3 48.2 L34.6 48.2 M37.7 47.9 L41.0 47.9 M46.5 48.3 L50.9 48.3 M55.3 47.8 L58.7 47.8 M63.7 47.8 L67.3 47.8 M70.3 48.2 L72.9 48.2 M78.2 48.2 L81.1 48.2 M84.5 48.3 L88.5 48.3 M-6.4 50.9 L-3.1 50.9 M0.9 51.0 L4.7 51.0 M8.4 50.9 L11.6 50.9 M15.0 51.1 L18.3 51.1 M22.9 51.4 L26.3 51.4 M31.3 51.3 L35.9 51.3 M40.5 51.3 L44.1 51.3 M47.7 51.3 L51.5 51.3 M55.6 50.9 L58.7 50.9 M61.4 51.2 L64.6 51.2 M69.4 51.0 L73.6 51.0 M78.9 51.3 L82.0 51.3 M84.6 51.3 L88.8 51.3 M-7.2 54.5 L-3.1 54.5 M1.6 54.1 L5.5 54.1 M9.6 54.1 L14.1 54.1 M19.6 54.2 L23.3 54.2 M25.7 54.1 L29.1 54.1 M33.6 54.5 L38.1 54.5 M42.5 54.0 L45.8 54.0 M50.4 54.4 L54.1 54.4 M57.7 54.1 L62.3 54.1 M65.7 54.3 L68.7 54.3 M74.0 54.3 L76.8 54.3 M81.6 54.0 L84.6 54.0 M88.8 54.5 L93.2 54.5 M-3.3 57.4 L0.1 57.4 M5.4 57.2 L8.5 57.2 M12.8 57.2 L17.6 57.2 M20.1 57.4 L22.7 57.4 M27.1 57.2 L29.9 57.2 M34.2 57.5 L38.2 57.5 M42.9 57.3 L45.4 57.3 M50.5 57.2 L55.2 57.2 M60.3 57.6 L64.3 57.6 M67.4 57.6 L71.5 57.6 M75.4 57.2 L78.1 57.2 M81.0 57.1 L83.6 57.1 M87.9 57.5 L90.6 57.5 M-6.5 60.6 L-2.2 60.6 M3.2 60.5 L7.9 60.5 M13.3 60.2 L16.0 60.2 M18.6 60.4 L21.5 60.4 M25.4 60.6 L29.4 60.6 M32.1 60.5 L35.4 60.5 M39.0 60.5 L41.7 60.5 M45.3 60.4 L49.3 60.4 M54.8 60.2 L59.5 60.2 M64.3 60.3 L68.5 60.3 M71.2 60.4 L74.8 60.4 M79.5 60.4 L84.1 60.4 M87.5 60.6 L91.1 60.6 M-4.6 63.5 L-1.5 63.5 M3.6 63.3 L7.3 63.3 M11.0 63.6 L14.0 63.6 M16.6 63.3 L19.7 63.3 M23.6 63.6 L28.4 63.6 M32.0 63.3 L36.6 63.3 M40.2 63.3 L44.5 63.3 M49.4 63.3 L52.6 63.3 M55.8 63.5 L59.3 63.5 M63.4 63.4 L65.9 63.4 M71.4 63.5 L74.9 63.5 M77.6 63.8 L80.6 63.8 M85.2 63.3 L88.9 63.3 M-6.2 66.7 L-2.8 66.7 M2.5 66.7 L6.5 66.7 M9.0 66.8 L11.4 66.8 M15.1 66.8 L19.6 66.8 M25.0 66.9 L28.3 66.9 M33.1 66.4 L37.6 66.4 M42.5 66.9 L46.0 66.9 M51.5 66.6 L54.5 66.6 M57.7 66.5 L61.3 66.5 M65.8 66.5 L68.5 66.5 M72.3 66.6 L74.9 66.6 M80.2 66.5 L84.7 66.5 M87.2 66.9 L91.6 66.9 M-1.1 70.0 L1.9 70.0 M7.3 69.6 L9.8 69.6 M13.5 69.9 L16.6 69.9 M20.2 69.5 L24.4 69.5 M28.5 69.9 L33.2 69.9 M35.9 69.8 L38.6 69.8 M42.2 69.7 L45.5 69.7 M49.7 69.6 L54.4 69.6 M58.7 69.8 L61.7 69.8 M66.4 69.7 L69.1 69.7 M73.8 69.9 L76.2 69.9 M80.0 69.8 L83.6 69.8 M88.5 69.8 L91.0 69.8 M-3.1 72.6 L0.1 72.6 M3.5 72.9 L7.0 72.9 M12.3 72.9 L15.6 72.9 M20.3 73.1 L25.0 73.1 M30.5 72.6 L33.6 72.6 M39.0 72.8 L41.6 72.8 M46.4 72.8 L50.0 72.8 M55.4 72.9 L58.5 72.9 M63.6 72.8 L66.3 72.8 M70.3 72.7 L74.0 72.7 M77.9 72.6 L80.4 72.6 M83.9 73.1 L86.7 73.1 M89.9 73.0 L93.0 73.0 M-2.1 76.0 L2.3 76.0 M5.9 75.8 L9.8 75.8 M13.1 75.9 L17.6 75.9 M22.9 75.7 L25.7 75.7 M28.3 76.0 L32.4 76.0 M34.9 76.1 L37.4 76.1 M41.3 75.7 L45.8 75.7 M50.1 76.1 L52.8 76.1 M57.2 75.8 L61.0 75.8 M66.5 75.7 L69.1 75.7 M73.7 75.7 L76.3 75.7 M80.2 76.2 L84.2 76.2 M88.9 76.0 L91.4 76.0 M-1.0 78.9 L3.2 78.9 M6.6 79.2 L9.0 79.2 M13.1 79.0 L17.6 79.0 M20.5 78.9 L23.4 78.9 M28.9 78.8 L31.8 78.8 M35.3 79.0 L37.9 79.0 M42.3 78.9 L46.2 78.9 M49.1 79.2 L52.7 79.2 M56.5 79.3 L60.3 79.3 M63.1 79.0 L66.2 79.0 M70.3 79.1 L74.8 79.1 M79.4 79.2 L82.8 79.2 M87.8 78.8 L90.9 78.8 M-2.9 82.0 L1.7 82.0 M6.1 82.4 L10.0 82.4 M12.8 82.1 L17.0 82.1 M19.8 82.4 L23.7 82.4 M28.0 82.4 L30.5 82.4 M34.1 82.3 L38.0 82.3 M41.3 82.0 L44.6 82.0 M47.4 82.3 L49.9 82.3 M53.6 81.9 L58.1 81.9 M61.5 82.4 L64.3 82.4 M69.2 82.2 L73.8 82.2 M76.5 82.0 L79.9 82.0 M82.4 82.0 L86.2 82.0 M88.9 82.4 L92.5 82.4 M-3.7 85.4 L-1.1 85.4 M1.7 85.0 L5.4 85.0 M10.9 85.2 L14.6 85.2 M17.9 85.5 L21.6 85.5 M25.4 85.3 L28.3 85.3 M33.6 85.3 L37.0 85.3 M42.3 85.4 L45.5 85.4 M49.6 85.0 L52.3 85.0 M57.7 85.2 L61.2 85.2 M66.6 85.3 L70.3 85.3 M73.7 85.1 L77.8 85.1 M81.7 85.3 L86.0 85.3 M88.8 85.4 L91.7 85.4 M-0.8 88.1 L4.0 88.1 M6.9 88.3 L9.5 88.3 M13.9 88.1 L18.4 88.1 M23.0 88.4 L25.7 88.4 M28.9 88.1 L32.1 88.1 M36.8 88.5 L39.5 88.5 M43.0 88.4 L46.8 88.4 M50.8 88.6 L55.3 88.6 M58.6 88.6 L61.8 88.6 M64.6 88.3 L68.0 88.3 M73.5 88.4 L76.2 88.4 M81.1 88.1 L85.2 88.1 M90.6 88.6 L93.8 88.6 M-3.4 91.6 L1.0 91.6 M4.5 91.5 L8.7 91.5 M13.4 91.6 L17.2 91.6 M20.1 91.2 L23.7 91.2 M28.7 91.7 L32.9 91.7 M35.5 91.4 L39.1 91.4 M41.9 91.7 L44.8 91.7 M49.9 91.6 L52.9 91.6 M57.4 91.5 L60.7 91.5 M63.8 91.2 L66.9 91.2 M71.4 91.6 L75.2 91.6 M79.2 91.3 L82.7 91.3 M87.4 91.5 L90.7 91.5" stroke="#5fe3e8" stroke-width="1.1" fill="none"/></g></svg><div style="left:2524.5px;top:439.9px;width:104px;text-align:center;font-size:17px;line-height:17px;color:#333;font-weight:400;white-space:nowrap;">Raised Satin</div><svg style="position:absolute;left:2634px;top:334px;" width="92" height="93" viewBox="0 0 92 93"><path d="M1.5 0.5 V92.5" stroke="#1b8c91" stroke-width="3"/><path d="M17 0.5 V92.5" stroke="#1b8c91" stroke-width="3"/><path d="M32.3 0.5 V92.5" stroke="#1b8c91" stroke-width="3"/><path d="M46.8 0.5 V92.5" stroke="#1b8c91" stroke-width="3"/><path d="M62.1 0.5 V92.5" stroke="#1b8c91" stroke-width="3"/><path d="M77.5 0.5 V92.5" stroke="#1b8c91" stroke-width="3"/><path d="M91.4 0.5 V92.5" stroke="#1b8c91" stroke-width="3"/><path d="M0 1.9 H93" stroke="#1b8c91" stroke-width="3"/><path d="M0 17.2 H93" stroke="#1b8c91" stroke-width="3"/><path d="M0 32.6 H93" stroke="#1b8c91" stroke-width="3"/><path d="M0 47.9 H93" stroke="#1b8c91" stroke-width="3"/><path d="M0 62.4 H93" stroke="#1b8c91" stroke-width="3"/><path d="M0 76.8 H93" stroke="#1b8c91" stroke-width="3"/><path d="M0 91.3 H93" stroke="#1b8c91" stroke-width="3"/></svg><div style="left:2628.5px;top:439.9px;width:104px;text-align:center;font-size:17px;line-height:17px;color:#333;font-weight:400;white-space:nowrap;">Motif</div><svg style="position:absolute;left:2320px;top:496px;" width="92" height="93" viewBox="0 0 92 93"><rect width="92" height="93" fill="#46c1c6"/><rect x="18" y="0" width="6" height="93" fill="#1d8a90"/><rect x="46" y="0" width="6" height="93" fill="#1d8a90"/><rect x="75" y="0" width="6" height="93" fill="#1d8a90"/><rect x="8" y="10" width="6" height="14" fill="#1a7f85"/><rect x="8" y="41" width="6" height="14" fill="#1a7f85"/><rect x="8" y="71" width="6" height="14" fill="#1a7f85"/><rect x="24" y="10" width="6" height="14" fill="#1a7f85"/><rect x="24" y="41" width="6" height="14" fill="#1a7f85"/><rect x="24" y="71" width="6" height="14" fill="#1a7f85"/><rect x="38" y="10" width="6" height="14" fill="#1a7f85"/><rect x="38" y="41" width="6" height="14" fill="#1a7f85"/><rect x="38" y="71" width="6" height="14" fill="#1a7f85"/><rect x="54" y="10" width="6" height="14" fill="#1a7f85"/><rect x="54" y="41" width="6" height="14" fill="#1a7f85"/><rect x="54" y="71" width="6" height="14" fill="#1a7f85"/><rect x="70" y="10" width="6" height="14" fill="#1a7f85"/><rect x="70" y="41" width="6" height="14" fill="#1a7f85"/><rect x="70" y="71" width="6" height="14" fill="#1a7f85"/><rect x="0" y="0" width="3" height="93" fill="#1d8a90"/><rect x="87" y="0" width="5" height="93" fill="#2aa0a6"/></svg><div style="left:2314.5px;top:602.2px;width:104px;text-align:center;font-size:17px;line-height:17px;color:#333;font-weight:400;white-space:nowrap;">Embossed</div><svg style="position:absolute;left:2426px;top:496px;" width="92" height="93" viewBox="0 0 92 93"><path d="M2 92 H91 V2 H2 V86 H82 V11 H12 V72 H71 V21 H21 V62 H61 V31 H30 V52 H51 V41 H40" fill="none" stroke="#1e9499" stroke-width="3.4" stroke-dasharray="6 1.5"/></svg><div style="left:2419.5px;top:602.2px;width:104px;text-align:center;font-size:17px;line-height:17px;color:#333;font-weight:400;white-space:nowrap;">Ripple</div><svg style="position:absolute;left:2530px;top:496px;" width="92" height="93" viewBox="0 0 92 93"><path d="M0.8 36.5 Q46.9 2.1 91.0 36.5" fill="none" stroke="#1e9499" stroke-width="3.2" stroke-dasharray="7 1.2"/><path d="M3.5 42.7 Q46.9 9.8 88.0 42.7" fill="none" stroke="#1e9499" stroke-width="3.2" stroke-dasharray="7 1.2"/><path d="M6.1 48.8 Q46.9 17.4 85.0 48.8" fill="none" stroke="#1e9499" stroke-width="3.2" stroke-dasharray="7 1.2"/><path d="M8.8 55.0 Q46.9 25.1 82.0 55.0" fill="none" stroke="#1e9499" stroke-width="3.2" stroke-dasharray="7 1.2"/><path d="M11.5 61.2 Q46.9 32.8 79.0 61.2" fill="none" stroke="#1e9499" stroke-width="3.2" stroke-dasharray="7 1.2"/><path d="M14.1 67.3 Q46.9 40.4 76.0 67.3" fill="none" stroke="#1e9499" stroke-width="3.2" stroke-dasharray="7 1.2"/><path d="M16.8 73.5 Q46.9 48.1 73.0 73.5" fill="none" stroke="#1e9499" stroke-width="3.2" stroke-dasharray="7 1.2"/></svg><div style="left:2524.5px;top:602.2px;width:104px;text-align:center;font-size:17px;line-height:17px;color:#333;font-weight:400;white-space:nowrap;">Contour</div><svg style="position:absolute;left:2634px;top:496px;" width="92" height="93" viewBox="0 0 92 93"><path d="M1 7.5 L87 91.6 M86 6.6 L1 91.6 M0 49 L43 6 L87 49 L43 92 Z" fill="none" stroke="#1f9599" stroke-width="7.5" stroke-linejoin="miter"/><path d="M1 7.5 L87 91.6 M86 6.6 L1 91.6 M0 49 L43 6 L87 49 L43 92 Z" fill="none" stroke="#5fd8dd" stroke-width="1.6"/></svg><div style="left:2628.5px;top:602.2px;width:104px;text-align:center;font-size:17px;line-height:17px;color:#333;font-weight:400;white-space:nowrap;">Cross Stitch</div><svg style="position:absolute;left:2320px;top:659px;" width="92" height="93" viewBox="0 0 92 93"><path d="M6.7 82.1 C6.4 78.0 20.1 61.3 20.2 55.0 C20.3 48.7 9.4 47.1 7.6 44.2 C5.8 41.4 7.0 39.3 9.4 37.9 C11.8 36.5 18.2 35.0 22.0 36.0 C25.8 37.0 29.0 39.4 32.0 44.2 C35.0 49.0 37.2 61.1 40.1 65.0 C43.0 68.9 47.0 69.1 49.1 67.7 C51.2 66.3 53.0 60.7 52.7 56.8 C52.4 52.9 49.7 47.1 47.3 44.2 C44.9 41.4 40.4 43.3 38.3 39.7 C36.2 36.1 36.8 25.7 34.7 22.5 C32.6 19.3 29.5 20.1 25.6 20.7 C21.7 21.3 14.7 26.4 11.2 26.1 C7.7 25.8 4.9 21.3 4.9 18.9 C4.9 16.5 6.5 13.5 11.2 11.7 C15.9 9.9 26.9 7.1 32.9 8.0 C38.9 8.9 43.8 12.6 47.3 17.1 C50.8 21.6 50.6 31.1 53.6 35.2 C56.6 39.3 62.2 42.1 65.4 41.5 C68.6 40.9 72.3 35.0 72.6 31.5 C72.9 28.0 70.1 23.4 67.2 20.7 C64.3 18.0 57.1 17.1 55.4 15.3 C53.7 13.5 54.0 10.8 57.2 9.9 C60.4 9.0 69.6 7.8 74.4 9.9 C79.2 12.0 84.5 17.4 86.2 22.5 C87.9 27.6 86.7 35.5 84.4 40.6 C82.1 45.7 74.9 48.7 72.6 53.2 C70.3 57.7 69.0 64.4 70.8 67.7 C72.6 71.0 81.6 70.7 83.4 73.1 C85.2 75.5 84.0 80.6 81.6 82.1 C79.2 83.6 73.5 82.4 69.0 82.1 C64.5 81.8 59.3 80.1 54.5 80.3 C49.7 80.5 45.5 83.2 40.1 83.0 C34.7 82.8 27.6 79.6 22.0 79.4 C16.4 79.2 7.0 86.2 6.7 82.1 Z" fill="none" stroke="#1f989d" stroke-width="1.5" stroke-dasharray="3 1.2"/></svg><div style="left:2314.5px;top:764.5px;width:104px;text-align:center;font-size:17px;line-height:17px;color:#333;font-weight:400;white-space:nowrap;">Stipple</div><div style="left:2314.5px;top:786.5px;width:104px;text-align:center;font-size:17px;line-height:17px;color:#333;font-weight:400;white-space:nowrap;">Single Run</div><svg style="position:absolute;left:2426px;top:659px;" width="92" height="93" viewBox="0 0 92 93"><path d="M6.7 82.1 C6.4 78.0 20.1 61.3 20.2 55.0 C20.3 48.7 9.4 47.1 7.6 44.2 C5.8 41.4 7.0 39.3 9.4 37.9 C11.8 36.5 18.2 35.0 22.0 36.0 C25.8 37.0 29.0 39.4 32.0 44.2 C35.0 49.0 37.2 61.1 40.1 65.0 C43.0 68.9 47.0 69.1 49.1 67.7 C51.2 66.3 53.0 60.7 52.7 56.8 C52.4 52.9 49.7 47.1 47.3 44.2 C44.9 41.4 40.4 43.3 38.3 39.7 C36.2 36.1 36.8 25.7 34.7 22.5 C32.6 19.3 29.5 20.1 25.6 20.7 C21.7 21.3 14.7 26.4 11.2 26.1 C7.7 25.8 4.9 21.3 4.9 18.9 C4.9 16.5 6.5 13.5 11.2 11.7 C15.9 9.9 26.9 7.1 32.9 8.0 C38.9 8.9 43.8 12.6 47.3 17.1 C50.8 21.6 50.6 31.1 53.6 35.2 C56.6 39.3 62.2 42.1 65.4 41.5 C68.6 40.9 72.3 35.0 72.6 31.5 C72.9 28.0 70.1 23.4 67.2 20.7 C64.3 18.0 57.1 17.1 55.4 15.3 C53.7 13.5 54.0 10.8 57.2 9.9 C60.4 9.0 69.6 7.8 74.4 9.9 C79.2 12.0 84.5 17.4 86.2 22.5 C87.9 27.6 86.7 35.5 84.4 40.6 C82.1 45.7 74.9 48.7 72.6 53.2 C70.3 57.7 69.0 64.4 70.8 67.7 C72.6 71.0 81.6 70.7 83.4 73.1 C85.2 75.5 84.0 80.6 81.6 82.1 C79.2 83.6 73.5 82.4 69.0 82.1 C64.5 81.8 59.3 80.1 54.5 80.3 C49.7 80.5 45.5 83.2 40.1 83.0 C34.7 82.8 27.6 79.6 22.0 79.4 C16.4 79.2 7.0 86.2 6.7 82.1 Z" fill="none" stroke="#1f989d" stroke-width="2.8" stroke-dasharray="3 1.2"/></svg><div style="left:2419.5px;top:764.5px;width:104px;text-align:center;font-size:17px;line-height:17px;color:#333;font-weight:400;white-space:nowrap;">Stipple</div><div style="left:2419.5px;top:786.5px;width:104px;text-align:center;font-size:17px;line-height:17px;color:#333;font-weight:400;white-space:nowrap;">Backstitch</div><svg style="position:absolute;left:2530px;top:659px;" width="92" height="93" viewBox="0 0 92 93"><path d="M8.4 80.0 C8.1 76.1 21.0 60.3 21.2 54.2 C21.3 48.2 10.9 46.7 9.2 44.0 C7.5 41.3 8.7 39.3 10.9 38.0 C13.2 36.7 19.3 35.2 22.9 36.2 C26.5 37.2 29.5 39.4 32.4 44.0 C35.3 48.6 37.4 60.0 40.1 63.8 C42.8 67.5 46.6 67.6 48.6 66.3 C50.6 65.0 52.3 59.7 52.1 56.0 C51.8 52.2 49.2 46.7 46.9 44.0 C44.7 41.3 40.4 43.2 38.4 39.7 C36.4 36.3 37.0 26.4 35.0 23.4 C33.0 20.4 30.0 21.1 26.3 21.7 C22.6 22.2 15.9 27.1 12.6 26.8 C9.4 26.5 6.7 22.2 6.7 20.0 C6.7 17.7 8.2 14.8 12.6 13.1 C17.1 11.4 27.5 8.7 33.3 9.6 C39.0 10.5 43.7 13.9 46.9 18.2 C50.2 22.6 50.1 31.6 52.9 35.4 C55.8 39.3 61.1 42.0 64.1 41.4 C67.1 40.8 70.7 35.2 71.0 31.9 C71.3 28.6 68.6 24.2 65.8 21.7 C63.1 19.1 56.2 18.2 54.6 16.5 C53.0 14.8 53.3 12.3 56.3 11.4 C59.3 10.5 68.1 9.4 72.7 11.4 C77.3 13.4 82.3 18.5 83.9 23.4 C85.5 28.2 84.3 35.7 82.2 40.6 C80.0 45.4 73.1 48.2 71.0 52.5 C68.8 56.8 67.5 63.2 69.3 66.3 C71.0 69.5 79.5 69.2 81.2 71.4 C82.9 73.7 81.8 78.6 79.5 80.0 C77.2 81.4 71.8 80.3 67.5 80.0 C63.3 79.7 58.4 78.1 53.8 78.3 C49.2 78.4 45.2 81.0 40.1 80.8 C34.9 80.7 28.2 77.6 22.9 77.4 C17.6 77.3 8.7 83.9 8.4 80.0 Z" fill="none" stroke="#2aa6ab" stroke-width="6" stroke-dasharray="1.2 3"/><path d="M8.4 80.0 C8.1 76.1 21.0 60.3 21.2 54.2 C21.3 48.2 10.9 46.7 9.2 44.0 C7.5 41.3 8.7 39.3 10.9 38.0 C13.2 36.7 19.3 35.2 22.9 36.2 C26.5 37.2 29.5 39.4 32.4 44.0 C35.3 48.6 37.4 60.0 40.1 63.8 C42.8 67.5 46.6 67.6 48.6 66.3 C50.6 65.0 52.3 59.7 52.1 56.0 C51.8 52.2 49.2 46.7 46.9 44.0 C44.7 41.3 40.4 43.2 38.4 39.7 C36.4 36.3 37.0 26.4 35.0 23.4 C33.0 20.4 30.0 21.1 26.3 21.7 C22.6 22.2 15.9 27.1 12.6 26.8 C9.4 26.5 6.7 22.2 6.7 20.0 C6.7 17.7 8.2 14.8 12.6 13.1 C17.1 11.4 27.5 8.7 33.3 9.6 C39.0 10.5 43.7 13.9 46.9 18.2 C50.2 22.6 50.1 31.6 52.9 35.4 C55.8 39.3 61.1 42.0 64.1 41.4 C67.1 40.8 70.7 35.2 71.0 31.9 C71.3 28.6 68.6 24.2 65.8 21.7 C63.1 19.1 56.2 18.2 54.6 16.5 C53.0 14.8 53.3 12.3 56.3 11.4 C59.3 10.5 68.1 9.4 72.7 11.4 C77.3 13.4 82.3 18.5 83.9 23.4 C85.5 28.2 84.3 35.7 82.2 40.6 C80.0 45.4 73.1 48.2 71.0 52.5 C68.8 56.8 67.5 63.2 69.3 66.3 C71.0 69.5 79.5 69.2 81.2 71.4 C82.9 73.7 81.8 78.6 79.5 80.0 C77.2 81.4 71.8 80.3 67.5 80.0 C63.3 79.7 58.4 78.1 53.8 78.3 C49.2 78.4 45.2 81.0 40.1 80.8 C34.9 80.7 28.2 77.6 22.9 77.4 C17.6 77.3 8.7 83.9 8.4 80.0 Z" fill="none" stroke="#3cb9be" stroke-width="1.3"/></svg><div style="left:2524.5px;top:764.5px;width:104px;text-align:center;font-size:17px;line-height:17px;color:#333;font-weight:400;white-space:nowrap;">Stipple</div><div style="left:2524.5px;top:786.5px;width:104px;text-align:center;font-size:17px;line-height:17px;color:#333;font-weight:400;white-space:nowrap;">Stemstitch</div><svg style="position:absolute;left:2634px;top:659px;" width="92" height="93" viewBox="0 0 92 93"><rect x="0" y="0" width="3.2" height="92" fill="#1f9ca2"/><rect x="0" y="-0.1" width="92" height="3.4" fill="#3cc2c8"/><rect x="40" y="-0.1" width="18" height="3.4" fill="#137a80"/><rect x="0" y="15.2" width="92" height="3.4" fill="#3cc2c8"/><rect x="40" y="15.2" width="18" height="3.4" fill="#137a80"/><rect x="0" y="30.5" width="92" height="3.4" fill="#3cc2c8"/><rect x="40" y="30.5" width="18" height="3.4" fill="#137a80"/><rect x="0" y="45.0" width="92" height="3.4" fill="#3cc2c8"/><rect x="40" y="45.0" width="18" height="3.4" fill="#137a80"/><rect x="0" y="60.4" width="92" height="3.4" fill="#3cc2c8"/><rect x="40" y="60.4" width="18" height="3.4" fill="#137a80"/><rect x="0" y="75.7" width="92" height="3.4" fill="#3cc2c8"/><rect x="40" y="75.7" width="18" height="3.4" fill="#137a80"/><rect x="0" y="89.1" width="92" height="3.4" fill="#3cc2c8"/><rect x="40" y="89.1" width="18" height="3.4" fill="#137a80"/></svg><div style="left:2628.5px;top:764.5px;width:104px;text-align:center;font-size:17px;line-height:17px;color:#333;font-weight:400;white-space:nowrap;">Blanket</div><svg style="position:absolute;left:2746px;top:349px;" width="24" height="446" viewBox="0 0 24 446"><defs><pattern id="dp2" width="3" height="3" patternUnits="userSpaceOnUse"><rect width="3" height="3" fill="#ececec"/><rect width="1" height="1" fill="#fafafa"/></pattern></defs><rect width="24" height="446" fill="url(#dp2)"/></svg><div style="left:2746px;top:326px;width:24px;height:24px;background:#fff;border:1px solid #c8c8c8;"></div><svg style="position:absolute;left:2752px;top:334px;" width="12" height="7" viewBox="0 0 12 7"><path d="M0 7 L6 0 L12 7 Z" fill="#888"/></svg><div style="left:2746px;top:349px;width:24px;height:335px;background:#fff;border:1px solid #c8c8c8;"></div><div style="left:2746px;top:795px;width:24px;height:25px;background:#fff;border:1px solid #c8c8c8;"></div><svg style="position:absolute;left:2752px;top:804px;" width="12" height="7" viewBox="0 0 12 7"><path d="M0 0 L6 7 L12 0 Z" fill="#777"/></svg><div style="left:2298px;top:826px;width:476px;height:1px;background:#e4e4e4;"></div><div style="left:2309px;top:842.5px;font-size:17px;line-height:17px;color:#111;font-weight:700;white-space:nowrap;">Pattern:</div><div style="left:2309px;top:874px;width:462px;height:173px;background:#ececec;border:1px solid #c0c0c0;border-right-color:#e8e8e8;"></div><svg style="position:absolute;left:2320px;top:884px;" width="92" height="93" viewBox="0 0 92 93"><defs><clipPath id="c20"><rect width="92" height="93"/></clipPath></defs><g clip-path="url(#c20)"><rect width="92" height="93" fill="#1c9398"/><path d="M-10.9 4.9 L-2.8 4.0 M2.5 3.2 L8.6 2.5 M13.9 1.7 L22.9 0.7 M25.8 0.8 L32.6 0.0 M35.3 -0.4 L41.6 -1.1 M45.5 -2.4 L51.3 -3.1 M56.6 -3.6 L63.0 -4.3 M67.4 -4.8 L76.1 -5.8 M78.7 -6.7 L86.3 -7.6 M89.0 -7.1 L94.7 -7.8 M-8.3 10.5 L-2.7 9.8 M-0.2 10.4 L8.0 9.4 M11.1 8.1 L17.0 7.3 M21.5 7.0 L27.7 6.2 M32.2 6.0 L39.9 5.1 M42.8 4.9 L50.6 4.0 M54.4 4.0 L60.0 3.3 M65.2 2.7 L73.3 1.8 M77.5 0.2 L84.0 -0.6 M88.3 -0.7 L95.6 -1.6 M-10.1 18.3 L-4.7 17.6 M-2.3 16.7 L5.6 15.7 M10.3 15.4 L19.7 14.3 M24.6 13.9 L29.6 13.3 M32.4 12.5 L39.4 11.7 M42.0 11.1 L50.4 10.1 M53.6 10.4 L58.8 9.7 M62.2 8.6 L67.2 8.0 M70.3 7.6 L77.5 6.7 M80.0 7.0 L88.0 6.1 M90.9 5.3 L97.2 4.5 M-4.7 23.4 L1.2 22.7 M4.3 22.8 L10.6 22.0 M15.8 21.3 L23.7 20.3 M26.1 20.3 L31.8 19.6 M35.5 19.5 L44.4 18.4 M47.7 17.3 L54.3 16.5 M58.8 15.9 L64.1 15.3 M69.3 15.5 L75.9 14.7 M79.6 13.7 L88.4 12.6 M91.1 12.0 L98.7 11.1 M-8.4 31.4 L-1.1 30.5 M3.1 29.8 L12.5 28.6 M15.5 28.4 L21.7 27.7 M24.4 26.4 L33.9 25.3 M38.7 25.1 L46.5 24.2 M50.8 23.6 L58.4 22.7 M61.7 22.7 L66.8 22.1 M72.0 21.7 L78.6 20.9 M82.3 20.4 L88.3 19.7 M-1.1 36.5 L7.9 35.4 M12.8 35.6 L19.0 34.8 M22.4 33.3 L28.2 32.6 M31.1 33.2 L36.3 32.6 M38.8 31.6 L44.1 30.9 M47.0 30.3 L55.5 29.3 M60.1 28.9 L66.6 28.1 M69.7 27.9 L77.0 27.0 M80.7 26.9 L87.3 26.1 M92.0 25.6 L98.2 24.9 M-3.6 43.1 L4.9 42.1 M8.9 41.7 L15.4 40.9 M19.9 40.8 L28.8 39.7 M32.3 39.9 L41.5 38.8 M45.9 37.8 L53.4 36.9 M58.0 36.3 L66.1 35.3 M70.9 34.8 L79.3 33.8 M83.4 32.8 L89.9 32.0 M-3.7 49.9 L3.4 49.0 M8.7 49.2 L14.1 48.6 M18.3 48.1 L27.5 47.0 M30.4 46.8 L36.5 46.0 M41.1 44.6 L46.3 44.0 M49.0 43.4 L55.2 42.7 M57.8 42.9 L62.8 42.3 M67.5 41.9 L74.7 41.1 M79.2 40.6 L84.6 39.9 M88.6 39.7 L95.5 38.9 M-8.2 57.4 L0.3 56.4 M3.2 55.8 L8.9 55.1 M11.9 54.5 L18.6 53.7 M23.5 53.8 L32.0 52.8 M34.8 52.8 L40.6 52.1 M45.8 51.4 L54.1 50.4 M57.2 49.5 L63.3 48.8 M67.3 48.1 L73.8 47.3 M78.8 47.1 L84.5 46.4 M89.5 45.5 L95.0 44.9 M-3.4 64.0 L5.8 62.9 M8.6 62.2 L13.7 61.6 M17.7 61.4 L22.7 60.8 M27.9 59.3 L35.4 58.4 M38.4 58.7 L47.2 57.7 M51.1 56.4 L60.3 55.3 M64.9 55.7 L73.7 54.7 M76.4 54.0 L84.6 53.0 M89.0 53.0 L94.6 52.3 M-1.4 70.0 L6.0 69.1 M9.9 68.3 L16.3 67.5 M21.0 67.2 L28.3 66.3 M32.3 66.4 L38.5 65.6 M43.3 64.3 L49.4 63.6 M53.5 63.8 L61.3 62.9 M66.7 62.2 L71.8 61.6 M74.2 61.2 L81.8 60.3 M84.8 59.1 L90.7 58.4 M-10.0 77.9 L-5.2 77.3 M-1.6 76.7 L7.7 75.5 M11.6 75.4 L17.8 74.7 M21.7 74.0 L29.8 73.0 M34.8 71.7 L41.1 71.0 M44.1 70.6 L51.9 69.7 M54.4 70.1 L60.9 69.3 M63.8 68.3 L70.0 67.5 M75.6 67.9 L84.7 66.8 M89.2 65.4 L95.8 64.6 M-9.4 83.7 L-2.0 82.8 M3.3 82.1 L12.2 81.0 M14.9 81.2 L22.1 80.4 M27.1 80.4 L33.0 79.7 M36.5 79.2 L42.0 78.6 M46.8 77.0 L55.4 76.0 M60.9 75.7 L67.2 74.9 M72.4 73.8 L77.7 73.1 M82.1 73.7 L89.4 72.9 M-4.4 89.6 L4.0 88.6 M8.7 88.4 L15.7 87.6 M19.0 87.3 L26.0 86.5 M29.4 85.6 L34.3 85.0 M36.8 85.2 L45.7 84.1 M49.5 83.2 L58.7 82.1 M63.8 81.9 L72.8 80.9 M77.5 80.3 L82.4 79.7 M84.9 80.1 L93.2 79.1" stroke="#137a80" stroke-width="2.6" fill="none"/><path d="M-7.5 3.7 L-0.6 2.8 M5.0 2.4 L11.6 1.6 M16.2 2.0 L25.0 0.9 M29.9 0.3 L40.6 -1.0 M44.6 -2.4 L50.4 -3.1 M56.8 -3.0 L65.4 -4.0 M72.3 -5.3 L81.2 -6.4 M84.5 -6.5 L90.0 -7.1 M-10.7 11.5 L-2.2 10.4 M3.3 9.1 L13.6 7.9 M18.5 8.1 L25.6 7.3 M32.1 5.6 L38.9 4.8 M42.9 5.1 L49.9 4.3 M54.6 3.2 L64.0 2.0 M69.1 1.8 L75.5 1.1 M80.6 0.8 L90.7 -0.4 M-1.0 17.3 L9.5 16.0 M14.4 15.4 L22.4 14.4 M26.4 13.7 L33.2 12.9 M38.9 12.3 L48.0 11.2 M53.1 9.9 L60.7 9.0 M64.6 8.8 L72.0 7.9 M78.0 7.3 L86.7 6.2 M91.2 5.5 L100.0 4.5 M-9.0 24.2 L0.1 23.1 M5.2 23.2 L14.5 22.1 M19.6 21.1 L26.8 20.3 M30.2 19.1 L37.4 18.2 M42.6 18.0 L49.4 17.2 M55.6 16.0 L64.4 15.0 M69.2 15.3 L74.6 14.7 M79.6 13.4 L89.6 12.2 M-1.9 30.0 L8.1 28.8 M11.4 28.9 L21.8 27.7 M25.6 26.8 L34.1 25.8 M37.6 25.9 L45.3 25.0 M49.9 24.2 L59.4 23.1 M65.4 22.5 L74.1 21.5 M78.5 20.4 L86.5 19.5 M89.9 19.4 L97.9 18.5 M-2.5 36.8 L4.2 36.0 M7.7 35.9 L14.1 35.1 M17.6 34.0 L23.6 33.3 M28.6 33.3 L34.2 32.7 M39.4 32.1 L48.9 31.0 M54.8 29.7 L63.0 28.7 M68.4 28.0 L74.6 27.3 M80.4 26.5 L89.0 25.4 M-8.4 44.4 L-1.8 43.6 M1.8 42.9 L8.1 42.1 M12.2 41.6 L21.5 40.5 M25.7 40.5 L35.5 39.3 M41.6 37.9 L47.6 37.2 M51.0 37.0 L60.5 35.9 M63.8 35.0 L74.3 33.8 M77.5 33.8 L87.7 32.6 M-8.2 50.8 L-2.1 50.1 M3.9 49.7 L9.4 49.0 M13.8 47.9 L22.0 47.0 M28.2 46.4 L36.2 45.4 M39.4 44.7 L48.8 43.6 M54.2 42.8 L59.6 42.2 M65.1 42.1 L72.0 41.3 M77.8 40.5 L85.1 39.6 M89.7 39.5 L95.3 38.8 M-12.2 58.1 L-3.3 57.0 M0.1 56.4 L8.9 55.3 M13.0 54.5 L19.0 53.8 M22.3 53.7 L31.3 52.6 M34.8 52.7 L43.2 51.7 M49.9 50.6 L55.8 49.9 M61.2 49.0 L69.2 48.0 M74.1 47.4 L81.3 46.6 M85.1 46.7 L94.2 45.6 M-5.2 63.4 L1.4 62.6 M4.5 62.1 L13.5 61.1 M18.5 61.1 L28.6 59.9 M34.1 59.1 L43.7 58.0 M50.0 56.8 L58.7 55.7 M61.9 55.2 L72.4 54.0 M77.5 54.2 L87.7 53.0 M-0.7 69.9 L4.9 69.2 M8.3 68.5 L14.9 67.7 M21.1 67.6 L30.9 66.4 M37.4 64.9 L47.5 63.7 M54.5 63.5 L61.8 62.6 M68.0 62.1 L74.6 61.3 M80.1 60.0 L89.2 58.9 M-2.8 77.0 L4.4 76.1 M10.9 75.2 L19.4 74.2 M22.6 73.3 L30.6 72.4 M34.8 72.2 L42.4 71.3 M46.6 70.3 L55.9 69.2 M59.1 69.3 L68.3 68.2 M75.2 67.5 L83.9 66.4 M89.2 65.8 L95.2 65.1 M-1.9 82.7 L4.4 81.9 M8.6 82.0 L16.1 81.1 M22.5 79.9 L28.3 79.2 M31.4 79.2 L39.4 78.3 M42.4 77.6 L49.6 76.8 M53.2 76.1 L60.9 75.2 M64.6 75.0 L71.4 74.2 M76.2 74.1 L83.5 73.2 M87.8 72.1 L95.4 71.1 M-11.8 91.4 L-5.8 90.7 M-0.2 90.2 L9.9 89.0 M16.1 87.7 L25.7 86.5 M30.3 86.2 L38.7 85.2 M43.3 84.5 L54.0 83.2 M58.6 82.6 L68.2 81.5 M72.8 81.2 L80.1 80.3 M84.0 79.4 L93.5 78.2" stroke="#52d3d9" stroke-width="1.5" fill="none"/></g></svg><div style="left:2346.5px;top:990.2px;width:40px;text-align:center;font-size:17px;line-height:17px;color:#333;font-weight:400;white-space:nowrap;">1</div><svg style="position:absolute;left:2426px;top:884px;" width="92" height="93" viewBox="0 0 92 93"><defs><clipPath id="c21"><rect width="92" height="93"/></clipPath></defs><g clip-path="url(#c21)"><rect width="92" height="93" fill="#1c9398"/><path d="M-2.0 3.4 L6.1 3.8 M10.1 4.2 L15.9 4.5 M20.9 4.4 L28.1 4.7 M31.3 4.7 L36.1 5.0 M40.4 5.7 L45.5 6.0 M48.7 5.2 L54.6 5.5 M60.2 6.8 L68.5 7.2 M72.9 6.8 L77.9 7.0 M81.8 8.0 L87.2 8.2 M90.8 8.2 L96.3 8.5 M-11.1 9.5 L-4.2 9.8 M-0.7 9.6 L6.5 9.9 M9.0 10.1 L17.9 10.5 M22.8 11.7 L28.6 12.0 M33.9 12.0 L42.3 12.4 M46.6 11.8 L54.9 12.3 M58.8 12.5 L67.6 13.0 M72.9 13.5 L82.0 14.0 M85.6 14.1 L92.5 14.5 M-4.6 15.9 L0.3 16.1 M5.0 16.9 L14.6 17.3 M18.5 17.8 L26.0 18.2 M29.1 18.1 L36.8 18.5 M41.2 18.3 L46.9 18.6 M50.4 18.9 L59.6 19.4 M63.9 19.3 L70.2 19.6 M72.8 20.6 L81.5 21.0 M85.1 21.1 L93.2 21.5 M-11.5 23.3 L-4.7 23.6 M0.7 23.7 L8.4 24.1 M12.3 23.6 L18.9 23.9 M24.1 23.9 L29.7 24.2 M34.7 25.0 L43.2 25.4 M48.3 25.4 L53.3 25.6 M56.7 25.7 L63.5 26.0 M66.1 27.0 L72.5 27.4 M78.1 27.1 L86.5 27.5 M89.7 27.8 L99.1 28.2 M-0.3 30.3 L5.5 30.6 M10.4 30.5 L19.5 31.0 M23.2 31.5 L30.8 31.9 M34.2 31.3 L41.6 31.7 M46.4 32.4 L51.3 32.7 M56.7 32.8 L61.6 33.1 M66.1 33.3 L75.0 33.7 M78.2 34.4 L84.9 34.7 M90.2 33.9 L95.7 34.2 M-0.3 36.1 L6.6 36.4 M11.8 36.7 L19.8 37.1 M23.9 37.7 L30.2 38.0 M33.3 37.8 L38.9 38.1 M42.6 38.7 L50.8 39.1 M53.3 39.6 L61.5 40.1 M66.4 39.3 L75.0 39.7 M78.9 40.8 L84.0 41.1 M86.9 40.6 L95.2 41.0 M-3.8 42.9 L1.2 43.1 M4.6 43.2 L13.8 43.6 M17.8 44.6 L25.2 45.0 M27.9 44.6 L35.6 45.0 M40.3 45.0 L49.8 45.4 M54.4 46.0 L61.8 46.3 M64.4 47.0 L73.1 47.4 M76.6 47.6 L82.9 47.9 M85.7 47.0 L90.8 47.2 M-9.1 49.5 L-2.2 49.9 M0.3 49.8 L8.2 50.2 M12.2 50.3 L18.9 50.6 M22.0 50.8 L27.1 51.1 M30.3 51.7 L38.4 52.1 M43.2 51.7 L50.1 52.0 M53.8 52.7 L60.9 53.0 M66.4 53.1 L71.6 53.4 M75.6 54.1 L83.8 54.5 M88.7 54.6 L96.5 55.0 M-10.3 56.2 L-2.2 56.6 M1.0 56.4 L10.2 56.8 M14.6 57.8 L23.4 58.2 M28.9 57.7 L33.8 57.9 M37.2 57.9 L43.8 58.2 M48.0 58.6 L53.2 58.9 M58.6 59.3 L67.0 59.8 M69.7 60.2 L79.1 60.7 M82.2 60.7 L88.6 61.1 M-3.1 62.7 L6.2 63.2 M9.4 63.2 L18.3 63.6 M22.9 64.4 L28.6 64.7 M31.9 65.2 L38.6 65.6 M42.4 65.4 L49.3 65.7 M52.6 65.6 L58.3 65.9 M61.6 66.7 L67.3 67.0 M69.8 67.1 L78.5 67.6 M83.1 67.3 L88.0 67.5 M90.5 67.9 L98.2 68.3 M-0.1 69.3 L7.3 69.6 M10.7 70.8 L17.7 71.1 M21.3 71.2 L26.7 71.4 M31.8 70.8 L39.1 71.2 M42.1 71.9 L48.8 72.3 M51.9 72.8 L60.6 73.2 M66.0 72.5 L75.0 72.9 M79.3 74.2 L84.5 74.5 M89.2 73.8 L97.7 74.3 M-9.8 76.0 L-2.1 76.4 M1.8 76.3 L10.5 76.7 M13.7 76.8 L20.2 77.2 M24.6 77.1 L33.7 77.6 M36.3 78.4 L43.6 78.8 M46.6 78.2 L52.7 78.5 M55.2 79.4 L62.4 79.7 M66.9 79.3 L72.4 79.5 M77.8 80.2 L85.2 80.5 M89.8 80.9 L98.1 81.3 M-9.9 82.0 L-4.1 82.3 M-0.6 83.2 L6.8 83.5 M9.7 83.5 L17.9 83.9 M20.9 84.4 L29.7 84.9 M35.0 84.4 L43.1 84.9 M48.0 85.5 L57.1 85.9 M62.4 86.0 L71.9 86.5 M77.3 87.3 L86.6 87.7 M89.0 87.6 L95.5 87.9 M-9.1 88.8 L-1.2 89.2 M4.2 90.3 L11.6 90.7 M14.7 90.5 L24.2 91.0 M29.1 91.6 L37.5 92.0 M41.0 91.6 L46.2 91.9 M49.2 92.5 L56.6 92.9 M60.2 92.1 L65.6 92.4 M69.3 92.6 L76.9 93.0 M81.5 93.3 L87.3 93.6" stroke="#137a80" stroke-width="2.6" fill="none"/><path d="M-0.2 3.2 L5.8 3.5 M11.6 3.4 L17.7 3.7 M21.6 4.0 L31.1 4.5 M37.1 4.7 L46.1 5.2 M51.2 5.8 L59.0 6.2 M66.0 6.0 L71.9 6.3 M78.7 6.9 L86.3 7.3 M90.6 8.4 L98.0 8.8 M-3.0 9.9 L5.5 10.3 M12.3 10.4 L22.3 10.9 M26.1 11.9 L36.0 12.4 M39.1 12.4 L48.5 12.8 M54.1 13.0 L60.7 13.4 M66.6 13.5 L73.0 13.8 M76.9 13.6 L82.5 13.9 M86.9 14.5 L94.4 14.9 M-13.5 16.5 L-2.8 17.1 M3.4 16.4 L10.4 16.7 M15.9 17.6 L24.3 18.0 M27.6 18.5 L34.1 18.8 M39.5 18.1 L48.6 18.6 M53.2 19.4 L63.6 20.0 M70.5 20.1 L77.0 20.4 M83.2 21.1 L91.0 21.5 M-1.7 23.7 L4.3 24.0 M7.8 23.4 L14.2 23.8 M20.1 24.2 L30.1 24.7 M35.1 24.7 L44.7 25.2 M49.2 25.9 L57.9 26.3 M61.1 25.9 L67.1 26.2 M73.0 27.5 L82.1 27.9 M88.2 28.0 L95.0 28.3 M-4.9 29.5 L0.6 29.8 M4.7 29.6 L11.1 29.9 M14.6 30.1 L24.6 30.6 M30.1 31.0 L36.6 31.4 M42.9 31.7 L49.9 32.0 M54.7 32.7 L63.9 33.1 M70.3 33.4 L77.9 33.8 M83.7 34.3 L91.6 34.7 M-1.9 36.8 L4.2 37.1 M10.2 37.3 L20.7 37.8 M26.0 38.3 L32.3 38.6 M35.8 37.9 L43.5 38.3 M48.0 38.8 L55.0 39.2 M60.9 39.3 L69.2 39.7 M75.3 40.7 L84.7 41.2 M87.8 41.4 L96.5 41.8 M-2.8 42.9 L7.0 43.4 M11.6 43.6 L21.4 44.1 M25.2 44.3 L31.7 44.6 M37.5 45.4 L44.9 45.7 M48.2 45.7 L54.9 46.1 M59.8 46.7 L67.9 47.1 M72.1 46.2 L78.4 46.5 M83.4 47.3 L90.4 47.7 M-0.0 50.1 L7.4 50.5 M11.6 50.5 L22.0 51.0 M26.6 50.8 L36.2 51.3 M41.6 52.0 L51.6 52.4 M55.9 52.7 L61.8 53.0 M65.5 53.1 L72.9 53.5 M79.7 53.8 L88.7 54.3 M-4.3 56.5 L3.2 56.8 M8.4 56.8 L15.0 57.1 M21.3 57.8 L28.0 58.1 M31.2 58.2 L41.7 58.8 M46.0 59.1 L56.7 59.7 M60.0 59.5 L66.7 59.8 M73.7 59.6 L79.9 59.9 M84.1 60.6 L89.8 60.8 M-6.2 62.2 L-0.0 62.5 M6.2 63.4 L14.0 63.8 M18.9 64.5 L28.0 65.0 M34.3 64.6 L43.6 65.1 M47.3 65.9 L53.2 66.2 M56.4 66.4 L64.9 66.8 M69.2 66.5 L76.7 66.8 M83.5 67.7 L92.6 68.1 M-10.2 69.1 L-2.4 69.5 M3.9 70.4 L13.2 70.9 M19.2 70.6 L29.5 71.1 M34.7 71.4 L44.4 71.9 M47.9 72.6 L56.5 73.0 M63.0 72.8 L69.0 73.1 M73.0 73.9 L80.2 74.3 M84.9 73.7 L92.0 74.1 M-9.4 75.5 L-2.1 75.9 M1.8 77.0 L8.6 77.3 M12.3 76.5 L21.7 77.0 M27.9 78.1 L34.7 78.5 M39.4 77.9 L45.3 78.2 M51.5 78.9 L59.8 79.4 M64.2 79.6 L73.3 80.0 M76.6 80.0 L85.2 80.4 M91.6 81.3 L100.0 81.7 M-9.9 83.0 L-1.2 83.4 M5.3 83.4 L13.7 83.8 M19.8 84.1 L26.6 84.4 M32.8 84.7 L41.4 85.2 M47.8 85.1 L58.5 85.7 M61.8 85.7 L70.5 86.1 M77.3 86.9 L85.3 87.3 M91.6 87.2 L101.7 87.7 M-2.5 89.1 L5.4 89.5 M11.9 90.1 L19.2 90.5 M25.8 90.8 L35.6 91.3 M40.6 91.3 L49.6 91.8 M53.2 91.9 L63.2 92.4 M69.0 93.2 L78.4 93.7 M82.8 94.2 L92.8 94.7" stroke="#52d3d9" stroke-width="1.5" fill="none"/></g></svg><div style="left:2451.5px;top:990.2px;width:40px;text-align:center;font-size:17px;line-height:17px;color:#333;font-weight:400;white-space:nowrap;">2</div><svg style="position:absolute;left:2530px;top:884px;" width="92" height="93" viewBox="0 0 92 93"><defs><clipPath id="c22"><rect width="92" height="93"/></clipPath></defs><g clip-path="url(#c22)"><rect width="92" height="93" fill="#1c9398"/><path d="M-11.5 2.7 L-6.0 2.7 M-0.4 2.9 L5.3 2.9 M9.7 3.8 L16.2 3.8 M19.3 3.1 L28.7 3.1 M33.1 3.5 L42.3 3.5 M47.7 2.8 L55.9 2.8 M61.1 3.1 L68.7 3.1 M71.8 3.4 L80.6 3.4 M86.0 3.9 L94.6 3.9 M-8.4 9.7 L-0.6 9.7 M4.8 10.3 L11.1 10.3 M16.6 9.5 L24.5 9.5 M29.5 9.6 L37.5 9.6 M40.1 9.4 L47.5 9.4 M52.8 10.0 L60.0 10.0 M63.8 10.5 L71.7 10.5 M75.1 10.1 L81.7 10.1 M85.1 10.0 L92.7 10.0 M-8.1 16.1 L-0.7 16.1 M4.8 16.5 L11.4 16.5 M15.0 17.1 L24.3 17.1 M28.3 16.1 L35.1 16.1 M40.3 16.7 L46.0 16.7 M49.5 16.4 L55.8 16.4 M58.9 16.6 L63.8 16.6 M68.8 16.2 L76.7 16.2 M81.3 16.5 L86.4 16.5 M91.4 16.6 L100.6 16.6 M-6.0 23.4 L1.3 23.4 M6.9 23.2 L15.3 23.2 M20.0 23.1 L27.9 23.1 M32.8 23.4 L41.5 23.4 M47.0 23.3 L51.8 23.3 M56.3 22.9 L62.7 22.9 M67.3 23.0 L74.2 23.0 M76.7 23.1 L86.2 23.1 M89.0 23.0 L94.8 23.0 M-2.2 29.4 L4.0 29.4 M7.9 29.7 L13.7 29.7 M18.4 30.3 L27.7 30.3 M30.2 30.3 L36.8 30.3 M39.3 29.9 L45.1 29.9 M48.7 30.2 L57.1 30.2 M61.0 29.6 L67.0 29.6 M70.2 30.1 L75.3 30.1 M78.2 30.1 L87.3 30.1 M89.9 30.0 L97.1 30.0 M-5.8 36.9 L-0.9 36.9 M1.5 37.1 L9.3 37.1 M14.5 36.6 L20.4 36.6 M23.2 37.0 L29.7 37.0 M34.7 36.4 L39.5 36.4 M44.0 36.9 L49.6 36.9 M54.9 36.4 L62.3 36.4 M67.4 36.2 L74.7 36.2 M78.0 36.9 L83.6 36.9 M87.6 36.9 L95.7 36.9 M-2.3 43.6 L4.5 43.6 M9.3 43.4 L16.0 43.4 M19.0 42.6 L24.6 42.6 M28.2 43.2 L34.1 43.2 M39.6 43.2 L45.1 43.2 M50.3 43.2 L58.0 43.2 M62.8 43.7 L67.7 43.7 M72.3 43.6 L81.0 43.6 M83.7 42.8 L88.8 42.8 M-11.3 49.7 L-2.1 49.7 M2.3 49.6 L10.6 49.6 M16.2 50.1 L25.5 50.1 M30.8 50.0 L39.4 50.0 M42.8 49.5 L49.0 49.5 M51.6 49.6 L60.8 49.6 M63.3 49.3 L69.6 49.3 M73.4 49.4 L79.8 49.4 M83.7 49.6 L90.5 49.6 M-3.7 56.9 L3.7 56.9 M9.2 55.9 L15.8 55.9 M21.2 56.1 L28.5 56.1 M31.3 56.2 L37.3 56.2 M40.1 57.1 L45.1 57.1 M50.2 56.4 L55.5 56.4 M60.5 55.9 L67.7 55.9 M71.2 57.0 L77.8 57.0 M82.1 56.6 L89.1 56.6 M91.6 56.8 L99.7 56.8 M-4.3 62.5 L1.8 62.5 M4.5 63.1 L10.0 63.1 M14.9 63.1 L20.8 63.1 M25.2 62.5 L33.0 62.5 M38.4 62.9 L46.0 62.9 M49.2 63.6 L57.3 63.6 M60.7 63.2 L67.5 63.2 M70.4 63.6 L77.2 63.6 M81.3 62.8 L90.1 62.8 M-9.4 69.8 L-3.5 69.8 M1.1 69.9 L8.6 69.9 M11.8 69.6 L19.2 69.6 M24.2 70.3 L30.8 70.3 M35.0 69.6 L40.9 69.6 M43.8 69.2 L52.1 69.2 M56.4 70.1 L62.7 70.1 M65.5 70.0 L73.6 70.0 M76.7 69.6 L82.1 69.6 M86.6 69.2 L92.7 69.2 M-9.7 76.9 L-4.1 76.9 M-0.1 75.9 L5.5 75.9 M9.0 76.0 L16.1 76.0 M18.8 76.1 L26.0 76.1 M29.8 76.6 L36.8 76.6 M41.0 76.0 L46.9 76.0 M52.1 75.9 L57.1 75.9 M59.7 76.4 L68.5 76.4 M73.9 76.2 L81.7 76.2 M85.4 76.1 L93.8 76.1 M-4.9 82.8 L0.1 82.8 M4.3 83.5 L9.8 83.5 M15.2 83.5 L22.4 83.5 M27.0 82.6 L34.4 82.6 M39.9 83.0 L49.1 83.0 M52.7 83.2 L57.9 83.2 M63.0 82.8 L69.7 82.8 M74.0 82.6 L82.6 82.6 M85.9 82.5 L93.8 82.5 M-3.8 89.6 L5.0 89.6 M7.9 89.2 L12.8 89.2 M16.1 90.0 L24.5 90.0 M28.9 89.9 L35.2 89.9 M39.9 89.2 L46.5 89.2 M50.4 89.3 L56.3 89.3 M59.9 90.2 L65.1 90.2 M68.4 90.0 L77.5 90.0 M79.9 90.0 L89.0 90.0" stroke="#137a80" stroke-width="2.6" fill="none"/><path d="M-1.1 3.1 L5.5 3.1 M12.1 3.6 L20.2 3.6 M23.6 3.7 L31.7 3.7 M36.8 3.8 L47.3 3.8 M51.8 3.6 L57.2 3.6 M60.7 3.6 L66.1 3.6 M72.5 3.9 L82.4 3.9 M86.2 2.9 L92.1 2.9 M-1.6 9.4 L4.7 9.4 M7.9 9.8 L13.5 9.8 M17.2 10.5 L24.2 10.5 M27.9 10.3 L37.7 10.3 M43.0 10.3 L51.5 10.3 M56.8 9.8 L63.5 9.8 M67.4 10.5 L75.0 10.5 M79.7 9.9 L85.5 9.9 M91.7 10.2 L99.5 10.2 M-0.9 16.1 L8.1 16.1 M12.3 16.2 L19.8 16.2 M22.9 17.1 L28.4 17.1 M34.1 16.6 L44.7 16.6 M51.5 16.7 L61.5 16.7 M66.6 16.3 L74.8 16.3 M79.3 16.2 L88.6 16.2 M-7.1 23.6 L1.5 23.6 M7.1 22.9 L13.3 22.9 M16.3 23.8 L21.8 23.8 M27.2 23.6 L37.8 23.6 M42.1 23.8 L52.7 23.8 M57.5 23.0 L63.4 23.0 M67.0 22.7 L74.4 22.7 M80.3 22.9 L91.0 22.9 M-8.2 30.4 L-0.2 30.4 M4.3 29.3 L14.2 29.3 M21.0 29.3 L27.4 29.3 M33.9 30.1 L43.2 30.1 M49.3 29.4 L56.7 29.4 M61.0 30.5 L71.6 30.5 M75.5 29.8 L83.3 29.8 M89.9 30.3 L95.3 30.3 M-7.7 36.0 L-1.6 36.0 M4.9 37.1 L13.1 37.1 M19.5 36.0 L29.0 36.0 M34.3 36.5 L45.1 36.5 M48.4 37.1 L54.8 37.1 M61.7 36.3 L68.4 36.3 M74.3 36.2 L82.4 36.2 M89.3 36.4 L98.1 36.4 M-7.1 42.8 L2.3 42.8 M5.7 43.7 L15.0 43.7 M19.5 43.3 L27.4 43.3 M32.5 42.9 L38.6 42.9 M42.4 42.7 L48.9 42.7 M53.5 43.6 L60.0 43.6 M64.3 43.6 L74.9 43.6 M79.0 43.3 L85.2 43.3 M90.1 42.7 L98.4 42.7 M-10.6 49.5 L-2.8 49.5 M3.9 50.4 L10.9 50.4 M16.6 49.8 L22.0 49.8 M25.6 49.7 L35.3 49.7 M38.6 50.2 L49.2 50.2 M54.6 49.3 L63.1 49.3 M70.0 49.9 L77.0 49.9 M82.0 49.2 L89.9 49.2 M-6.9 56.9 L0.6 56.9 M7.1 57.0 L16.4 57.0 M20.8 56.3 L26.7 56.3 M32.1 56.7 L41.8 56.7 M47.3 56.7 L55.9 56.7 M61.2 56.5 L66.7 56.5 M70.8 56.6 L76.6 56.6 M83.0 56.7 L89.9 56.7 M-9.5 63.3 L0.6 63.3 M3.9 62.9 L12.6 62.9 M17.3 62.7 L26.3 62.7 M31.8 62.6 L42.3 62.6 M48.7 63.0 L57.9 63.0 M64.0 62.7 L69.8 62.7 M76.8 62.7 L85.6 62.7 M89.1 63.2 L96.9 63.2 M-2.6 69.7 L6.2 69.7 M11.5 69.3 L21.9 69.3 M28.3 69.5 L37.6 69.5 M41.1 70.2 L50.5 70.2 M54.9 69.8 L61.1 69.8 M66.8 69.6 L74.1 69.6 M77.5 69.4 L83.7 69.4 M89.7 69.4 L95.8 69.4 M-2.9 76.7 L3.8 76.7 M7.7 75.9 L16.1 75.9 M21.2 76.3 L30.4 76.3 M34.1 76.1 L39.7 76.1 M44.3 76.3 L50.3 76.3 M55.3 76.6 L61.0 76.6 M67.9 76.3 L77.1 76.3 M83.4 76.9 L93.9 76.9 M-10.7 83.3 L-0.2 83.3 M4.1 83.0 L10.2 83.0 M16.0 82.9 L22.9 82.9 M26.2 82.7 L31.8 82.7 M38.2 82.6 L43.9 82.6 M48.5 82.7 L59.2 82.7 M62.3 82.8 L68.0 82.8 M71.0 82.5 L80.0 82.5 M83.8 82.8 L89.6 82.8 M-2.3 89.4 L4.1 89.4 M9.7 89.3 L17.1 89.3 M20.1 90.1 L30.2 90.1 M37.0 89.6 L46.2 89.6 M50.5 89.6 L57.0 89.6 M61.7 89.3 L72.1 89.3 M77.9 89.9 L87.3 89.9" stroke="#52d3d9" stroke-width="1.5" fill="none"/></g></svg><div style="left:2556.5px;top:990.2px;width:40px;text-align:center;font-size:17px;line-height:17px;color:#333;font-weight:400;white-space:nowrap;">3</div><svg style="position:absolute;left:2634px;top:884px;" width="92" height="93" viewBox="0 0 92 93"><defs><clipPath id="c23"><rect width="92" height="93"/></clipPath></defs><g clip-path="url(#c23)"><rect width="92" height="93" fill="#1c9398"/><path d="M-11.1 3.6 L-1.7 3.8 M0.9 3.2 L8.6 3.4 M12.7 3.2 L18.1 3.3 M21.9 3.7 L27.8 3.8 M30.2 4.2 L35.5 4.3 M39.2 4.4 L46.5 4.5 M50.0 4.7 L55.1 4.8 M59.4 4.7 L67.3 4.8 M72.8 5.1 L79.4 5.2 M83.0 5.2 L90.5 5.3 M-1.0 10.2 L6.0 10.3 M10.3 10.3 L17.3 10.5 M20.3 10.2 L25.9 10.3 M30.9 10.1 L36.7 10.2 M39.4 10.5 L44.4 10.6 M48.6 10.7 L57.3 10.9 M60.9 10.9 L67.1 11.1 M72.0 11.1 L79.4 11.3 M82.2 11.9 L90.7 12.0 M-2.9 17.1 L4.6 17.2 M8.9 16.4 L18.2 16.6 M23.7 17.0 L28.8 17.1 M31.3 17.5 L39.9 17.6 M45.5 18.1 L54.1 18.2 M58.2 18.1 L67.8 18.3 M71.3 17.9 L80.8 18.1 M83.8 18.2 L89.0 18.3 M92.0 19.0 L101.3 19.2 M-1.2 22.8 L6.1 23.0 M10.2 23.2 L18.9 23.3 M22.7 23.6 L31.8 23.8 M35.3 24.3 L44.4 24.5 M49.7 24.1 L57.8 24.3 M62.4 24.7 L71.2 24.8 M74.3 24.6 L80.5 24.8 M85.4 25.0 L92.9 25.2 M-1.3 29.7 L6.5 29.8 M10.7 29.8 L19.5 30.0 M25.0 30.5 L30.2 30.6 M34.3 30.7 L40.2 30.8 M44.1 31.0 L51.1 31.2 M53.5 31.3 L60.1 31.4 M63.0 30.8 L71.9 31.0 M76.5 31.4 L82.1 31.5 M85.9 31.8 L91.1 32.0 M-8.3 36.4 L-0.9 36.6 M3.2 37.1 L9.4 37.2 M12.1 37.2 L21.1 37.4 M25.1 37.2 L33.6 37.4 M38.0 37.1 L44.2 37.2 M47.7 38.0 L53.9 38.2 M57.4 37.6 L64.1 37.7 M69.1 38.0 L76.2 38.1 M79.4 37.6 L85.6 37.8 M88.6 38.7 L94.7 38.9 M-1.3 42.7 L5.7 42.8 M9.9 43.8 L16.8 43.9 M20.1 43.3 L28.9 43.5 M34.5 43.3 L42.3 43.5 M47.3 44.0 L53.4 44.1 M56.3 43.8 L65.1 44.0 M69.9 44.8 L76.6 44.9 M79.9 45.3 L85.1 45.4 M89.6 45.5 L95.2 45.7 M-2.2 49.9 L2.7 50.0 M5.5 49.9 L13.9 50.1 M18.5 50.5 L26.1 50.7 M31.1 50.6 L38.8 50.7 M42.2 50.2 L47.7 50.3 M52.8 50.8 L58.6 50.9 M62.0 51.1 L69.8 51.3 M74.9 51.2 L81.8 51.3 M86.3 52.1 L94.7 52.2 M-10.6 56.8 L-1.1 57.0 M1.7 56.8 L8.3 57.0 M13.4 56.6 L18.4 56.7 M23.1 57.0 L31.5 57.1 M34.6 56.6 L41.3 56.8 M44.8 57.7 L51.6 57.9 M55.9 57.3 L62.7 57.4 M66.1 57.7 L74.1 57.9 M77.1 58.1 L85.8 58.3 M91.3 58.4 L98.7 58.6 M-7.3 63.5 L1.9 63.7 M6.4 62.7 L13.3 62.8 M18.4 63.3 L25.1 63.5 M27.6 63.5 L32.6 63.6 M38.1 64.1 L46.5 64.3 M51.0 63.7 L57.1 63.9 M61.5 64.4 L66.6 64.5 M70.6 64.1 L78.0 64.2 M80.6 64.3 L87.7 64.4 M-3.7 70.0 L4.1 70.1 M8.4 69.6 L15.8 69.7 M19.3 69.9 L28.8 70.0 M32.1 70.4 L39.2 70.6 M44.2 71.2 L50.4 71.3 M52.9 70.9 L61.5 71.1 M66.7 71.3 L72.3 71.4 M77.7 70.8 L85.7 71.0 M91.1 71.1 L100.5 71.3 M-1.0 76.7 L4.2 76.8 M8.9 76.7 L18.3 76.9 M22.4 76.9 L28.5 77.0 M34.1 77.5 L42.0 77.7 M45.0 77.6 L53.3 77.7 M55.9 77.1 L64.7 77.3 M67.8 77.9 L72.9 78.0 M75.7 77.3 L85.2 77.5 M90.2 78.3 L98.6 78.4 M-9.6 82.4 L-1.7 82.6 M3.2 83.2 L9.7 83.3 M13.8 83.2 L22.9 83.4 M28.0 83.4 L33.2 83.5 M37.8 84.2 L45.5 84.3 M48.6 84.4 L57.2 84.5 M60.1 84.3 L65.6 84.4 M71.1 84.4 L78.8 84.5 M82.9 84.7 L91.5 84.9 M-7.1 89.9 L2.2 90.1 M7.2 89.9 L13.3 90.1 M18.4 90.6 L26.6 90.8 M31.9 90.3 L37.3 90.4 M40.9 90.5 L46.7 90.6 M52.2 90.2 L60.7 90.4 M63.9 91.4 L70.5 91.6 M74.3 91.2 L79.9 91.3 M83.1 91.5 L88.1 91.6" stroke="#137a80" stroke-width="2.6" fill="none"/><path d="M-8.0 3.5 L0.8 3.7 M4.9 3.9 L13.9 4.1 M20.5 3.9 L26.9 4.0 M32.4 4.5 L40.5 4.7 M45.6 4.8 L53.4 4.9 M58.9 4.3 L66.0 4.4 M71.0 4.9 L76.6 5.0 M82.6 5.4 L90.3 5.5 M-7.8 9.3 L1.3 9.5 M4.5 9.8 L15.2 10.0 M19.1 10.6 L29.3 10.9 M32.8 10.3 L39.9 10.5 M44.0 10.9 L49.5 11.0 M53.7 10.7 L61.2 10.8 M64.7 11.7 L70.2 11.8 M76.2 11.0 L84.6 11.2 M88.2 11.5 L94.3 11.6 M-3.9 16.2 L2.6 16.3 M8.3 16.7 L16.1 16.9 M20.6 17.4 L28.9 17.5 M33.1 17.2 L38.9 17.4 M43.4 17.0 L53.0 17.2 M59.5 17.8 L65.0 18.0 M69.8 18.5 L76.9 18.6 M82.7 18.3 L89.0 18.4 M-0.5 23.4 L5.4 23.5 M11.3 23.4 L19.2 23.5 M24.2 24.2 L31.1 24.3 M37.9 23.4 L45.9 23.6 M50.5 24.0 L60.2 24.2 M63.7 24.8 L70.1 24.9 M75.5 24.9 L82.5 25.0 M88.5 25.4 L99.1 25.6 M-11.3 30.1 L-0.9 30.3 M5.1 30.0 L13.6 30.2 M20.0 30.6 L28.8 30.7 M32.7 30.3 L38.6 30.4 M44.0 30.4 L52.4 30.6 M56.2 30.5 L66.7 30.7 M73.4 31.4 L83.0 31.6 M90.0 31.1 L99.1 31.3 M-5.8 36.8 L4.6 37.0 M8.1 36.1 L13.7 36.2 M19.9 36.6 L29.5 36.8 M33.0 37.6 L40.4 37.7 M46.3 38.0 L56.4 38.2 M62.4 37.2 L72.3 37.4 M75.4 38.2 L85.4 38.4 M89.7 38.1 L95.8 38.3 M-6.9 42.7 L0.9 42.8 M4.2 42.8 L10.7 42.9 M14.1 43.0 L21.8 43.2 M28.0 43.7 L36.3 43.9 M41.9 43.4 L48.5 43.6 M51.8 44.0 L59.1 44.2 M63.1 44.8 L70.1 45.0 M73.2 44.5 L81.0 44.7 M85.1 44.6 L94.4 44.7 M-2.2 49.6 L8.5 49.8 M11.9 50.2 L22.6 50.4 M29.4 50.8 L36.6 50.9 M39.7 51.0 L46.4 51.1 M51.5 50.7 L61.2 50.9 M67.7 51.3 L73.5 51.4 M77.2 51.8 L83.7 52.0 M88.4 51.3 L98.2 51.5 M-12.7 55.9 L-3.9 56.1 M1.8 56.9 L12.3 57.1 M17.1 56.3 L24.6 56.5 M30.7 56.7 L36.9 56.9 M40.1 57.1 L46.4 57.3 M51.3 57.4 L57.6 57.5 M63.7 57.3 L69.6 57.4 M74.7 58.5 L84.9 58.7 M90.2 58.7 L96.1 58.8 M-12.6 62.7 L-4.3 62.9 M1.0 63.7 L10.7 63.9 M15.7 63.2 L23.8 63.4 M29.0 63.4 L37.3 63.6 M42.1 63.6 L52.5 63.8 M56.5 64.7 L63.5 64.8 M67.7 65.0 L77.6 65.2 M84.1 64.4 L93.9 64.6 M-11.5 69.6 L-4.8 69.8 M1.7 69.6 L12.1 69.8 M15.6 69.8 L21.2 70.0 M26.4 70.7 L33.3 70.8 M38.9 70.9 L47.6 71.1 M51.9 70.6 L60.9 70.8 M65.0 71.4 L71.0 71.5 M77.6 71.6 L83.2 71.7 M86.4 71.3 L94.1 71.4 M-6.1 76.1 L2.1 76.3 M6.1 76.0 L12.8 76.1 M15.9 77.0 L24.3 77.2 M29.9 77.6 L36.7 77.7 M40.1 77.0 L47.8 77.1 M51.5 77.7 L62.1 77.9 M65.6 78.1 L72.0 78.2 M76.5 77.7 L83.5 77.8 M87.8 77.9 L96.4 78.1 M-0.9 83.1 L7.4 83.3 M11.7 83.8 L21.8 84.0 M27.4 83.2 L35.0 83.3 M40.5 83.4 L47.5 83.6 M52.6 84.3 L59.1 84.4 M65.1 84.5 L70.6 84.6 M74.4 84.8 L81.6 84.9 M88.4 85.1 L95.5 85.3 M-13.2 89.6 L-6.8 89.7 M-3.5 89.9 L4.9 90.1 M11.6 90.0 L21.1 90.2 M25.7 90.4 L34.5 90.5 M40.0 90.8 L49.2 91.0 M56.0 91.2 L64.7 91.4 M70.7 91.5 L78.1 91.6 M82.6 91.8 L92.5 92.0" stroke="#52d3d9" stroke-width="1.5" fill="none"/></g></svg><div style="left:2660.5px;top:990.2px;width:40px;text-align:center;font-size:17px;line-height:17px;color:#333;font-weight:400;white-space:nowrap;">4</div><svg style="position:absolute;left:2751px;top:884px;" width="13" height="8" viewBox="0 0 13 8"><path d="M0 8 L6.5 0 L13 8 Z" fill="#c8c8c8"/></svg><svg style="position:absolute;left:2751px;top:913px;" width="13" height="8" viewBox="0 0 13 8"><path d="M0 0 L6.5 8 L13 0 Z" fill="#222"/></svg><svg style="position:absolute;left:2751px;top:980px;" width="13" height="12" viewBox="0 0 13 12"><rect x="1" y="0" width="11" height="2" fill="#bbb"/><path d="M0 4 L6.5 12 L13 4 Z" fill="#222"/></svg><div style="left:2309px;top:1070.5px;font-size:17px;line-height:17px;color:#111;font-weight:700;white-space:nowrap;">Stitch settings</div><div style="left:2327.7px;top:1118.0px;font-size:16px;line-height:16px;color:#a6a6a6;font-weight:400;white-space:nowrap;">Spacing:</div><div style="left:2460px;top:1112px;width:85px;height:28px;background:#f0f0f0;border:1px dotted #d0d0d0;"></div><div style="left:2544px;top:1111px;width:27px;height:30px;background:#f4f4f4;border:1px solid #c8c8c8;"></div><svg style="position:absolute;left:2551px;top:1117px;" width="12" height="19" viewBox="0 0 12 19"><path d="M1 5 L6 0 L11 5 Z M1 14 L6 19 L11 14 Z" fill="#aaa"/></svg><div style="left:2575px;top:1119.0px;font-size:16px;line-height:16px;color:#a6a6a6;font-weight:400;white-space:nowrap;">mm</div><div style="left:2327.7px;top:1228.0px;font-size:16px;line-height:16px;color:#a6a6a6;font-weight:400;white-space:nowrap;">Length:</div><div style="left:2460px;top:1221px;width:85px;height:28px;background:#f0f0f0;border:1px dotted #d0d0d0;"></div><div style="left:2544px;top:1220px;width:27px;height:30px;background:#f4f4f4;border:1px solid #c8c8c8;"></div><svg style="position:absolute;left:2551px;top:1226px;" width="12" height="19" viewBox="0 0 12 19"><path d="M1 5 L6 0 L11 5 Z M1 14 L6 19 L11 14 Z" fill="#aaa"/></svg><div style="left:2575px;top:1228.0px;font-size:16px;line-height:16px;color:#a6a6a6;font-weight:400;white-space:nowrap;">mm</div><div style="left:2459px;top:1174px;width:19px;height:19px;background:#f4f4f4;border:1.5px solid #555;border-radius:3px;"></div><div style="left:2483px;top:1175.5px;font-size:17px;line-height:17px;color:#333;font-weight:400;white-space:nowrap;">Travel on edge</div><svg style="position:absolute;left:2620px;top:1074px;" width="80" height="94" viewBox="0 0 80 94"><path d="M2.5 13.5 L2.5 90 M2.5 90 L11.5 81 M11.5 4 L11.5 81 M11.5 4 L20.5 13.5 M20.5 13.5 L20.5 90 M20.5 90 L29.5 81 M29.5 4 L29.5 81 M29.5 4 L38.5 13.5 M38.5 13.5 L38.5 90 M38.5 90 L47.5 81 M47.5 4 L47.5 81 M47.5 4 L56.5 13.5 M56.5 13.5 L56.5 90 M56.5 90 L65.5 81 M65.5 4 L65.5 81 M65.5 4 L74.5 13.5 M74.5 13.5 L74.5 90" stroke="#e83030" stroke-width="1.3" fill="none"/><rect x="0.0" y="11.0" width="5" height="5" fill="#111"/><rect x="0.0" y="28.5" width="5" height="5" fill="#111"/><rect x="0.0" y="56.5" width="5" height="5" fill="#111"/><rect x="0.0" y="87.5" width="5" height="5" fill="#111"/><rect x="9.0" y="1.5" width="5" height="5" fill="#111"/><rect x="9.0" y="43.5" width="5" height="5" fill="#111"/><rect x="9.0" y="78.5" width="5" height="5" fill="#111"/><rect x="18.0" y="11.0" width="5" height="5" fill="#111"/><rect x="18.0" y="28.5" width="5" height="5" fill="#111"/><rect x="18.0" y="56.5" width="5" height="5" fill="#111"/><rect x="18.0" y="87.5" width="5" height="5" fill="#111"/><rect x="27.0" y="1.5" width="5" height="5" fill="#111"/><rect x="27.0" y="43.5" width="5" height="5" fill="#111"/><rect x="27.0" y="78.5" width="5" height="5" fill="#111"/><rect x="36.0" y="11.0" width="5" height="5" fill="#111"/><rect x="36.0" y="28.5" width="5" height="5" fill="#111"/><rect x="36.0" y="56.5" width="5" height="5" fill="#111"/><rect x="36.0" y="87.5" width="5" height="5" fill="#111"/><rect x="45.0" y="1.5" width="5" height="5" fill="#111"/><rect x="45.0" y="43.5" width="5" height="5" fill="#111"/><rect x="45.0" y="78.5" width="5" height="5" fill="#111"/><rect x="54.0" y="11.0" width="5" height="5" fill="#111"/><rect x="54.0" y="28.5" width="5" height="5" fill="#111"/><rect x="54.0" y="56.5" width="5" height="5" fill="#111"/><rect x="54.0" y="87.5" width="5" height="5" fill="#111"/><rect x="63.0" y="1.5" width="5" height="5" fill="#111"/><rect x="63.0" y="43.5" width="5" height="5" fill="#111"/><rect x="63.0" y="78.5" width="5" height="5" fill="#111"/><rect x="72.0" y="11.0" width="5" height="5" fill="#111"/><rect x="72.0" y="28.5" width="5" height="5" fill="#111"/><rect x="72.0" y="56.5" width="5" height="5" fill="#111"/><rect x="72.0" y="87.5" width="5" height="5" fill="#111"/></svg><div style="left:2790px;top:183px;width:33px;height:1549px;background:#f0f0f0;"></div><div style="left:2792px;top:189px;width:31px;height:271px;background:#c9def4;border:1px solid #a8b8c8;border-right:none;border-radius:6px 0 0 6px;"></div><div style="left:2797px;top:223px;width:22px;height:237px;writing-mode:vertical-rl;font-size:18px;letter-spacing:0.3px;line-height:22px;color:#333;white-space:nowrap;">Keyboard Design Collection</div><div style="left:2792px;top:482px;width:31px;height:84px;background:#c9def4;border:1px solid #a8b8c8;border-right:none;border-radius:6px 0 0 6px;"></div><div style="left:2797px;top:516px;width:22px;height:50px;writing-mode:vertical-rl;font-size:18px;letter-spacing:0.3px;line-height:22px;color:#333;white-space:nowrap;">Hints</div><div style="left:2792px;top:586px;width:31px;height:196px;background:#c9def4;border:1px solid #a8b8c8;border-right:none;border-radius:6px 0 0 6px;"></div><div style="left:2797px;top:620px;width:22px;height:162px;writing-mode:vertical-rl;font-size:18px;letter-spacing:0.3px;line-height:22px;color:#333;white-space:nowrap;">Design Information</div><div style="left:2792px;top:804px;width:31px;height:185px;background:#c9def4;border:1px solid #a8b8c8;border-right:none;border-radius:6px 0 0 6px;"></div><div style="left:2797px;top:838px;width:22px;height:151px;writing-mode:vertical-rl;font-size:18px;letter-spacing:0.3px;line-height:22px;color:#333;white-space:nowrap;">Design Overview</div><div style="left:2792px;top:1011px;width:31px;height:109px;background:#c9def4;border:1px solid #a8b8c8;border-right:none;border-radius:6px 0 0 6px;"></div><div style="left:2797px;top:1045px;width:22px;height:75px;writing-mode:vertical-rl;font-size:18px;letter-spacing:0.3px;line-height:22px;color:#333;white-space:nowrap;">Threads</div><svg style="position:absolute;left:2794px;top:193px;" width="27" height="28" viewBox="0 0 27 28"><circle cx="14" cy="6" r="5" fill="#f5b030"/><path d="M4 26 L14 8 L24 26 M8 18 H20" fill="none" stroke="#c03030" stroke-width="4"/></svg><svg style="position:absolute;left:2795px;top:486px;" width="26" height="26" viewBox="0 0 26 26"><circle cx="13" cy="12" r="7" fill="#f5b040"/><rect x="10" y="19" width="6" height="5" fill="#3aa0a8"/><path d="M13 0 V3 M2 12 H5 M21 12 H24 M5 4 L7 6 M21 4 L19 6" stroke="#555" stroke-width="1.5"/></svg><svg style="position:absolute;left:2795px;top:590px;" width="26" height="26" viewBox="0 0 26 26"><circle cx="13" cy="13" r="11" fill="none" stroke="#333" stroke-width="1.6"/><rect x="11.5" y="10" width="3" height="10" fill="#333"/><circle cx="13" cy="6.5" r="1.8" fill="#333"/></svg><svg style="position:absolute;left:2795px;top:808px;" width="26" height="28" viewBox="0 0 26 28"><rect x="1" y="1" width="24" height="26" fill="#fff" stroke="#333" stroke-width="1.5"/><rect x="1" y="1" width="24" height="4" fill="#2a5a9e"/><circle cx="9" cy="14" r="4" fill="#5cb040"/><path d="M5 24 L10 16 L15 24 Z" fill="#2a7ad0"/><rect x="14" y="12" width="9" height="9" fill="#e05050"/></svg><svg style="position:absolute;left:2795px;top:1015px;" width="26" height="28" viewBox="0 0 26 28"><rect x="2" y="1" width="22" height="4" rx="2" fill="#e8b060" stroke="#555" stroke-width="1"/><rect x="2" y="23" width="22" height="4" rx="2" fill="#e8b060" stroke="#555" stroke-width="1"/><rect x="5" y="5" width="16" height="18" fill="#3aa0a8" stroke="#333" stroke-width="1"/></svg><div style="left:0px;top:1732px;width:2823px;height:73px;background:#ebebeb;"></div><div style="left:11px;top:1744px;width:48px;height:48px;background:#9b1c20;"></div><div style="left:15.0px;top:1759.5px;width:40px;text-align:center;font-size:17px;line-height:17px;color:#fff;font-weight:400;white-space:nowrap;">1</div><div style="left:64px;top:1740px;width:1px;height:58px;background:#d8d8d8;"></div><div style="left:207px;top:1740px;width:1px;height:58px;background:#d8d8d8;"></div><div style="left:214px;top:1744px;width:48px;height:48px;background:#9b1c20;border:6px solid #000;box-shadow:inset 0 0 0 3px #fff;"></div><div style="left:218.0px;top:1759.5px;width:40px;text-align:center;font-size:17px;line-height:17px;color:#fff;font-weight:400;white-space:nowrap;">1</div><div style="left:268px;top:1747px;width:42px;height:42px;background:#2a5a9e;"></div><div style="left:268.0px;top:1759.5px;width:42px;text-align:center;font-size:17px;line-height:17px;color:#fff;font-weight:400;white-space:nowrap;">2</div><div style="left:319px;top:1747px;width:42px;height:42px;background:#2ba23a;"></div><div style="left:319.0px;top:1759.5px;width:42px;text-align:center;font-size:17px;line-height:17px;color:#fff;font-weight:400;white-space:nowrap;">3</div><div style="left:370px;top:1747px;width:42px;height:42px;background:#ffff17;"></div><div style="left:370.0px;top:1759.5px;width:42px;text-align:center;font-size:17px;line-height:17px;color:#000;font-weight:400;white-space:nowrap;">4</div><div style="left:421px;top:1747px;width:42px;height:42px;background:#87bfff;"></div><div style="left:421.0px;top:1759.5px;width:42px;text-align:center;font-size:17px;line-height:17px;color:#000;font-weight:400;white-space:nowrap;">5</div><div style="left:472px;top:1747px;width:42px;height:42px;background:#e49fc0;"></div><div style="left:472.0px;top:1759.5px;width:42px;text-align:center;font-size:17px;line-height:17px;color:#fff;font-weight:400;white-space:nowrap;">6</div><div style="left:523px;top:1747px;width:42px;height:42px;background:#4a2a7e;"></div><div style="left:523.0px;top:1759.5px;width:42px;text-align:center;font-size:17px;line-height:17px;color:#fff;font-weight:400;white-space:nowrap;">7</div><div style="left:574px;top:1747px;width:42px;height:42px;background:#6e4e34;"></div><div style="left:574.0px;top:1759.5px;width:42px;text-align:center;font-size:17px;line-height:17px;color:#fff;font-weight:400;white-space:nowrap;">8</div><div style="left:625px;top:1747px;width:42px;height:42px;background:#8f9294;"></div><div style="left:625.0px;top:1759.5px;width:42px;text-align:center;font-size:17px;line-height:17px;color:#fff;font-weight:400;white-space:nowrap;">9</div><div style="left:676px;top:1747px;width:42px;height:42px;background:#ecf2fb;"></div><div style="left:676.0px;top:1759.5px;width:42px;text-align:center;font-size:17px;line-height:17px;color:#000;font-weight:400;white-space:nowrap;">10</div><div style="left:727px;top:1747px;width:42px;height:42px;background:#050a10;"></div><div style="left:727.0px;top:1759.5px;width:42px;text-align:center;font-size:17px;line-height:17px;color:#fff;font-weight:400;white-space:nowrap;">11</div><div style="left:778px;top:1747px;width:42px;height:42px;background:#ffbf00;"></div><div style="left:778.0px;top:1759.5px;width:42px;text-align:center;font-size:17px;line-height:17px;color:#000;font-weight:400;white-space:nowrap;">12</div><div style="left:829px;top:1747px;width:42px;height:42px;background:#efe8dc;"></div><div style="left:829.0px;top:1759.5px;width:42px;text-align:center;font-size:17px;line-height:17px;color:#000;font-weight:400;white-space:nowrap;">13</div><div style="left:880px;top:1747px;width:42px;height:42px;background:#f8e6d8;"></div><div style="left:880.0px;top:1759.5px;width:42px;text-align:center;font-size:17px;line-height:17px;color:#000;font-weight:400;white-space:nowrap;">14</div><div style="left:931px;top:1747px;width:42px;height:42px;background:#ea6a10;"></div><div style="left:931.0px;top:1759.5px;width:42px;text-align:center;font-size:17px;line-height:17px;color:#fff;font-weight:400;white-space:nowrap;">15</div><div style="left:982px;top:1747px;width:42px;height:42px;background:#b2e27a;"></div><div style="left:982.0px;top:1759.5px;width:42px;text-align:center;font-size:17px;line-height:17px;color:#000;font-weight:400;white-space:nowrap;">16</div><div style="left:1033px;top:1747px;width:42px;height:42px;background:#9a5a6a;"></div><div style="left:1033.0px;top:1759.5px;width:42px;text-align:center;font-size:17px;line-height:17px;color:#fff;font-weight:400;white-space:nowrap;">17</div><div style="left:1084px;top:1747px;width:42px;height:42px;background:#1a4a8e;"></div><div style="left:1084.0px;top:1759.5px;width:42px;text-align:center;font-size:17px;line-height:17px;color:#fff;font-weight:400;white-space:nowrap;">18</div><div style="left:1135px;top:1747px;width:42px;height:42px;background:#a6c6e0;"></div><div style="left:1135.0px;top:1759.5px;width:42px;text-align:center;font-size:17px;line-height:17px;color:#000;font-weight:400;white-space:nowrap;">19</div><div style="left:1186px;top:1747px;width:42px;height:42px;background:#f59a7a;"></div><div style="left:1186.0px;top:1759.5px;width:42px;text-align:center;font-size:17px;line-height:17px;color:#fff;font-weight:400;white-space:nowrap;">20</div><div style="left:1237px;top:1747px;width:42px;height:42px;background:#7aa65e;"></div><div style="left:1237.0px;top:1759.5px;width:42px;text-align:center;font-size:17px;line-height:17px;color:#fff;font-weight:400;white-space:nowrap;">21</div><div style="left:1288px;top:1747px;width:42px;height:42px;background:#457634;"></div><div style="left:1288.0px;top:1759.5px;width:42px;text-align:center;font-size:17px;line-height:17px;color:#fff;font-weight:400;white-space:nowrap;">22</div><div style="left:1339px;top:1747px;width:42px;height:42px;background:#d0808e;"></div><div style="left:1339.0px;top:1759.5px;width:42px;text-align:center;font-size:17px;line-height:17px;color:#fff;font-weight:400;white-space:nowrap;">23</div><div style="left:1390px;top:1747px;width:42px;height:42px;background:#ffd070;"></div><div style="left:1390.0px;top:1759.5px;width:42px;text-align:center;font-size:17px;line-height:17px;color:#000;font-weight:400;white-space:nowrap;">24</div><div style="left:1441px;top:1747px;width:42px;height:42px;background:#6a4e3a;"></div><div style="left:1441.0px;top:1759.5px;width:42px;text-align:center;font-size:17px;line-height:17px;color:#fff;font-weight:400;white-space:nowrap;">25</div><div style="left:1492px;top:1747px;width:42px;height:42px;background:#1a9ab0;"></div><div style="left:1492.0px;top:1759.5px;width:42px;text-align:center;font-size:17px;line-height:17px;color:#fff;font-weight:400;white-space:nowrap;">26</div><div style="left:1543px;top:1747px;width:42px;height:42px;background:#7e2a36;"></div><div style="left:1543.0px;top:1759.5px;width:42px;text-align:center;font-size:17px;line-height:17px;color:#fff;font-weight:400;white-space:nowrap;">27</div><div style="left:1594px;top:1747px;width:42px;height:42px;background:#1e4a9a;"></div><div style="left:1594.0px;top:1759.5px;width:42px;text-align:center;font-size:17px;line-height:17px;color:#fff;font-weight:400;white-space:nowrap;">28</div><div style="left:1645px;top:1747px;width:42px;height:42px;background:#444c50;"></div><div style="left:1645.0px;top:1759.5px;width:42px;text-align:center;font-size:17px;line-height:17px;color:#fff;font-weight:400;white-space:nowrap;">29</div><div style="left:1696px;top:1747px;width:42px;height:42px;background:#1e5a3a;"></div><div style="left:1696.0px;top:1759.5px;width:42px;text-align:center;font-size:17px;line-height:17px;color:#fff;font-weight:400;white-space:nowrap;">30</div><div style="left:1747px;top:1747px;width:42px;height:42px;background:#98b42a;"></div><div style="left:1747.0px;top:1759.5px;width:42px;text-align:center;font-size:17px;line-height:17px;color:#fff;font-weight:400;white-space:nowrap;">31</div><div style="left:1798px;top:1747px;width:42px;height:42px;background:#c02a2a;"></div><div style="left:1798.0px;top:1759.5px;width:42px;text-align:center;font-size:17px;line-height:17px;color:#fff;font-weight:400;white-space:nowrap;">32</div><div style="left:1849px;top:1747px;width:42px;height:42px;background:#efeae0;"></div><div style="left:1849.0px;top:1759.5px;width:42px;text-align:center;font-size:17px;line-height:17px;color:#000;font-weight:400;white-space:nowrap;">33</div><div style="left:1900px;top:1747px;width:42px;height:42px;background:#ffff6e;"></div><div style="left:1900.0px;top:1759.5px;width:42px;text-align:center;font-size:17px;line-height:17px;color:#000;font-weight:400;white-space:nowrap;">34</div><div style="left:1951px;top:1747px;width:42px;height:42px;background:#1a2238;"></div><div style="left:1951.0px;top:1759.5px;width:42px;text-align:center;font-size:17px;line-height:17px;color:#fff;font-weight:400;white-space:nowrap;">35</div><div style="left:2002px;top:1747px;width:42px;height:42px;background:#7a60a8;"></div><div style="left:2002.0px;top:1759.5px;width:42px;text-align:center;font-size:17px;line-height:17px;color:#fff;font-weight:400;white-space:nowrap;">36</div><div style="left:2053px;top:1747px;width:42px;height:42px;background:#9a9a70;"></div><div style="left:2053.0px;top:1759.5px;width:42px;text-align:center;font-size:17px;line-height:17px;color:#fff;font-weight:400;white-space:nowrap;">37</div><div style="left:2104px;top:1747px;width:42px;height:42px;background:#e84a7a;"></div><div style="left:2104.0px;top:1759.5px;width:42px;text-align:center;font-size:17px;line-height:17px;color:#fff;font-weight:400;white-space:nowrap;">38</div><div style="left:2155px;top:1747px;width:42px;height:42px;background:#4a5aaa;"></div><div style="left:2155.0px;top:1759.5px;width:42px;text-align:center;font-size:17px;line-height:17px;color:#fff;font-weight:400;white-space:nowrap;">39</div><div style="left:2206px;top:1747px;width:42px;height:42px;background:#7ae65a;"></div><div style="left:2206.0px;top:1759.5px;width:42px;text-align:center;font-size:17px;line-height:17px;color:#000;font-weight:400;white-space:nowrap;">40</div><div style="left:2257px;top:1747px;width:42px;height:42px;background:#a81a5a;"></div><div style="left:2257.0px;top:1759.5px;width:42px;text-align:center;font-size:17px;line-height:17px;color:#fff;font-weight:400;white-space:nowrap;">41</div><div style="left:2308px;top:1747px;width:42px;height:42px;background:#1a9aaa;"></div><div style="left:2308.0px;top:1759.5px;width:42px;text-align:center;font-size:17px;line-height:17px;color:#fff;font-weight:400;white-space:nowrap;">42</div><svg style="position:absolute;left:0px;top:1740px;" width="8" height="58" viewBox="0 0 8 58"><rect x="1" y="0" width="2" height="2" fill="#c0c0c0"/><rect x="5" y="3" width="2" height="2" fill="#c0c0c0"/><rect x="1" y="6" width="2" height="2" fill="#c0c0c0"/><rect x="5" y="9" width="2" height="2" fill="#c0c0c0"/><rect x="1" y="12" width="2" height="2" fill="#c0c0c0"/><rect x="5" y="15" width="2" height="2" fill="#c0c0c0"/><rect x="1" y="18" width="2" height="2" fill="#c0c0c0"/><rect x="5" y="21" width="2" height="2" fill="#c0c0c0"/><rect x="1" y="24" width="2" height="2" fill="#c0c0c0"/><rect x="5" y="27" width="2" height="2" fill="#c0c0c0"/><rect x="1" y="30" width="2" height="2" fill="#c0c0c0"/><rect x="5" y="33" width="2" height="2" fill="#c0c0c0"/><rect x="1" y="36" width="2" height="2" fill="#c0c0c0"/><rect x="5" y="39" width="2" height="2" fill="#c0c0c0"/><rect x="1" y="42" width="2" height="2" fill="#c0c0c0"/><rect x="5" y="45" width="2" height="2" fill="#c0c0c0"/><rect x="1" y="48" width="2" height="2" fill="#c0c0c0"/><rect x="5" y="51" width="2" height="2" fill="#c0c0c0"/><rect x="1" y="54" width="2" height="2" fill="#c0c0c0"/></svg><svg style="position:absolute;left:84px;top:1741px;" width="36" height="38" viewBox="0 0 36 38"><path d="M4 34 L3 36 L6 35 L24 14 L20 10 Z" fill="#3aa0a8" stroke="#333" stroke-width="1.4"/><path d="M19 9 L25 15 M22 12 L30 4 Q33 2 34 5 Q35 8 32 9 L26 16" fill="#f5b860" stroke="#333" stroke-width="1.4"/></svg><div style="left:62.0px;top:1782.1px;width:80px;text-align:center;font-size:18px;line-height:18px;color:#333;font-weight:400;white-space:nowrap;">Pick</div><svg style="position:absolute;left:151px;top:1739px;" width="36" height="40" viewBox="0 0 36 40"><path d="M4 24 L20 8 L34 22 L18 38 Z" fill="#f5b860" stroke="#333" stroke-width="1.6"/><circle cx="19" cy="22" r="3" fill="#333"/><path d="M19 22 L23 2" stroke="#333" stroke-width="2"/><path d="M8 20 Q2 26 4 36" fill="none" stroke="#1aa0a8" stroke-width="4"/></svg><div style="left:131.0px;top:1783.1px;width:80px;text-align:center;font-size:18px;line-height:18px;color:#333;font-weight:400;white-space:nowrap;">Apply</div><div style="left:2400px;top:1743px;width:25px;height:50px;background:#fff;border:1px solid #a8a8a8;"></div><svg style="position:absolute;left:2405px;top:1750px;" width="15" height="36" viewBox="0 0 15 36"><path d="M1 8 L7.5 1 L14 8 Z M1 28 L7.5 35 L14 28 Z" fill="#555"/></svg><div style="left:2430px;top:1740px;width:1px;height:58px;background:#d8d8d8;"></div><svg style="position:absolute;left:2449px;top:1741px;" width="36" height="36" viewBox="0 0 36 36"><path d="M18 2 V34 M2 18 H34" stroke="#333" stroke-width="7" stroke-linecap="round"/></svg><div style="left:2427.0px;top:1781.1px;width:80px;text-align:center;font-size:18px;line-height:18px;color:#333;font-weight:400;white-space:nowrap;">Add</div><svg style="position:absolute;left:2522px;top:1751px;" width="36" height="14" viewBox="0 0 36 14"><path d="M3 7 H33" stroke="#333" stroke-width="7" stroke-linecap="round"/></svg><div style="left:2496.0px;top:1781.1px;width:90px;text-align:center;font-size:18px;line-height:18px;color:#333;font-weight:400;white-space:nowrap;">Remove</div><div style="left:2586px;top:1740px;width:1px;height:58px;background:#d8d8d8;"></div><svg style="position:absolute;left:2606px;top:1746px;" width="36" height="30" viewBox="0 0 36 30"><rect x="0" y="5" width="11" height="24" fill="#4aa8b0"/><rect x="25" y="5" width="11" height="24" fill="#e05050"/><rect x="11" y="5" width="14" height="24" fill="#f5b860"/><path d="M11 9 L25 27 M11 15 L21 28 M14 6 L25 20 M18 5 L25 13" stroke="#222" stroke-width="1.6"/><rect x="8" y="3" width="4" height="4" fill="#00f"/><rect x="30" y="3" width="4" height="4" fill="#00f"/></svg><div style="left:2584.0px;top:1781.1px;width:80px;text-align:center;font-size:18px;line-height:18px;color:#333;font-weight:400;white-space:nowrap;">Hide</div><svg style="position:absolute;left:2676px;top:1746px;" width="36" height="30" viewBox="0 0 36 30"><rect x="0" y="5" width="11" height="24" fill="#4aa8b0"/><rect x="25" y="5" width="11" height="24" fill="#e05050"/><rect x="11" y="5" width="14" height="24" fill="#f5b860"/><path d="M12 6 L24 28 M24 6 L12 28" stroke="#222" stroke-width="1.6"/><rect x="8" y="3" width="4" height="4" fill="#00f"/><rect x="30" y="3" width="4" height="4" fill="#00f"/></svg><div style="left:2649.0px;top:1781.1px;width:90px;text-align:center;font-size:18px;line-height:18px;color:#333;font-weight:400;white-space:nowrap;">Discard</div><div style="left:2735px;top:1740px;width:1px;height:58px;background:#d8d8d8;"></div><svg style="position:absolute;left:2763px;top:1741px;" width="36" height="38" viewBox="0 0 36 38"><rect x="2" y="1" width="32" height="6" rx="3" fill="#e8b060" stroke="#333" stroke-width="1.4"/><rect x="2" y="31" width="32" height="6" rx="3" fill="#e8b060" stroke="#333" stroke-width="1.4"/><rect x="6" y="7" width="24" height="24" fill="#4aa8b0" stroke="#333" stroke-width="1.4"/></svg><div style="left:2735.0px;top:1781.1px;width:90px;text-align:center;font-size:18px;line-height:18px;color:#333;font-weight:400;white-space:nowrap;">Threads</div><div style="left:0px;top:1805px;width:2823px;height:31px;background:#256a96;border-top:1px solid #1f5f8a;"></div><div style="left:0px;top:1835px;width:2823px;height:2px;background:#2452a0;"></div><div style="left:0px;top:1837px;width:2823px;height:2px;background:#121a28;"></div><div style="left:2822px;top:0px;width:1px;height:1837px;background:#2452a0;"></div><div style="left:1.5px;top:1814.3px;font-size:17.5px;line-height:17.5px;color:#fff;font-weight:400;white-space:nowrap;">Select and move one or more reshape points to reshape. Press &lt;Spacebar&gt; to toggle between corner and curve reshape points.</div><div style="left:1855px;top:1814.3px;font-size:17.5px;line-height:17.5px;color:#fff;font-weight:400;white-space:nowrap;">W</div><div style="left:1886px;top:1814.3px;font-size:17.5px;line-height:17.5px;color:#fff;font-weight:400;white-space:nowrap;">0.0 H</div><div style="left:1939px;top:1814.3px;font-size:17.5px;line-height:17.5px;color:#fff;font-weight:400;white-space:nowrap;">0.0</div><div style="left:2011px;top:1814.3px;font-size:17.5px;line-height:17.5px;color:#fff;font-weight:400;white-space:nowrap;">Empty Design</div><div style="left:2399px;top:1814.3px;font-size:17.5px;line-height:17.5px;color:#fff;font-weight:400;white-space:nowrap;">Pure Cotton</div><div style="left:2645px;top:1814.5px;font-size:17px;line-height:17px;color:#fff;font-weight:400;white-space:nowrap;">EMB Grade: A</div><svg style="position:absolute;left:2759px;top:1812px;" width="19" height="17" viewBox="0 0 19 17"><path d="M10 17 L2 9 Q-1 5 2 2 Q6 -1 10 4 Q14 -1 18 2 Q21 5 18 9 Z" fill="#e81010"/></svg>
</body></html>
